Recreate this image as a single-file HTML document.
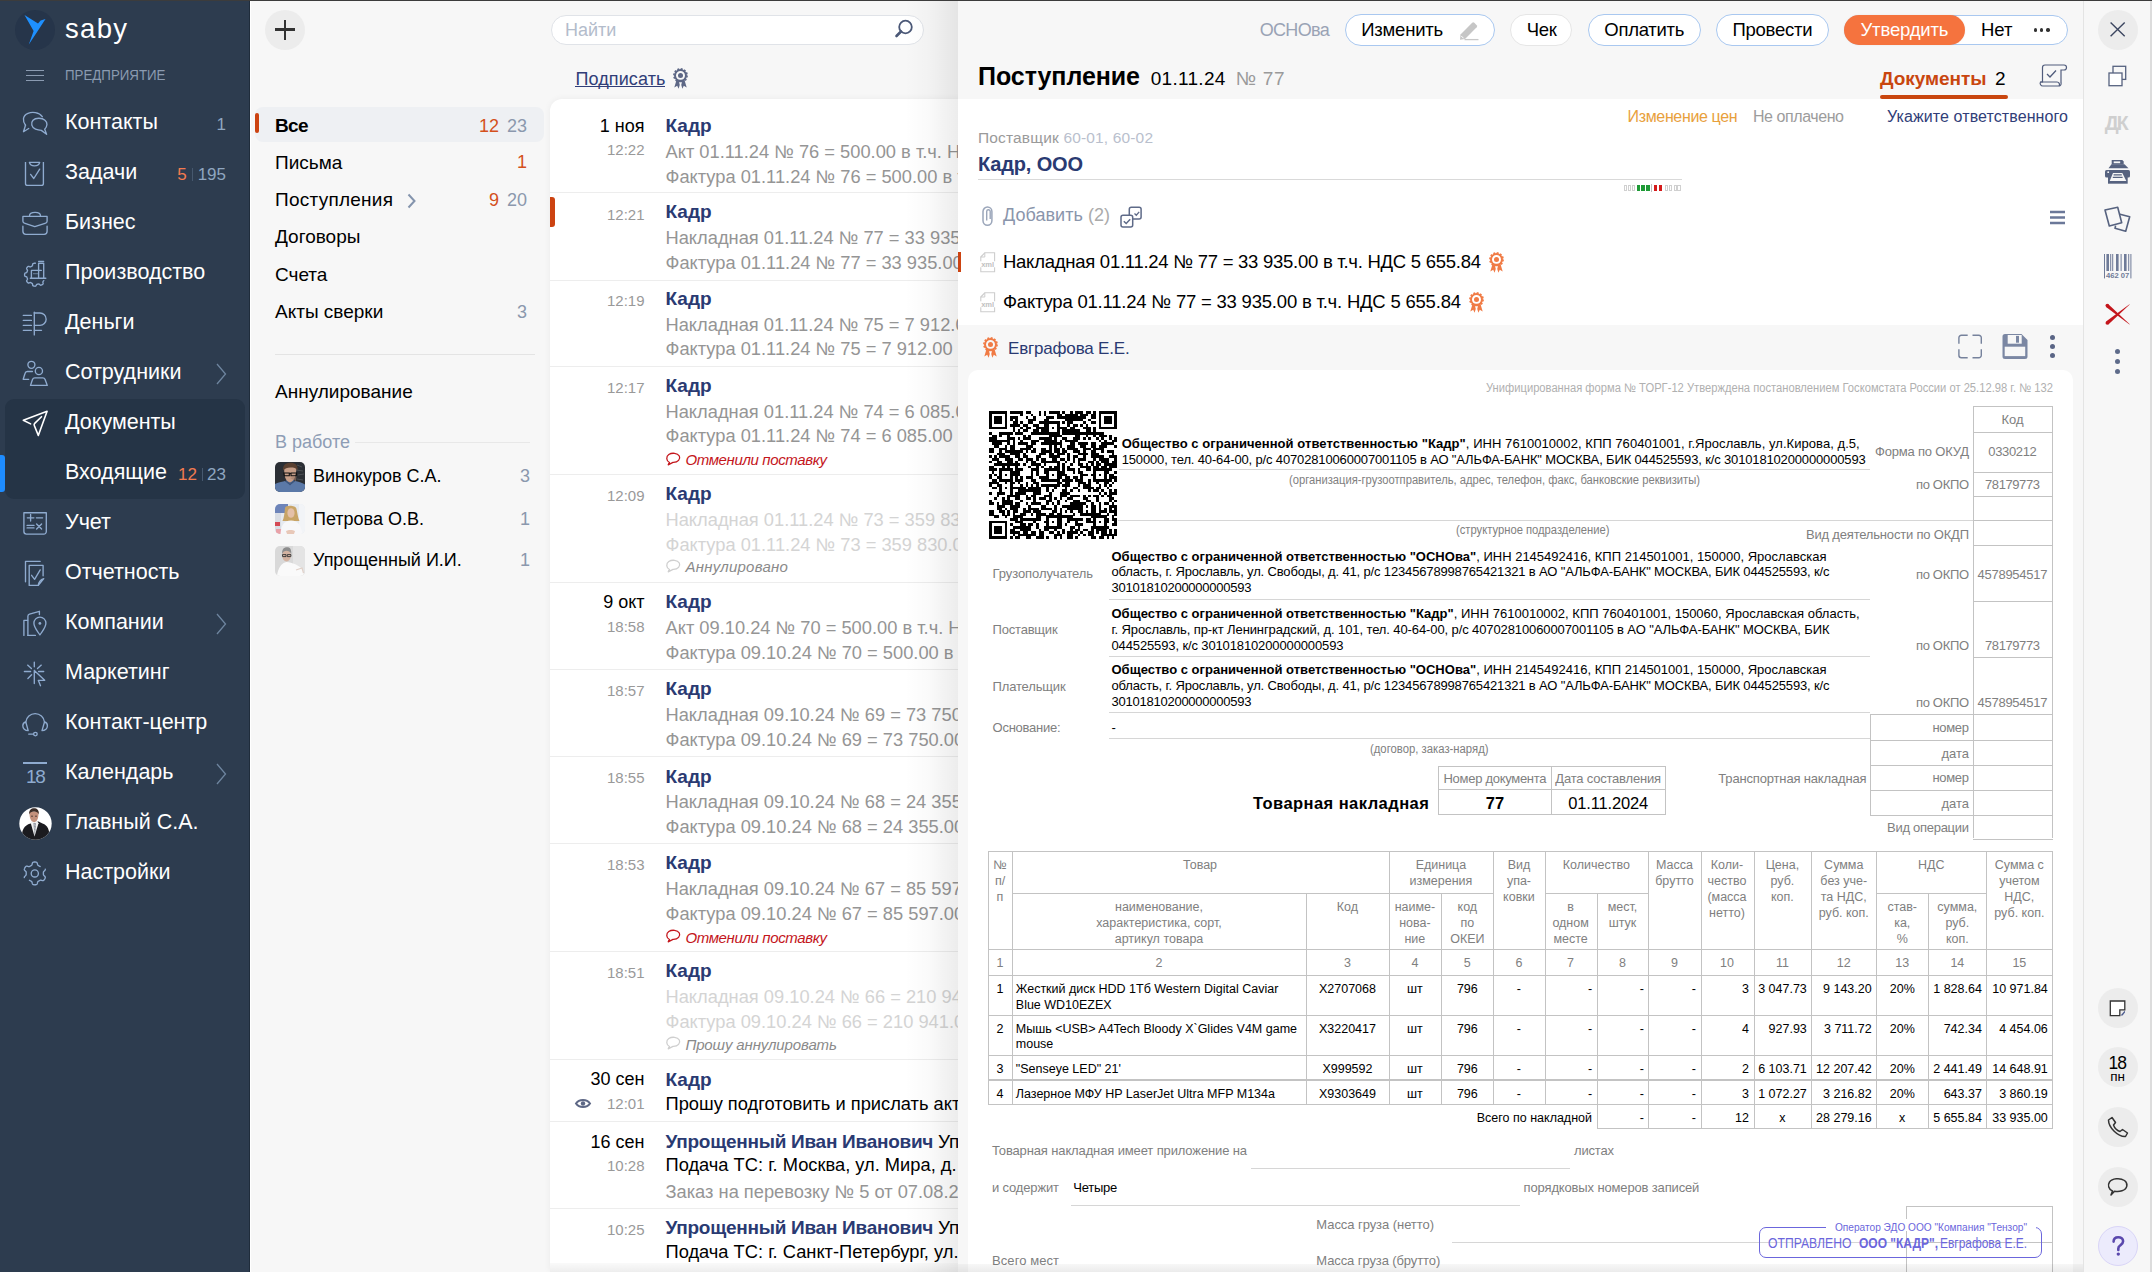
<!DOCTYPE html>
<html lang="ru"><head><meta charset="utf-8"><title>Saby</title>
<style>
*{margin:0;padding:0;box-sizing:border-box}
html,body{width:2152px;height:1272px;overflow:hidden}
body{position:relative;font-family:"Liberation Sans",sans-serif;background:#f7f7f7;color:#000}
.a{position:absolute}
.t{position:absolute;white-space:nowrap}
svg{overflow:visible}
</style></head><body>
<div class="a" style="left:0px;top:0px;width:250px;height:1272px;background:#2d3c4f"></div>
<div class="a" style="left:249px;top:0px;width:1px;height:1272px;background:#1f2c3b"></div>
<div class="a" style="left:15px;top:10px;width:40px;height:40px;background:#26354a;border-radius:50%"></div>
<svg class="a" style="left:15px;top:10px;" width="40" height="40" viewBox="0 0 40 40"><path d="M9.5 5 L23 13.6 L25.6 10.4 L30.5 9 L25 17.5 L13.8 34.5 L18.6 21 Z" fill="#1e90ff"/></svg>
<div class="t" style="left:65px;top:14.72px;font-size:27.5px;line-height:27.5px;letter-spacing:1.304px;"><span style="color:#ffffff">saby</span></div>
<div class="a" style="left:26px;top:70px;width:18px;height:1.2px;background:#8b9bb1"></div>
<div class="a" style="left:26px;top:75px;width:18px;height:1.2px;background:#8b9bb1"></div>
<div class="a" style="left:26px;top:80px;width:18px;height:1.2px;background:#8b9bb1"></div>
<div class="t" style="left:65px;top:67.3px;font-size:15px;line-height:15px;transform:scaleX(0.8870);transform-origin:0 0;"><span style="color:#8b9bb1">ПРЕДПРИЯТИЕ</span></div>
<div class="a" style="left:5px;top:399px;width:240px;height:100px;background:#253446;border-radius:9px"></div>
<div class="a" style="left:0px;top:455px;width:5px;height:37px;background:#1e8cff;border-radius:0 3px 3px 0"></div>
<div class="t" style="left:65px;top:111.8px;font-size:21.5px;line-height:21.5px;"><span style="color:#ffffff">Контакты</span></div>
<div class="t" style="left:65px;top:161.8px;font-size:21.5px;line-height:21.5px;"><span style="color:#ffffff">Задачи</span></div>
<div class="t" style="left:65px;top:211.8px;font-size:21.5px;line-height:21.5px;"><span style="color:#ffffff">Бизнес</span></div>
<div class="t" style="left:65px;top:261.8px;font-size:21.5px;line-height:21.5px;"><span style="color:#ffffff">Производство</span></div>
<div class="t" style="left:65px;top:311.8px;font-size:21.5px;line-height:21.5px;"><span style="color:#ffffff">Деньги</span></div>
<div class="t" style="left:65px;top:361.8px;font-size:21.5px;line-height:21.5px;"><span style="color:#ffffff">Сотрудники</span></div>
<div class="t" style="left:65px;top:411.8px;font-size:21.5px;line-height:21.5px;"><span style="color:#ffffff">Документы</span></div>
<div class="t" style="left:65px;top:461.8px;font-size:21.5px;line-height:21.5px;"><span style="color:#ffffff">Входящие</span></div>
<div class="t" style="left:65px;top:511.8px;font-size:21.5px;line-height:21.5px;"><span style="color:#ffffff">Учет</span></div>
<div class="t" style="left:65px;top:561.8px;font-size:21.5px;line-height:21.5px;"><span style="color:#ffffff">Отчетность</span></div>
<div class="t" style="left:65px;top:611.8px;font-size:21.5px;line-height:21.5px;"><span style="color:#ffffff">Компании</span></div>
<div class="t" style="left:65px;top:661.8px;font-size:21.5px;line-height:21.5px;"><span style="color:#ffffff">Маркетинг</span></div>
<div class="t" style="left:65px;top:711.8px;font-size:21.5px;line-height:21.5px;"><span style="color:#ffffff">Контакт-центр</span></div>
<div class="t" style="left:65px;top:761.8px;font-size:21.5px;line-height:21.5px;"><span style="color:#ffffff">Календарь</span></div>
<div class="t" style="left:65px;top:811.8px;font-size:21.5px;line-height:21.5px;"><span style="color:#ffffff">Главный С.А.</span></div>
<div class="t" style="left:65px;top:861.8px;font-size:21.5px;line-height:21.5px;"><span style="color:#ffffff">Настройки</span></div>
<svg class="a" style="left:22px;top:109px;" width="26" height="26" viewBox="0 0 26 26"><path fill="none" stroke="#8fabcf" stroke-width="1.35" stroke-linecap="round" stroke-linejoin="round" d="M3.5 16.2 C0.5 12.5 0.3 6.5 6 4.3 C10 2.8 17 3 20.3 7.7"/><path fill="none" stroke="#8fabcf" stroke-width="1.35" stroke-linecap="round" stroke-linejoin="round" d="M3.5 16.2 L1.5 22.7 L6.7 19.5"/><path fill="none" stroke="#8fabcf" stroke-width="1.35" stroke-linecap="round" stroke-linejoin="round" d="M22.7 20.3 C25.5 17.5 25.8 13.5 23 11.2 C20 8.6 13.5 8.6 11 11.3 C8.5 14 9.5 18.5 13.5 20.2 C15.5 21 17.5 21.3 19.3 21.4 L24.6 25.3 Z"/></svg>
<svg class="a" style="left:22px;top:159px;" width="26" height="26" viewBox="0 0 26 26"><path fill="none" stroke="#8fabcf" stroke-width="1.35" stroke-linecap="butt" stroke-linejoin="round" d="M3.5 3.1 V24.4 A2 2 0 0 0 5.5 26.4 H19.4 A2 2 0 0 0 21.4 24.4 V3.1"/><path fill="none" stroke="#8fabcf" stroke-width="1.35" stroke-linecap="round" stroke-linejoin="round" d="M7.4 3.3 H17.7 C17.2 5.6 15.8 6.8 12.5 6.8 C9.2 6.8 7.9 5.6 7.4 3.3 Z"/><path fill="none" stroke="#8fabcf" stroke-width="1.35" stroke-linecap="round" stroke-linejoin="round" d="M8.6 15.4 L11.8 19.5 L17.7 10.1"/></svg>
<svg class="a" style="left:22px;top:209px;" width="26" height="26" viewBox="0 0 26 26"><path fill="none" stroke="#8fabcf" stroke-width="1.35" stroke-linecap="round" stroke-linejoin="round" d="M7.5 6.9 C7.5 4.2 9.5 3.4 13.1 3.4 C16.7 3.4 18.5 4.2 18.5 6.9"/><path fill="none" stroke="#8fabcf" stroke-width="1.35" stroke-linecap="round" stroke-linejoin="round" d="M0.9 7.4 H25.1 V12.2 C25.1 13.5 24.2 14 23 14.4 L12.8 17.6 L3 14.4 C1.8 14 0.9 13.5 0.9 12.2 Z"/><path fill="none" stroke="#8fabcf" stroke-width="1.35" stroke-linecap="round" stroke-linejoin="round" d="M0.9 17.2 V22.3 A3 3 0 0 0 3.9 25.3 H22.1 A3 3 0 0 0 25.1 22.3 V17.2"/></svg>
<svg class="a" style="left:22px;top:259px;" width="26" height="26" viewBox="0 0 26 26"><path fill="none" stroke="#8fabcf" stroke-width="1.35" stroke-linecap="round" stroke-linejoin="round" d="M13.40 4.22 L13.30 4.20 L13.19 4.19 L13.09 4.18 L12.99 4.18 L12.89 4.19 L12.79 4.20 L12.69 4.21 L12.59 4.22 L12.49 4.23 L12.39 4.24 L12.29 4.26 L12.19 4.28 L12.09 4.29 L11.99 4.31 L11.89 4.33 L11.80 4.36 L11.70 4.38 L11.60 4.40 L11.50 4.43 L11.41 4.46 L11.31 4.50 L11.22 4.53 L11.13 4.58 L11.04 4.63 L10.95 4.69 L10.87 4.77 L10.79 4.86 L10.73 4.98 L10.67 5.12 L10.63 5.30 L10.60 5.49 L10.58 5.71 L10.56 5.92 L10.54 6.13 L10.51 6.31 L10.48 6.46 L10.44 6.58 L10.39 6.69 L10.33 6.77 L10.27 6.84 L10.21 6.90 L10.14 6.95 L10.07 7.00 L10.00 7.04 L9.92 7.09 L9.85 7.13 L9.78 7.17 L9.71 7.21 L9.63 7.25 L9.56 7.29 L9.49 7.34 L9.42 7.38 L9.34 7.42 L9.27 7.46 L9.20 7.50 L9.13 7.55 L9.06 7.59 L8.98 7.63 L8.91 7.67 L8.84 7.71 L8.77 7.75 L8.69 7.79 L8.61 7.82 L8.53 7.85 L8.44 7.88 L8.35 7.89 L8.24 7.89 L8.12 7.87 L7.98 7.84 L7.82 7.78 L7.64 7.70 L7.45 7.61 L7.25 7.52 L7.06 7.44 L6.88 7.38 L6.72 7.34 L6.57 7.33 L6.45 7.34 L6.34 7.36 L6.24 7.40 L6.14 7.45 L6.06 7.51 L5.98 7.57 L5.90 7.63 L5.82 7.70 L5.75 7.77 L5.68 7.84 L5.61 7.91 L5.54 7.99 L5.47 8.06 L5.41 8.14 L5.34 8.21 L5.28 8.29 L5.21 8.37 L5.15 8.45 L5.09 8.53 L5.03 8.61 L4.97 8.69 L4.91 8.77 L4.86 8.86 L4.80 8.94 L4.75 9.03 L4.71 9.12 L4.67 9.22 L4.64 9.32 L4.62 9.43 L4.62 9.54 L4.64 9.67 L4.68 9.81 L4.75 9.97 L4.84 10.13 L4.96 10.31 L5.08 10.49 L5.20 10.66 L5.31 10.82 L5.39 10.97 L5.45 11.09 L5.48 11.21 L5.49 11.31 L5.50 11.41 L5.49 11.49 L5.47 11.58 L5.45 11.66 L5.42 11.74 L5.40 11.82 L5.37 11.90 L5.34 11.98 L5.31 12.06 L5.28 12.14 L5.25 12.21 L5.22 12.29 L5.20 12.37 L5.17 12.45 L5.14 12.53 L5.11 12.61 L5.08 12.69 L5.06 12.76 L5.03 12.84 L5.00 12.92 L4.97 13.00 L4.94 13.08 L4.91 13.16 L4.87 13.23 L4.83 13.31 L4.78 13.38 L4.72 13.46 L4.65 13.53 L4.55 13.59 L4.43 13.65 L4.28 13.71 L4.10 13.77 L3.90 13.82 L3.69 13.88 L3.49 13.94 L3.30 14.01 L3.14 14.08 L3.02 14.16 L2.92 14.25 L2.84 14.34 L2.78 14.43 L2.74 14.53 L2.71 14.62 L2.68 14.72 L2.66 14.82 L2.65 14.92 L2.63 15.02 L2.62 15.12 L2.62 15.22 L2.61 15.32 L2.60 15.42 L2.60 15.52 L2.60 15.62 L2.60 15.72 L2.60 15.83 L2.60 15.93 L2.61 16.03 L2.61 16.13 L2.62 16.23 L2.63 16.33 L2.64 16.43 L2.65 16.53 L2.67 16.63 L2.69 16.73 L2.72 16.83 L2.76 16.92 L2.81 17.02 L2.87 17.11 L2.96 17.20 L3.07 17.28 L3.22 17.36 L3.39 17.43 L3.58 17.49 L3.79 17.55 L4.00 17.60 L4.19 17.66 L4.36 17.72 L4.49 17.78 L4.60 17.84 L4.68 17.91 L4.75 17.98 L4.81 18.05 L4.85 18.13 L4.89 18.20 L4.92 18.28 L4.95 18.36 L4.98 18.44 L5.01 18.52 L5.04 18.60 L5.07 18.67 L5.10 18.75 L5.12 18.83 L5.15 18.91 L5.18 18.99 L5.21 19.07 L5.24 19.15 L5.27 19.22 L5.30 19.30 L5.33 19.38 L5.36 19.46 L5.38 19.54 L5.41 19.62 L5.44 19.70 L5.46 19.78 L5.48 19.86 L5.49 19.95 L5.50 20.04 L5.49 20.14 L5.47 20.25 L5.42 20.37 L5.35 20.50 L5.26 20.65 L5.15 20.82 L5.02 21.00 L4.90 21.18 L4.79 21.35 L4.71 21.51 L4.65 21.66 L4.63 21.79 L4.62 21.92 L4.63 22.03 L4.65 22.13 L4.69 22.23 L4.73 22.32 L4.78 22.41 L4.83 22.50 L4.88 22.58 L4.94 22.67 L5.00 22.75 L5.06 22.83 L5.12 22.91 L5.18 22.99 L5.24 23.07 L5.31 23.15 L5.37 23.23 L5.44 23.30 L5.51 23.38 L5.57 23.45 L5.64 23.52 L5.71 23.60 L5.79 23.67 L5.86 23.73 L5.94 23.80 L6.02 23.86 L6.10 23.92 L6.19 23.97 L6.28 24.02 L6.39 24.05 L6.51 24.07 L6.64 24.07 L6.79 24.04 L6.96 24.00 L7.15 23.93 L7.35 23.84 L7.54 23.75 L7.73 23.66 L7.90 23.59 L8.05 23.54 L8.18 23.52 L8.29 23.51 L8.39 23.51 L8.49 23.53 L8.57 23.56 L8.65 23.59 L8.73 23.63 L8.80 23.67 L8.88 23.71 L8.95 23.75 L9.02 23.79 L9.09 23.83 L9.16 23.88 L9.24 23.92 L9.31 23.96 L9.38 24.00 L9.45 24.04 L9.52 24.09 L9.60 24.13 L9.67 24.17 L9.74 24.21 L9.81 24.25 L9.89 24.29 L9.96 24.33 L10.03 24.38 L10.10 24.42 L10.17 24.47 L10.24 24.53 L10.30 24.59 L10.36 24.67 L10.41 24.76 L10.46 24.87 L10.50 25.01 L10.53 25.18 L10.55 25.37 L10.57 25.58 L10.59 25.80 L10.61 26.01 L10.65 26.19 L10.70 26.35 L10.76 26.48 L10.83 26.59 L10.91 26.67 L10.99 26.74 L11.08 26.80 L11.17 26.85 L11.26 26.89 L11.36 26.92 L11.45 26.95 L11.55 26.98 L11.65 27.01 L11.75 27.03 L11.84 27.06 L11.94 27.08 L12.04 27.10 L12.14 27.12 L12.24 27.13 L12.34 27.15 L12.44 27.16 L12.54 27.18 L12.64 27.19 L12.74 27.20 L12.84 27.21 L12.94 27.21 L13.04 27.22 L13.14 27.21 L13.24 27.21 L13.35 27.19 L13.45 27.17 L13.55 27.13 L13.65 27.08 L13.75 27.00 L13.86 26.90 L13.96 26.76 L14.05 26.60 L14.15 26.41 L14.24 26.21 L14.33 26.02 L14.42 25.85 L14.50 25.70 L14.58 25.59 L14.67 25.50 L14.75 25.44 L14.83 25.39 L14.91 25.35 L14.99 25.32 L15.07 25.30 L15.16 25.28 L15.24 25.26 L15.32 25.25 L15.40 25.23 L15.49 25.22 L15.57 25.20 L15.65 25.19 L15.73 25.18 L15.82 25.16 L15.90 25.15 L15.98 25.13 L16.06 25.12 L16.14 25.10 L16.23 25.09 L16.31 25.07 L16.39 25.06 L16.47 25.04 L16.56 25.03 L16.64 25.02 L16.72 25.01 L16.81 25.01 L16.90 25.02 L16.99 25.03 L17.09 25.06 L17.19 25.11 L17.31 25.18 L17.43 25.28 L17.57 25.40 L17.72 25.55 L17.87 25.70 L18.02 25.85 L18.17 25.98 L18.32 26.08 L18.45 26.15 L18.58 26.20 L18.69 26.22 L18.80 26.22 L18.91 26.21 L19.01 26.19 L19.11 26.17 L19.20 26.13 L19.30 26.10 L19.39 26.06 L19.48 26.02 L19.57 25.97 L19.66 25.93 L19.75 25.88 L19.84 25.84 L19.93 25.79 L20.02 25.74 L20.10 25.68 L20.19 25.63 L20.28 25.58 L20.36 25.52 L20.44 25.47 L20.53 25.41 L20.61 25.35 L20.69 25.29 L20.76 25.22 L20.84 25.16 L20.91 25.08 L20.98 25.00 L21.03 24.91 L21.08 24.81 L21.11 24.69 L21.13 24.55 L21.13 24.39 L21.10 24.21 L21.06 24.01 L21.01 23.80 L20.95 23.59 L20.90 23.40 L20.87 23.23 L20.85 23.08 L20.85 22.95 L20.87 22.84 L20.90 22.75 L20.93 22.66 L20.98 22.59 L21.02 22.51 L21.07 22.45 L21.12 22.38 L21.18 22.32 L21.23 22.25 L21.28 22.19 L21.34 22.12 L21.39 22.06 L21.45 22.00 L21.50 21.93 L21.55 21.87 L21.61 21.81 L21.66 21.74 L21.71 21.68 L21.77 21.61"/><path fill="none" stroke="#8fabcf" stroke-width="1.35" stroke-linecap="round" stroke-linejoin="round" d="M9.4 19.2 V11.4 H19.3"/><path fill="none" stroke="#8fabcf" stroke-width="1.35" stroke-linecap="round" stroke-linejoin="round" d="M8.3 19.2 H23.8"/><path fill="none" stroke="#8fabcf" stroke-width="1.35" stroke-linecap="round" stroke-linejoin="round" d="M16.6 19.2 V4.2 H21.7 V19.2"/><path fill="none" stroke="#8fabcf" stroke-width="1.35" stroke-linecap="round" stroke-linejoin="round" d="M16.6 2.3 H21.7"/><path fill="none" stroke="#8fabcf" stroke-width="1.2" stroke-dasharray="1 1" d="M11.5 14.6 H17.5"/></svg>
<svg class="a" style="left:22px;top:309px;" width="26" height="26" viewBox="0 0 26 26"><path fill="none" stroke="#8fabcf" stroke-width="1.35" stroke-linecap="round" stroke-linejoin="round" d="M1.3 6.4 H9.4 M1.3 11.4 H9.4 M1.3 16.4 H9.4 M1.3 21.3 H9.4"/><path fill="none" stroke="#8fabcf" stroke-width="1.35" stroke-linecap="round" stroke-linejoin="round" d="M12.3 3.1 V25.9"/><path fill="none" stroke="#8fabcf" stroke-width="1.35" stroke-linecap="round" stroke-linejoin="round" d="M12.3 4 H18 A6.15 6.15 0 0 1 18 16.3 H12.3"/><path fill="none" stroke="#8fabcf" stroke-width="1.35" stroke-linecap="round" stroke-linejoin="round" d="M12.3 21.3 H19.5"/></svg>
<svg class="a" style="left:22px;top:359px;" width="26" height="26" viewBox="0 0 26 26"><circle fill="none" stroke="#8fabcf" stroke-width="1.35" stroke-linecap="round" stroke-linejoin="round" cx="9.4" cy="5.8" r="3.5"/><path fill="none" stroke="#8fabcf" stroke-width="1.35" stroke-linecap="round" stroke-linejoin="round" d="M10.4 12.5 H5.3 C4 12.5 3.3 13.2 3 14.5 L1.2 20.3 H6.7"/><circle fill="none" stroke="#8fabcf" stroke-width="1.35" stroke-linecap="round" stroke-linejoin="round" cx="16.9" cy="12" r="3.6"/><path fill="none" stroke="#8fabcf" stroke-width="1.35" stroke-linecap="round" stroke-linejoin="round" d="M8.5 26.4 L10.5 20.5 C10.9 19.4 11.6 18.9 12.8 18.9 H20.8 C22 18.9 22.7 19.4 23.1 20.5 L25.3 26.4 Z"/></svg>
<svg class="a" style="left:22px;top:409px;" width="26" height="26" viewBox="0 0 26 26"><path fill="none" stroke="#ffffff" stroke-width="1.6" stroke-linejoin="round" stroke-linecap="round" d="M8.6 14.9 L1.3 11.2 L25.1 2.3 L16.3 26.4 L12.3 16.5 C11.9 15.6 12.1 15 12.7 14.4 L19.5 7.7"/></svg>
<svg class="a" style="left:22px;top:509px;" width="26" height="26" viewBox="0 0 26 26"><path fill="none" stroke="#8fabcf" stroke-width="1.35" stroke-linecap="round" stroke-linejoin="round" d="M1.9 3.7 V22.6 A2.5 2.5 0 0 0 4.4 25.1 H21.8 A2.5 2.5 0 0 0 24.3 22.6 V3.7 Z"/><path fill="none" stroke="#8fabcf" stroke-width="1.35" stroke-linecap="round" stroke-linejoin="round" d="M5.3 8.8 H11.9 M8.6 5.5 V12.1 M14.4 8.8 H20.6 M5.1 16.4 H12 M5.1 18.9 H12 M14.6 15 L19.6 20 M19.6 15 L14.6 20"/></svg>
<svg class="a" style="left:22px;top:559px;" width="26" height="26" viewBox="0 0 26 26"><path fill="none" stroke="#8fabcf" stroke-width="1.35" stroke-linecap="round" stroke-linejoin="round" d="M3.5 22.7 V2.3 H18.2"/><path fill="none" stroke="#8fabcf" stroke-width="1.35" stroke-linecap="round" stroke-linejoin="round" d="M16.3 26.4 H7.2 V6.4 H21.1 V16.8"/><path fill="none" stroke="#8fabcf" stroke-width="1.35" stroke-linecap="round" stroke-linejoin="round" d="M16.3 26.4 C16.6 23.2 18.5 20.6 21.8 19.6 Z"/><path fill="none" stroke="#8fabcf" stroke-width="1.35" stroke-linecap="round" stroke-linejoin="round" d="M9.6 16.3 L12.6 20.3 L18.2 10.9"/></svg>
<svg class="a" style="left:22px;top:609px;" width="26" height="26" viewBox="0 0 26 26"><path fill="none" stroke="#8fabcf" stroke-width="1.35" stroke-linecap="round" stroke-linejoin="round" d="M1.9 26.4 V11.4 H5.6"/><path fill="none" stroke="#8fabcf" stroke-width="1.35" stroke-linecap="round" stroke-linejoin="round" d="M5.9 26.4 V7.2 C5.9 6 6.5 5.5 7.5 5.2 L17.4 2.3 V5.6"/><path fill="none" stroke="#8fabcf" stroke-width="1.35" stroke-linecap="round" stroke-linejoin="round" d="M5.9 26.4 H13.4"/><path fill="none" stroke="#8fabcf" stroke-width="1.35" stroke-linecap="round" stroke-linejoin="round" d="M17.9 25.9 C15 21.5 11.9 18.5 11.9 14.1 A6 6 0 0 1 23.9 14.1 C23.9 18.5 20.8 21.5 17.9 25.9 Z"/><circle cx="17.9" cy="14.4" r="1.4" fill="#8fabcf"/></svg>
<svg class="a" style="left:22px;top:659px;" width="26" height="26" viewBox="0 0 26 26"><path fill="none" stroke="#8fabcf" stroke-width="1.35" stroke-linecap="round" stroke-linejoin="round" d="M12.3 3.1 V7.7 M5.6 6.1 L9.4 9.6 M19.3 6.1 L15.5 9.6 M2.4 12.5 H8.6 M16.6 12.5 H21.7 M5.9 19.5 L9.6 15.7"/><path fill="none" stroke="#8fabcf" stroke-width="1.35" stroke-linecap="round" stroke-linejoin="round" d="M12.3 11.4 V24.5 M12.3 11.4 L22.7 21.3 H16.3 L18.5 26.7"/></svg>
<svg class="a" style="left:22px;top:709px;" width="26" height="26" viewBox="0 0 26 26"><path fill="none" stroke="#8fabcf" stroke-width="1.35" stroke-linecap="round" stroke-linejoin="round" d="M3.8 13 A9.4 9.4 0 0 1 22.5 13"/><path fill="none" stroke="#8fabcf" stroke-width="1.35" stroke-linecap="round" stroke-linejoin="round" d="M3.8 13 L6.2 21.6 C3 21.6 0.8 19.5 0.8 16.8 C0.8 14.5 2 13.3 3.8 13 Z"/><path fill="none" stroke="#8fabcf" stroke-width="1.35" stroke-linecap="round" stroke-linejoin="round" d="M22.5 13 L20 21.6 C23.2 21.6 25.4 19.5 25.4 16.8 C25.4 14.5 24.2 13.3 22.5 13 Z"/><path fill="none" stroke="#8fabcf" stroke-width="1.35" stroke-linecap="round" stroke-linejoin="round" d="M6.7 25.1 H11.4"/><circle fill="none" stroke="#8fabcf" stroke-width="1.35" stroke-linecap="round" stroke-linejoin="round" cx="13.4" cy="25.1" r="1.8"/></svg>
<svg class="a" style="left:22px;top:859px;" width="26" height="26" viewBox="0 0 26 26"><path fill="none" stroke="#8fabcf" stroke-width="1.35" stroke-linecap="round" stroke-linejoin="round" d="M23.27 10.17 L23.28 10.27 L23.29 10.37 L23.29 10.48 L23.28 10.58 L23.26 10.69 L23.23 10.81 L23.18 10.92 L23.12 11.04 L23.05 11.16 L22.96 11.29 L22.85 11.42 L22.73 11.54 L22.61 11.67 L22.47 11.80 L22.34 11.93 L22.20 12.05 L22.08 12.16 L21.96 12.28 L21.85 12.38 L21.76 12.48 L21.68 12.58 L21.62 12.67 L21.57 12.76 L21.52 12.85 L21.49 12.93 L21.46 13.01 L21.44 13.09 L21.43 13.17 L21.42 13.25 L21.41 13.33 L21.40 13.40 L21.40 13.48 L21.40 13.56 L21.39 13.63 L21.39 13.71 L21.39 13.78 L21.40 13.86 L21.40 13.93 L21.40 14.01 L21.40 14.08 L21.40 14.15 L21.40 14.23 L21.40 14.30 L21.40 14.38 L21.40 14.45 L21.40 14.53 L21.40 14.60 L21.40 14.68 L21.40 14.75 L21.40 14.83 L21.40 14.90 L21.40 14.98 L21.39 15.05 L21.39 15.12 L21.39 15.20 L21.40 15.28 L21.40 15.35 L21.40 15.43 L21.41 15.50 L21.42 15.58 L21.43 15.66 L21.45 15.74 L21.47 15.82 L21.50 15.90 L21.54 15.99 L21.59 16.07 L21.64 16.16 L21.72 16.26 L21.80 16.36 L21.90 16.46 L22.01 16.57 L22.13 16.68 L22.26 16.80 L22.39 16.93 L22.53 17.05 L22.66 17.18 L22.78 17.31 L22.90 17.44 L23.00 17.56 L23.08 17.69 L23.15 17.81 L23.20 17.93 L23.24 18.04 L23.27 18.15 L23.28 18.26 L23.29 18.37 L23.29 18.47 L23.28 18.57 L23.26 18.67 L23.24 18.77 L23.22 18.87 L23.19 18.96 L23.16 19.05 L23.13 19.15 L23.09 19.24 L23.06 19.33 L23.02 19.42 L22.98 19.51 L22.94 19.60 L22.89 19.69 L22.85 19.78 L22.80 19.87 L22.75 19.95 L22.71 20.04 L22.66 20.13 L22.61 20.21 L22.56 20.30 L22.50 20.38 L22.45 20.46 L22.39 20.54 L22.34 20.63 L22.28 20.71 L22.22 20.79 L22.16 20.86 L22.10 20.94 L22.04 21.02 L21.97 21.09 L21.90 21.16 L21.83 21.23 L21.76 21.30 L21.68 21.36 L21.60 21.42 L21.51 21.48 L21.42 21.53 L21.32 21.57 L21.22 21.61 L21.10 21.64 L20.98 21.65 L20.84 21.66 L20.70 21.65 L20.54 21.64 L20.38 21.61 L20.21 21.57 L20.03 21.52 L19.85 21.47 L19.68 21.41 L19.51 21.36 L19.34 21.30 L19.19 21.26 L19.05 21.23 L18.92 21.20 L18.79 21.18 L18.68 21.17 L18.58 21.17 L18.49 21.18 L18.40 21.19 L18.31 21.21 L18.24 21.24 L18.16 21.26 L18.09 21.29 L18.02 21.32 L17.95 21.36 L17.88 21.39 L17.82 21.43 L17.75 21.47 L17.69 21.50 L17.62 21.54 L17.56 21.58 L17.49 21.62 L17.43 21.66 L17.36 21.69 L17.30 21.73 L17.23 21.77 L17.17 21.81 L17.11 21.84 L17.04 21.88 L16.98 21.92 L16.91 21.96 L16.85 21.99 L16.78 22.03 L16.72 22.07 L16.65 22.10 L16.59 22.14 L16.52 22.18 L16.46 22.21 L16.39 22.25 L16.33 22.29 L16.26 22.33 L16.20 22.37 L16.14 22.42 L16.07 22.46 L16.01 22.52 L15.95 22.57 L15.90 22.63 L15.84 22.70 L15.79 22.78 L15.73 22.86 L15.69 22.96 L15.64 23.07 L15.60 23.20 L15.55 23.34 L15.52 23.49 L15.48 23.65 L15.44 23.83 L15.40 24.01 L15.36 24.19 L15.31 24.36 L15.26 24.53 L15.21 24.69 L15.15 24.84 L15.08 24.97 L15.01 25.09 L14.93 25.19 L14.85 25.28 L14.77 25.35 L14.68 25.42 L14.59 25.48 L14.50 25.53 L14.41 25.57 L14.31 25.60 L14.22 25.63 L14.12 25.66 L14.03 25.68 L13.93 25.70 L13.83 25.72 L13.74 25.74 L13.64 25.75 L13.54 25.76 L13.44 25.77 L13.34 25.78 L13.24 25.79 L13.15 25.79 L13.05 25.80 L12.95 25.80 L12.85 25.80 L12.75 25.80 L12.65 25.80 L12.55 25.80 L12.45 25.79 L12.35 25.79 L12.26 25.78 L12.16 25.77 L12.06 25.76 L11.96 25.75 L11.86 25.74 L11.77 25.72 L11.67 25.70 L11.57 25.68 L11.48 25.66 L11.38 25.63 L11.28 25.60 L11.19 25.57 L11.10 25.52 L11.01 25.48 L10.92 25.42 L10.83 25.35 L10.75 25.28 L10.67 25.19 L10.59 25.09 L10.52 24.97 L10.45 24.84 L10.39 24.69 L10.34 24.53 L10.29 24.36 L10.24 24.18 L10.20 24.00 L10.16 23.82 L10.12 23.65 L10.08 23.49 L10.04 23.33 L10.00 23.20 L9.96 23.07 L9.91 22.96 L9.87 22.86 L9.81 22.78 L9.76 22.70 L9.70 22.63 L9.65 22.57 L9.59 22.52 L9.52 22.46 L9.46 22.42 L9.40 22.37 L9.34 22.33 L9.27 22.29 L9.21 22.25 L9.14 22.21 L9.08 22.17 L9.01 22.14 L8.95 22.10 L8.88 22.06 L8.82 22.03 L8.75 21.99 L8.69 21.95 L8.62 21.92 L8.56 21.88 L8.49 21.84 L8.43 21.81 L8.36 21.77 L8.30 21.73 L8.24 21.69 L8.17 21.66 L8.11 21.62 L8.04 21.58 L7.98 21.54 L7.91 21.50 L7.85 21.47 L7.78 21.43 L7.72 21.39 L7.65 21.36 L7.58 21.32 L7.51 21.29 L7.44 21.26"/><path fill="none" stroke="#8fabcf" stroke-width="1.35" stroke-linecap="round" stroke-linejoin="round" d="M2.33 18.63 L2.32 18.53 L2.31 18.43 L2.31 18.32 L2.32 18.22 L2.34 18.11 L2.37 17.99 L2.42 17.88 L2.48 17.76 L2.55 17.64 L2.64 17.51 L2.75 17.38 L2.87 17.26 L2.99 17.13 L3.13 17.00 L3.26 16.87 L3.40 16.75 L3.52 16.64 L3.64 16.52 L3.75 16.42 L3.84 16.32 L3.92 16.22 L3.98 16.13 L4.03 16.04 L4.08 15.95 L4.11 15.87 L4.14 15.79 L4.16 15.71 L4.17 15.63 L4.18 15.55 L4.19 15.47 L4.20 15.40 L4.20 15.32 L4.20 15.24 L4.21 15.17 L4.21 15.09 L4.21 15.02 L4.20 14.94 L4.20 14.87 L4.20 14.79 L4.20 14.72 L4.20 14.65 L4.20 14.57 L4.20 14.50 L4.20 14.42 L4.20 14.35 L4.20 14.27 L4.20 14.20 L4.20 14.12 L4.20 14.05 L4.20 13.97 L4.20 13.90 L4.20 13.82 L4.21 13.75 L4.21 13.68 L4.21 13.60 L4.20 13.52 L4.20 13.45 L4.20 13.37 L4.19 13.30 L4.18 13.22 L4.17 13.14 L4.15 13.06 L4.13 12.98 L4.10 12.90 L4.06 12.81 L4.01 12.73 L3.96 12.64 L3.88 12.54 L3.80 12.44 L3.70 12.34 L3.59 12.23 L3.47 12.12 L3.34 12.00 L3.21 11.87 L3.07 11.75 L2.94 11.62 L2.82 11.49 L2.70 11.36 L2.60 11.24 L2.52 11.11 L2.45 10.99 L2.40 10.87 L2.36 10.76 L2.33 10.65 L2.32 10.54 L2.31 10.43 L2.31 10.33 L2.32 10.23 L2.34 10.13 L2.36 10.03 L2.38 9.93 L2.41 9.84 L2.44 9.75 L2.47 9.65 L2.51 9.56 L2.54 9.47 L2.58 9.38 L2.62 9.29 L2.66 9.20 L2.71 9.11 L2.75 9.02 L2.80 8.93 L2.85 8.85 L2.89 8.76 L2.94 8.67 L2.99 8.59 L3.04 8.50 L3.10 8.42 L3.15 8.34 L3.21 8.26 L3.26 8.17 L3.32 8.09 L3.38 8.01 L3.44 7.94 L3.50 7.86 L3.56 7.78 L3.63 7.71 L3.70 7.64 L3.77 7.57 L3.84 7.50 L3.92 7.44 L4.00 7.38 L4.09 7.32 L4.18 7.27 L4.28 7.23 L4.38 7.19 L4.50 7.16 L4.62 7.15 L4.76 7.14 L4.90 7.15 L5.06 7.16 L5.22 7.19 L5.39 7.23 L5.57 7.28 L5.75 7.33 L5.92 7.39 L6.09 7.44 L6.26 7.50 L6.41 7.54 L6.55 7.57 L6.68 7.60 L6.81 7.62 L6.92 7.63 L7.02 7.63 L7.11 7.62 L7.20 7.61 L7.29 7.59 L7.36 7.56 L7.44 7.54 L7.51 7.51 L7.58 7.48 L7.65 7.44 L7.72 7.41 L7.78 7.37 L7.85 7.33 L7.91 7.30 L7.98 7.26 L8.04 7.22 L8.11 7.18 L8.17 7.14 L8.24 7.11 L8.30 7.07 L8.37 7.03 L8.43 6.99 L8.49 6.96 L8.56 6.92 L8.62 6.88 L8.69 6.84 L8.75 6.81 L8.82 6.77 L8.88 6.73 L8.95 6.70 L9.01 6.66 L9.08 6.62 L9.14 6.59 L9.21 6.55 L9.27 6.51 L9.34 6.47 L9.40 6.43 L9.46 6.38 L9.53 6.34 L9.59 6.28 L9.65 6.23 L9.70 6.17 L9.76 6.10 L9.81 6.02 L9.87 5.94 L9.91 5.84 L9.96 5.73 L10.00 5.60 L10.05 5.46 L10.08 5.31 L10.12 5.15 L10.16 4.97 L10.20 4.79 L10.24 4.61 L10.29 4.44 L10.34 4.27 L10.39 4.11 L10.45 3.96 L10.52 3.83 L10.59 3.71 L10.67 3.61 L10.75 3.52 L10.83 3.45 L10.92 3.38 L11.01 3.32 L11.10 3.27 L11.19 3.23 L11.29 3.20 L11.38 3.17 L11.48 3.14 L11.57 3.12 L11.67 3.10 L11.77 3.08 L11.86 3.06 L11.96 3.05 L12.06 3.04 L12.16 3.03 L12.26 3.02 L12.36 3.01 L12.45 3.01 L12.55 3.00 L12.65 3.00 L12.75 3.00 L12.85 3.00 L12.95 3.00 L13.05 3.00 L13.15 3.01 L13.25 3.01 L13.34 3.02 L13.44 3.03 L13.54 3.04 L13.64 3.05 L13.74 3.06 L13.83 3.08 L13.93 3.10 L14.03 3.12 L14.12 3.14 L14.22 3.17 L14.32 3.20 L14.41 3.23 L14.50 3.28 L14.59 3.32 L14.68 3.38 L14.77 3.45 L14.85 3.52 L14.93 3.61 L15.01 3.71 L15.08 3.83 L15.15 3.96 L15.21 4.11 L15.26 4.27 L15.31 4.44 L15.36 4.62 L15.40 4.80 L15.44 4.98 L15.48 5.15 L15.52 5.31 L15.56 5.47 L15.60 5.60 L15.64 5.73 L15.69 5.84 L15.73 5.94 L15.79 6.02 L15.84 6.10 L15.90 6.17 L15.95 6.23 L16.01 6.28 L16.08 6.34 L16.14 6.38 L16.20 6.43 L16.26 6.47 L16.33 6.51 L16.39 6.55 L16.46 6.59 L16.52 6.63 L16.59 6.66 L16.65 6.70 L16.72 6.74 L16.78 6.77 L16.85 6.81 L16.91 6.85 L16.98 6.88 L17.04 6.92 L17.11 6.96 L17.17 6.99 L17.24 7.03 L17.30 7.07 L17.36 7.11 L17.43 7.14 L17.49 7.18 L17.56 7.22 L17.62 7.26 L17.69 7.30 L17.75 7.33 L17.82 7.37 L17.88 7.41 L17.95 7.44 L18.02 7.48 L18.09 7.51 L18.16 7.54"/><circle fill="none" stroke="#8fabcf" stroke-width="1.35" stroke-linecap="round" stroke-linejoin="round" cx="12.8" cy="14.4" r="3.6"/></svg>
<div class="a" style="left:23.3px;top:761.8px;width:23.3px;height:2px;background:#8fabcf"></div>
<div class="t" style="left:26.1px;top:766.62px;font-size:19px;line-height:19px;letter-spacing:-1.334px;"><span style="color:#8fabcf">18</span></div>
<svg class="a" style="left:19px;top:806.5px;" width="33" height="33" viewBox="0 0 33 33"><defs><clipPath id="av"><circle cx="16.5" cy="16.5" r="16.2"/></clipPath></defs><g clip-path="url(#av)"><rect width="33" height="33" fill="#ffffff"/><path d="M2.5 33 C2.8 22 5 18.5 11.5 16.5 L15.5 14.5 L19.5 14.5 L23.5 16.5 C29 18.5 30.5 22 30.8 33 Z" fill="#1b1b1f"/><path d="M11.8 16.3 L15.5 29.5 L19.5 16.2 L18 13.5 H13 Z" fill="#f2f2f2"/><path d="M14.3 16 H16.8 L17 19 L15.8 29.5 L14.6 19 Z" fill="#9a9ea6"/><path d="M14.5 17.5 L16.8 18.5 M14.6 20.5 L16.9 21.5 M14.8 23.5 L16.7 24.5" stroke="#d0d3d8" stroke-width="0.7"/><path d="M10.5 4.5 C10.4 11 11.5 14.5 15.2 15.2 C18.5 14.5 19.6 11 19.5 4.5 Z" fill="#c4917c"/><path d="M10.2 7.5 C9.8 3 12.2 1.2 15 1.2 C18 1.2 20.2 3 19.8 7.5 C19 5.2 17.5 4.5 15 4.5 C12.5 4.5 11 5.2 10.2 7.5 Z" fill="#3d2e28"/><path d="M12 9.2 H14 M16 9.2 H18" stroke="#4a3a34" stroke-width="0.9"/></g></svg>
<div class="t" style="left:216.55px;top:115.61px;font-size:17px;line-height:17px;"><span style="color:#8fa6c0">1</span></div>
<div class="t" style="left:177.25px;top:165.61px;font-size:17px;line-height:17px;"><span style="color:#f47b50">5</span></div>
<div class="a" style="left:191.5px;top:168px;width:1px;height:13px;background:#46586e"></div>
<div class="t" style="left:197.64px;top:165.61px;font-size:17px;line-height:17px;"><span style="color:#8fa6c0">195</span></div>
<div class="t" style="left:177.99px;top:465.61px;font-size:17px;line-height:17px;"><span style="color:#f47b50">12</span></div>
<div class="a" style="left:201.5px;top:468px;width:1px;height:13px;background:#46586e"></div>
<div class="t" style="left:207.09px;top:465.61px;font-size:17px;line-height:17px;"><span style="color:#8fa6c0">23</span></div>
<svg class="a" style="left:214px;top:363px;" width="14" height="22" viewBox="0 0 14 22"><path d="M3 1 L11.5 11 L3 21" fill="none" stroke="#6e859f" stroke-width="1.3"/></svg>
<svg class="a" style="left:214px;top:613px;" width="14" height="22" viewBox="0 0 14 22"><path d="M3 1 L11.5 11 L3 21" fill="none" stroke="#6e859f" stroke-width="1.3"/></svg>
<svg class="a" style="left:214px;top:763px;" width="14" height="22" viewBox="0 0 14 22"><path d="M3 1 L11.5 11 L3 21" fill="none" stroke="#6e859f" stroke-width="1.3"/></svg>
<div class="a" style="left:250px;top:0px;width:708px;height:1272px;background:#f7f7f7"></div>
<div class="a" style="left:250px;top:0px;width:1px;height:1272px;background:#ffffff"></div>
<div class="a" style="left:265px;top:10px;width:40px;height:40px;background:#ececec;border-radius:50%"></div>
<div class="a" style="left:275px;top:28.3px;width:20px;height:2.4px;background:#333"></div>
<div class="a" style="left:283.8px;top:19.5px;width:2.4px;height:20px;background:#333"></div>
<div class="a" style="left:255px;top:107px;width:289px;height:35px;background:#eef0f3;border-radius:8px"></div>
<div class="a" style="left:255px;top:113px;width:4px;height:20px;background:#cc4311;border-radius:2px"></div>
<div class="t" style="left:275px;top:115.52px;font-size:19px;line-height:19px;letter-spacing:-0.678px;"><span style="font-weight:700;color:#000">Все</span></div>
<div class="t" style="left:478.98px;top:117.16px;font-size:18px;line-height:18px;"><span style="color:#d4501c">12</span></div>
<div class="t" style="left:506.98px;top:117.16px;font-size:18px;line-height:18px;"><span style="color:#8b98ad">23</span></div>
<div class="t" style="left:275px;top:152.52px;font-size:19px;line-height:19px;"><span style="color:#000">Письма</span></div>
<div class="t" style="left:516.99px;top:153.36px;font-size:18px;line-height:18px;"><span style="color:#d4501c">1</span></div>
<div class="t" style="left:275px;top:189.92px;font-size:19px;line-height:19px;letter-spacing:0.252px;"><span style="color:#000">Поступления</span></div>
<div class="t" style="left:488.99px;top:190.76px;font-size:18px;line-height:18px;"><span style="color:#d4501c">9</span></div>
<div class="t" style="left:506.98px;top:190.76px;font-size:18px;line-height:18px;"><span style="color:#8b98ad">20</span></div>
<div class="t" style="left:275px;top:227.42px;font-size:19px;line-height:19px;"><span style="color:#000">Договоры</span></div>
<div class="t" style="left:275px;top:264.92px;font-size:19px;line-height:19px;"><span style="color:#000">Счета</span></div>
<div class="t" style="left:275px;top:302.42px;font-size:19px;line-height:19px;"><span style="color:#000">Акты сверки</span></div>
<div class="t" style="left:516.99px;top:303.26px;font-size:18px;line-height:18px;"><span style="color:#8b98ad">3</span></div>
<svg class="a" style="left:404px;top:191.5px;" width="14" height="18" viewBox="0 0 14 18"><path d="M4.5 2.5 L10.5 9 L4.5 15.5" fill="none" stroke="#8494ad" stroke-width="2"/></svg>
<div class="a" style="left:275px;top:354px;width:260px;height:1px;background:#e4e4e4"></div>
<div class="t" style="left:275px;top:381.92px;font-size:19px;line-height:19px;"><span style="color:#000">Аннулирование</span></div>
<div class="t" style="left:275px;top:433.26px;font-size:18px;line-height:18px;"><span style="color:#8e9db5">В работе</span></div>
<div class="a" style="left:355px;top:442px;width:175px;height:1px;background:#e8e8e8"></div>
<svg class="a" style="left:275px;top:461.5px;border-radius:5px" width="30" height="30" viewBox="0 0 30 30"><defs><clipPath id="pc0"><rect width="30" height="30" rx="5"/></clipPath></defs><g clip-path="url(#pc0)"><rect width="30" height="30" fill="#2b2f35"/><path d="M22 3 L27 5 M21 8 L28 9 M23 13 L29 12 M22 17 L28 18" stroke="#55585c" stroke-width="0.8"/><path d="M0 30 V22 C4 20 8 19.5 10 19 L15 23 L20 19 C23 19.5 27 20.5 30 22.5 V30 Z" fill="#5b79a8"/><path d="M10.5 19 L15 23.5 L19.5 19 L18 17 H12 Z" fill="#3f5a86"/><path d="M9.2 5 C9 13.5 10 19 15 20.5 C19.5 19 21.3 14 21.3 5 Z" fill="#c69e88"/><path d="M8 8.5 C7.5 3 11 0.8 15.5 0.8 C20 0.8 23 3 22.8 8.5 C21 6 19 5.5 15.5 5.5 C12 5.5 10 6.5 8 8.5 Z" fill="#5a4030"/><path d="M8.8 11 H14.3 V13.8 H9.3 Z M16 11 H21.6 L21.2 13.8 H16 Z" fill="none" stroke="#111" stroke-width="1.1"/><path d="M14.3 11.5 H16" stroke="#111" stroke-width="0.9"/><path d="M15 16 L21.5 14 L21 19 Z" fill="#a07c68" opacity="0.6"/></g></svg>
<div class="t" style="left:313px;top:467.46px;font-size:18px;line-height:18px;"><span style="color:#000">Винокуров С.А.</span></div>
<div class="t" style="left:519.99px;top:467.46px;font-size:18px;line-height:18px;"><span style="color:#8b98ad">3</span></div>
<svg class="a" style="left:275px;top:503.5px;border-radius:5px" width="30" height="30" viewBox="0 0 30 30"><defs><clipPath id="pc1"><rect width="30" height="30" rx="5"/></clipPath></defs><g clip-path="url(#pc1)"><rect width="30" height="30" fill="#e6eaf0"/><rect x="0" y="0" width="13" height="9" fill="#6d84b9"/><rect x="24" y="0" width="6" height="30" fill="#f2f4f7"/><rect x="0" y="9" width="6" height="21" fill="#d9dde4"/><rect x="0" y="18" width="5" height="4" fill="#d44a55"/><rect x="1" y="25" width="6" height="5" fill="#e9a2a8"/><path d="M10 4 C10 0.8 21 0.8 21.5 5 C22.5 9 23 14 24.5 17 L19 17 L12 17 L7.5 17 C9 14 9.5 9 10 4 Z" fill="#c8a466"/><ellipse cx="16" cy="9" rx="3.6" ry="4.8" fill="#e4c0a8"/><path d="M5.5 30 C6 21 9 17 16 16.5 C23 17 26 21 27.5 30 Z" fill="#f7f7f9"/><path d="M11 27 C13 25.5 18 25.5 20 27 L19 30 H12 Z" fill="#e8c8b8"/></g></svg>
<div class="t" style="left:313px;top:509.76px;font-size:18px;line-height:18px;"><span style="color:#000">Петрова О.В.</span></div>
<div class="t" style="left:519.99px;top:509.76px;font-size:18px;line-height:18px;"><span style="color:#8b98ad">1</span></div>
<svg class="a" style="left:275px;top:545.5px;border-radius:5px" width="30" height="30" viewBox="0 0 30 30"><defs><clipPath id="pc2"><rect width="30" height="30" rx="5"/></clipPath></defs><g clip-path="url(#pc2)"><rect width="30" height="30" fill="#d9d9d9"/><rect x="18" width="12" height="30" fill="#e4e4e4"/><ellipse cx="11.5" cy="9.5" rx="4.3" ry="6" fill="#d4b2a0"/><path d="M7 8 C6.8 2.5 9.5 1.2 12 1.2 C15 1.2 16.5 3 16.3 8 C15 5.5 13.5 4.8 11.5 4.8 C9.5 4.8 8 5.5 7 8 Z" fill="#8c8c8c"/><path d="M7.4 8.6 H11 V10.6 H7.6 Z M12.3 8.6 H16 L15.8 10.6 H12.3 Z" fill="none" stroke="#333" stroke-width="0.9"/><path d="M2 30 C3 21 7 17 11.5 16 C17 16.5 24 19 28 24 L29 30 Z" fill="#fafafa"/><path d="M21 24 L27 22 L28.5 27" fill="none" stroke="#e0d0c8" stroke-width="1.2"/></g></svg>
<div class="t" style="left:313px;top:551.26px;font-size:18px;line-height:18px;"><span style="color:#000">Упрощенный И.И.</span></div>
<div class="t" style="left:519.99px;top:551.26px;font-size:18px;line-height:18px;"><span style="color:#8b98ad">1</span></div>
<div class="a" style="left:551px;top:15px;width:373px;height:30px;background:#fff;border:1px solid #e0e3e8;border-radius:15px"></div>
<div class="t" style="left:565px;top:20.76px;font-size:18px;line-height:18px;"><span style="color:#b3bccb">Найти</span></div>
<svg class="a" style="left:893px;top:18px;" width="24" height="24" viewBox="0 0 24 24"><circle cx="12.5" cy="9" r="6.3" fill="none" stroke="#4b5877" stroke-width="1.8"/><path d="M8 13.5 L3.5 18" stroke="#4b5877" stroke-width="2.6" stroke-linecap="round"/></svg>
<div class="t" style="left:575.4px;top:69.76px;font-size:18px;line-height:18px;letter-spacing:0.113px;"><span style="color:#313e78">Подписать</span></div>
<div class="a" style="left:575.4px;top:85.6px;width:90px;height:1.1px;background:#313e78"></div>
<svg class="a" style="left:672px;top:67.5px;" width="17" height="21" viewBox="0 0 17 21"><circle cx="8.5" cy="7.5" r="6.6" fill="none" stroke="#5d6785" stroke-width="1.6" stroke-dasharray="1.9 1.56"/><circle cx="8.5" cy="7.5" r="5.5" fill="none" stroke="#5d6785" stroke-width="2"/><circle cx="8.5" cy="7.5" r="2.5" fill="#5d6785"/><path d="M4.6 11.8 L2.3 19.6 L5.2 17.8 L6.6 20.8 L8.5 14.5 L10.4 20.8 L11.8 17.8 L14.7 19.6 L12.4 11.8 Z" fill="#5d6785"/><path d="M7 14.2 L8.5 19 L10 14.2 Z" fill="#f7f7f7"/></svg>
<div class="a" style="left:550px;top:99px;width:420px;height:1173px;background:#fff;border-radius:12px 0 0 0;box-shadow:0 0 7px rgba(0,0,0,0.055)"></div>
<div class="t" style="left:599.79px;top:116.76px;font-size:18px;line-height:18px;"><span style="color:#000">1 ноя</span></div>
<div class="t" style="left:606.96px;top:142.3px;font-size:15px;line-height:15px;"><span style="color:#999999">12:22</span></div>
<div class="t" style="left:665.5px;top:115.92px;font-size:19px;line-height:19px;"><span style="font-weight:700;color:#2a3a72">Кадр</span></div>
<div class="t" style="left:665.5px;top:142.51px;font-size:18.3px;line-height:18.3px;"><span style="color:#959595">Акт 01.11.24 № 76 = 500.00 в т.ч. НДС 0.00</span></div>
<div class="t" style="left:665.5px;top:167.51px;font-size:18.3px;line-height:18.3px;"><span style="color:#959595">Фактура 01.11.24 № 76 = 500.00 в т.ч. НДС 0.00</span></div>
<div class="a" style="left:550px;top:192.2px;width:408px;height:1px;background:#ededed"></div>
<div class="t" style="left:606.96px;top:206.6px;font-size:15px;line-height:15px;"><span style="color:#999999">12:21</span></div>
<div class="t" style="left:665.5px;top:202.12px;font-size:19px;line-height:19px;"><span style="font-weight:700;color:#2a3a72">Кадр</span></div>
<div class="t" style="left:665.5px;top:229.11px;font-size:18.3px;line-height:18.3px;"><span style="color:#959595">Накладная 01.11.24 № 77 = 33 935.00 в т.ч. НДС 5 655.84</span></div>
<div class="t" style="left:665.5px;top:254.41px;font-size:18.3px;line-height:18.3px;"><span style="color:#959595">Фактура 01.11.24 № 77 = 33 935.00 в т.ч. НДС 5 655.84</span></div>
<div class="a" style="left:550px;top:197px;width:5px;height:29.5px;background:#cc4311;border-radius:0 3px 3px 0"></div>
<div class="a" style="left:550px;top:279.5px;width:408px;height:1px;background:#ededed"></div>
<div class="t" style="left:606.96px;top:292.5px;font-size:15px;line-height:15px;"><span style="color:#999999">12:19</span></div>
<div class="t" style="left:665.5px;top:289.12px;font-size:19px;line-height:19px;"><span style="font-weight:700;color:#2a3a72">Кадр</span></div>
<div class="t" style="left:665.5px;top:315.81px;font-size:18.3px;line-height:18.3px;"><span style="color:#959595">Накладная 01.11.24 № 75 = 7 912.00 в т.ч. НДС 1 318.67</span></div>
<div class="t" style="left:665.5px;top:340.01px;font-size:18.3px;line-height:18.3px;"><span style="color:#959595">Фактура 01.11.24 № 75 = 7 912.00 в т.ч. НДС 1 318.67</span></div>
<div class="a" style="left:550px;top:366.3px;width:408px;height:1px;background:#ededed"></div>
<div class="t" style="left:606.96px;top:379.8px;font-size:15px;line-height:15px;"><span style="color:#999999">12:17</span></div>
<div class="t" style="left:665.5px;top:376.42px;font-size:19px;line-height:19px;"><span style="font-weight:700;color:#2a3a72">Кадр</span></div>
<div class="t" style="left:665.5px;top:402.51px;font-size:18.3px;line-height:18.3px;"><span style="color:#959595">Накладная 01.11.24 № 74 = 6 085.00 в т.ч. НДС 1 014.17</span></div>
<div class="t" style="left:665.5px;top:427.31px;font-size:18.3px;line-height:18.3px;"><span style="color:#959595">Фактура 01.11.24 № 74 = 6 085.00 в т.ч. НДС 1 014.17</span></div>
<svg class="a" style="left:665px;top:452px;" width="16" height="14" viewBox="0 0 16 14"><path d="M4.5 10.5 C1.2 9 0.8 4.5 3.8 2.5 C6.8 0.6 12.5 0.8 14.3 4 C15.8 7 13 10.5 8 10.3 L3.2 12.8 Z" fill="none" stroke="#c4161c" stroke-width="1.3" stroke-linejoin="round"/></svg>
<div class="t" style="left:685.4px;top:452.3px;font-size:15px;line-height:15px;letter-spacing:-0.366px;"><span style="font-style:italic;color:#c4161c">Отменили поставку</span></div>
<div class="a" style="left:550px;top:474.3px;width:408px;height:1px;background:#ededed"></div>
<div class="t" style="left:606.96px;top:487.7px;font-size:15px;line-height:15px;"><span style="color:#999999">12:09</span></div>
<div class="t" style="left:665.5px;top:484.32px;font-size:19px;line-height:19px;"><span style="font-weight:700;color:#2a3a72">Кадр</span></div>
<div class="t" style="left:665.5px;top:510.81px;font-size:18.3px;line-height:18.3px;"><span style="color:#d4d4d4">Накладная 01.11.24 № 73 = 359 830.00 в т.ч. НДС</span></div>
<div class="t" style="left:665.5px;top:536.01px;font-size:18.3px;line-height:18.3px;"><span style="color:#d4d4d4">Фактура 01.11.24 № 73 = 359 830.00 в т.ч. НДС</span></div>
<svg class="a" style="left:665px;top:559px;" width="16" height="14" viewBox="0 0 16 14"><path d="M4.5 10.5 C1.2 9 0.8 4.5 3.8 2.5 C6.8 0.6 12.5 0.8 14.3 4 C15.8 7 13 10.5 8 10.3 L3.2 12.8 Z" fill="none" stroke="#cfcfcf" stroke-width="1.3" stroke-linejoin="round"/></svg>
<div class="t" style="left:685.4px;top:559.3px;font-size:15px;line-height:15px;letter-spacing:0.248px;"><span style="font-style:italic;color:#8a8a8a">Аннулировано</span></div>
<div class="a" style="left:550px;top:582px;width:408px;height:1px;background:#ededed"></div>
<div class="t" style="left:603.16px;top:593.16px;font-size:18px;line-height:18px;"><span style="color:#000">9 окт</span></div>
<div class="t" style="left:606.96px;top:618.9px;font-size:15px;line-height:15px;"><span style="color:#999999">18:58</span></div>
<div class="t" style="left:665.5px;top:592.32px;font-size:19px;line-height:19px;"><span style="font-weight:700;color:#2a3a72">Кадр</span></div>
<div class="t" style="left:665.5px;top:618.81px;font-size:18.3px;line-height:18.3px;"><span style="color:#959595">Акт 09.10.24 № 70 = 500.00 в т.ч. НДС 0.00</span></div>
<div class="t" style="left:665.5px;top:643.51px;font-size:18.3px;line-height:18.3px;"><span style="color:#959595">Фактура 09.10.24 № 70 = 500.00 в т.ч. НДС 0.00</span></div>
<div class="a" style="left:550px;top:669.3px;width:408px;height:1px;background:#ededed"></div>
<div class="t" style="left:606.96px;top:682.5px;font-size:15px;line-height:15px;"><span style="color:#999999">18:57</span></div>
<div class="t" style="left:665.5px;top:679.12px;font-size:19px;line-height:19px;"><span style="font-weight:700;color:#2a3a72">Кадр</span></div>
<div class="t" style="left:665.5px;top:705.91px;font-size:18.3px;line-height:18.3px;"><span style="color:#959595">Накладная 09.10.24 № 69 = 73 750.00 в т.ч. НДС</span></div>
<div class="t" style="left:665.5px;top:730.81px;font-size:18.3px;line-height:18.3px;"><span style="color:#959595">Фактура 09.10.24 № 69 = 73 750.00 в т.ч. НДС</span></div>
<div class="a" style="left:550px;top:756px;width:408px;height:1px;background:#ededed"></div>
<div class="t" style="left:606.96px;top:769.9px;font-size:15px;line-height:15px;"><span style="color:#999999">18:55</span></div>
<div class="t" style="left:665.5px;top:766.52px;font-size:19px;line-height:19px;"><span style="font-weight:700;color:#2a3a72">Кадр</span></div>
<div class="t" style="left:665.5px;top:793.21px;font-size:18.3px;line-height:18.3px;"><span style="color:#959595">Накладная 09.10.24 № 68 = 24 355.00 в т.ч. НДС</span></div>
<div class="t" style="left:665.5px;top:818.11px;font-size:18.3px;line-height:18.3px;"><span style="color:#959595">Фактура 09.10.24 № 68 = 24 355.00 в т.ч. НДС</span></div>
<div class="a" style="left:550px;top:843px;width:408px;height:1px;background:#ededed"></div>
<div class="t" style="left:606.96px;top:856.7px;font-size:15px;line-height:15px;"><span style="color:#999999">18:53</span></div>
<div class="t" style="left:665.5px;top:853.32px;font-size:19px;line-height:19px;"><span style="font-weight:700;color:#2a3a72">Кадр</span></div>
<div class="t" style="left:665.5px;top:879.51px;font-size:18.3px;line-height:18.3px;"><span style="color:#959595">Накладная 09.10.24 № 67 = 85 597.00 в т.ч. НДС</span></div>
<div class="t" style="left:665.5px;top:905.41px;font-size:18.3px;line-height:18.3px;"><span style="color:#959595">Фактура 09.10.24 № 67 = 85 597.00 в т.ч. НДС</span></div>
<svg class="a" style="left:665px;top:929.4px;" width="16" height="14" viewBox="0 0 16 14"><path d="M4.5 10.5 C1.2 9 0.8 4.5 3.8 2.5 C6.8 0.6 12.5 0.8 14.3 4 C15.8 7 13 10.5 8 10.3 L3.2 12.8 Z" fill="none" stroke="#c4161c" stroke-width="1.3" stroke-linejoin="round"/></svg>
<div class="t" style="left:685.4px;top:929.7px;font-size:15px;line-height:15px;letter-spacing:-0.366px;"><span style="font-style:italic;color:#c4161c">Отменили поставку</span></div>
<div class="a" style="left:550px;top:951.2px;width:408px;height:1px;background:#ededed"></div>
<div class="t" style="left:606.96px;top:964.8px;font-size:15px;line-height:15px;"><span style="color:#999999">18:51</span></div>
<div class="t" style="left:665.5px;top:961.42px;font-size:19px;line-height:19px;"><span style="font-weight:700;color:#2a3a72">Кадр</span></div>
<div class="t" style="left:665.5px;top:987.91px;font-size:18.3px;line-height:18.3px;"><span style="color:#d4d4d4">Накладная 09.10.24 № 66 = 210 941.00 в т.ч. НДС</span></div>
<div class="t" style="left:665.5px;top:1012.71px;font-size:18.3px;line-height:18.3px;"><span style="color:#d4d4d4">Фактура 09.10.24 № 66 = 210 941.00 в т.ч. НДС</span></div>
<svg class="a" style="left:665px;top:1036.2px;" width="16" height="14" viewBox="0 0 16 14"><path d="M4.5 10.5 C1.2 9 0.8 4.5 3.8 2.5 C6.8 0.6 12.5 0.8 14.3 4 C15.8 7 13 10.5 8 10.3 L3.2 12.8 Z" fill="none" stroke="#cfcfcf" stroke-width="1.3" stroke-linejoin="round"/></svg>
<div class="t" style="left:685.4px;top:1036.5px;font-size:15px;line-height:15px;letter-spacing:-0.122px;"><span style="font-style:italic;color:#8a8a8a">Прошу аннулировать</span></div>
<div class="a" style="left:550px;top:1059.4px;width:408px;height:1px;background:#ededed"></div>
<div class="t" style="left:590.53px;top:1070.46px;font-size:18px;line-height:18px;"><span style="color:#000">30 сен</span></div>
<div class="t" style="left:606.96px;top:1096.3px;font-size:15px;line-height:15px;"><span style="color:#999999">12:01</span></div>
<div class="t" style="left:665.5px;top:1069.62px;font-size:19px;line-height:19px;"><span style="font-weight:700;color:#2a3a72">Кадр</span></div>
<div class="t" style="left:665.5px;top:1094.51px;font-size:18.3px;line-height:18.3px;"><span style="color:#000">Прошу подготовить и прислать акт сверки</span></div>
<svg class="a" style="left:574.5px;top:1098.3px;" width="16" height="11" viewBox="0 0 16 11"><path d="M1 5.5 C4 0.8 12 0.8 15 5.5 C12 10.2 4 10.2 1 5.5Z" fill="none" stroke="#5d6785" stroke-width="2"/><circle cx="8" cy="5.5" r="2.2" fill="#5d6785"/></svg>
<div class="a" style="left:550px;top:1121.4px;width:408px;height:1px;background:#ededed"></div>
<div class="t" style="left:590.53px;top:1132.76px;font-size:18px;line-height:18px;"><span style="color:#000">16 сен</span></div>
<div class="t" style="left:606.96px;top:1157.8px;font-size:15px;line-height:15px;"><span style="color:#999999">10:28</span></div>
<div class="t" style="left:665.5px;top:1131.92px;font-size:19px;line-height:19px;letter-spacing:-0.269px;"><span style="font-weight:700;color:#2a3a72">Упрощенный Иван Иванович</span><span style="color:#000"> Упрощенный И.И.</span></div>
<div class="t" style="left:665.5px;top:1156.11px;font-size:18.3px;line-height:18.3px;"><span style="color:#000">Подача ТС: г. Москва, ул. Мира, д. 1</span></div>
<div class="t" style="left:665.5px;top:1183.31px;font-size:18.3px;line-height:18.3px;"><span style="color:#959595">Заказ на перевозку № 5 от 07.08.2024</span></div>
<div class="a" style="left:550px;top:1208px;width:408px;height:1px;background:#ededed"></div>
<div class="t" style="left:606.96px;top:1222.3px;font-size:15px;line-height:15px;"><span style="color:#999999">10:25</span></div>
<div class="t" style="left:665.5px;top:1218.32px;font-size:19px;line-height:19px;letter-spacing:-0.269px;"><span style="font-weight:700;color:#2a3a72">Упрощенный Иван Иванович</span><span style="color:#000"> Упрощенный И.И.</span></div>
<div class="t" style="left:665.5px;top:1243.01px;font-size:18.3px;line-height:18.3px;"><span style="color:#000">Подача ТС: г. Санкт-Петербург, ул. Невская</span></div>
<div class="a" style="left:905px;top:0px;width:53px;height:1272px;background:linear-gradient(to right,rgba(0,0,0,0) 0%,rgba(0,0,0,0.018) 45%,rgba(0,0,0,0.075) 100%)"></div>
<div class="a" style="left:550px;top:1263px;width:408px;height:9px;background:linear-gradient(to bottom,rgba(0,0,0,0.02),rgba(0,0,0,0.07))"></div>
<div class="a" style="left:958px;top:0px;width:1125px;height:1272px;background:#ffffff"></div>
<div class="a" style="left:958px;top:0px;width:1125px;height:99px;background:#f7f7f7"></div>
<div class="t" style="left:1259.7px;top:20.76px;font-size:18px;line-height:18px;letter-spacing:-0.674px;"><span style="color:#9aa3b5">ОСНОва</span></div>
<div class="a" style="left:1345.3px;top:14.2px;width:149.6px;height:31.4px;background:#fff;border:1px solid #a9c8f0;border-radius:16px"></div>
<div class="t" style="left:1361.2px;top:20.64px;font-size:18.5px;line-height:18.5px;letter-spacing:-0.207px;"><span style="color:#000">Изменить</span></div>
<svg class="a" style="left:1458px;top:19px;" width="22" height="22" viewBox="0 0 22 22"><path d="M2.5 15.5 L14.2 3.8 A1.5 1.5 0 0 1 16.3 3.8 L18.7 6.2 A1.5 1.5 0 0 1 18.7 8.3 L7 20 L2 20.8 Z" fill="#c6c6c6"/><path d="M3.3 17 L5.6 19.3" stroke="#fff" stroke-width="1"/><path d="M6.5 20.6 H20.5" stroke="#c8c8c8" stroke-width="1.3"/></svg>
<div class="a" style="left:1510.4px;top:14.2px;width:61.8px;height:31.4px;background:#fff;border:1px solid #e6e6e6;border-radius:16px"></div>
<div class="t" style="left:1526.8px;top:20.64px;font-size:18.5px;line-height:18.5px;letter-spacing:-0.356px;"><span style="color:#000">Чек</span></div>
<div class="a" style="left:1588px;top:14.2px;width:112.8px;height:31.4px;background:#fff;border:1px solid #a9c8f0;border-radius:16px"></div>
<div class="t" style="left:1604.3px;top:20.64px;font-size:18.5px;line-height:18.5px;letter-spacing:-0.286px;"><span style="color:#000">Оплатить</span></div>
<div class="a" style="left:1716px;top:14.2px;width:112.7px;height:31.4px;background:#fff;border:1px solid #a9c8f0;border-radius:16px"></div>
<div class="t" style="left:1732.5px;top:20.64px;font-size:18.5px;line-height:18.5px;letter-spacing:-0.263px;"><span style="color:#000">Провести</span></div>
<div class="a" style="left:1843.8px;top:15px;width:223.8px;height:29.8px;background:#fff;border:1px solid #a9c8f0;border-radius:15px"></div>
<div class="a" style="left:1843.8px;top:15px;width:121.2px;height:29.8px;background:#f5733e;border-radius:15px;box-shadow:0 0 2px rgba(0,0,0,0.08)"></div>
<div class="t" style="left:1860.5px;top:20.64px;font-size:18.5px;line-height:18.5px;letter-spacing:-0.155px;"><span style="color:#ffffff">Утвердить</span></div>
<div class="t" style="left:1981px;top:20.64px;font-size:18.5px;line-height:18.5px;letter-spacing:-0.004px;"><span style="color:#000">Нет</span></div>
<div class="a" style="left:2033.8px;top:28.3px;width:3.4px;height:3.4px;background:#333;border-radius:50%"></div>
<div class="a" style="left:2040.1px;top:28.3px;width:3.4px;height:3.4px;background:#333;border-radius:50%"></div>
<div class="a" style="left:2046.4px;top:28.3px;width:3.4px;height:3.4px;background:#333;border-radius:50%"></div>
<div class="t" style="left:978px;top:64.34px;font-size:25px;line-height:25px;letter-spacing:-0.051px;"><span style="font-weight:700;color:#000">Поступление</span></div>
<div class="t" style="left:1150.7px;top:69.42px;font-size:19px;line-height:19px;letter-spacing:0.307px;"><span style="color:#000">01.11.24</span></div>
<div class="t" style="left:1235.8px;top:69.42px;font-size:19px;line-height:19px;letter-spacing:0.635px;"><span style="color:#9a9a9a">№ 77</span></div>
<div class="t" style="left:1880px;top:69.22px;font-size:19px;line-height:19px;letter-spacing:-0.041px;"><span style="font-weight:700;color:#c9460f">Документы</span></div>
<div class="t" style="left:1995px;top:69.22px;font-size:19px;line-height:19px;"><span style="color:#000">2</span></div>
<div class="a" style="left:1880px;top:95px;width:128px;height:4px;background:#c9460f;border-radius:2px"></div>
<svg class="a" style="left:2037px;top:61px;" width="32" height="28" viewBox="0 0 32 28"><path d="M8 4 H27 A2.5 2.5 0 0 1 27 9 H24 V22" fill="none" stroke="#505c7c" stroke-width="1.2"/><path d="M8 4 A2.5 2.5 0 0 0 5.5 6.5 V21 H3.5 A2.7 2.7 0 0 0 6 25 H22 A2.3 2.3 0 0 0 24 22" fill="none" stroke="#505c7c" stroke-width="1.2"/><path d="M3.5 21 H20 A2.5 2.5 0 0 1 22 25" fill="none" stroke="#505c7c" stroke-width="1.2"/><path d="M10 13 L13 16 L19 9.5" fill="none" stroke="#505c7c" stroke-width="1.3"/></svg>
<div class="t" style="left:1627.6px;top:108.76px;font-size:16px;line-height:16px;letter-spacing:-0.359px;"><span style="color:#e8a03c">Изменение цен</span></div>
<div class="t" style="left:1753px;top:108.76px;font-size:16px;line-height:16px;letter-spacing:-0.431px;"><span style="color:#9c9c9c">Не оплачено</span></div>
<div class="t" style="left:1887px;top:108.76px;font-size:16px;line-height:16px;letter-spacing:0.093px;"><span style="color:#313e78">Укажите ответственного</span></div>
<div class="t" style="left:978px;top:129.88px;font-size:15.5px;line-height:15.5px;letter-spacing:0.158px;"><span style="color:#9a9a9a">Поставщик </span><span style="color:#b9c0cd">60-01, 60-02</span></div>
<div class="t" style="left:978px;top:153.67px;font-size:20px;line-height:20px;letter-spacing:-0.159px;"><span style="font-weight:700;color:#2a3a72">Кадр, ООО</span></div>
<div class="a" style="left:978px;top:179px;width:704px;height:1px;background:#d9d9d9"></div>
<div class="a" style="left:1624px;top:185.3px;width:3.2px;height:5.8px;border:1px solid #d0d0d0"></div>
<div class="a" style="left:1628px;top:185.3px;width:3.2px;height:5.8px;border:1px solid #d0d0d0"></div>
<div class="a" style="left:1632px;top:185.3px;width:3.2px;height:5.8px;border:1px solid #d0d0d0"></div>
<div class="a" style="left:1664.7px;top:185.3px;width:3.2px;height:5.8px;border:1px solid #d0d0d0"></div>
<div class="a" style="left:1668.5px;top:185.3px;width:3.2px;height:5.8px;border:1px solid #d0d0d0"></div>
<div class="a" style="left:1673.6px;top:185.3px;width:3.2px;height:5.8px;border:1px solid #d0d0d0"></div>
<div class="a" style="left:1677.4px;top:185.3px;width:3.2px;height:5.8px;border:1px solid #d0d0d0"></div>
<div class="a" style="left:1636.6px;top:185.3px;width:3.8px;height:5.8px;background:#1e9a36"></div>
<div class="a" style="left:1641.3px;top:185.3px;width:3.8px;height:5.8px;background:#1e9a36"></div>
<div class="a" style="left:1646px;top:185.3px;width:3.8px;height:5.8px;background:#1e9a36"></div>
<div class="a" style="left:1651.3px;top:184.3px;width:1px;height:7.8px;background:#bdbdbd"></div>
<div class="a" style="left:1654.3px;top:185.3px;width:3.2px;height:5.8px;background:#d41a1a"></div>
<div class="a" style="left:1658.6px;top:185.3px;width:3.2px;height:5.8px;background:#d41a1a"></div>
<svg class="a" style="left:978px;top:205px;" width="18" height="22" viewBox="0 0 18 22"><path d="M5 6.5 A4.45 4.45 0 0 1 13.9 6.5 V15.8 A4.45 4.45 0 0 1 5 15.8 Z" fill="none" stroke="#9ba6ba" stroke-width="1.5"/><path d="M8.7 15.6 V6.5 A1.75 1.75 0 0 1 12.2 6.5 V14" fill="none" stroke="#9ba6ba" stroke-width="1.4"/></svg>
<div class="t" style="left:1003px;top:206.36px;font-size:18px;line-height:18px;letter-spacing:0.041px;"><span style="color:#8a95ab">Добавить </span><span style="color:#ababab">(2)</span></div>
<svg class="a" style="left:1120px;top:205px;" width="23" height="23" viewBox="0 0 23 23"><rect x="9.3" y="2.3" width="11.8" height="11.8" rx="2" fill="none" stroke="#5e6a88" stroke-width="1.5"/><path d="M14.5 8.5 L16.3 10.2 L19.2 6.8" fill="none" stroke="#5e6a88" stroke-width="1.3"/><rect x="1" y="10.2" width="11.7" height="11.8" rx="2" fill="#fff" stroke="#5e6a88" stroke-width="1.5"/><path d="M3.8 16.2 L6.2 18.5 L10.2 14.3" fill="none" stroke="#5e6a88" stroke-width="1.5"/></svg>
<svg class="a" style="left:2049px;top:210px;" width="18" height="16" viewBox="0 0 18 16"><path d="M1 2 H16 M1 7.5 H16 M1 13 H16" stroke="#6b7899" stroke-width="2.4"/></svg>
<svg class="a" style="left:978.5px;top:251.5px;" width="18" height="21" viewBox="0 0 18 21"><path d="M1.8 5 L5.8 0.8 H15.6 V19.8 H1.8 Z" fill="#fff" stroke="#cdcdcd" stroke-width="1.1"/><path d="M1.8 5 H5.8 V0.8" fill="none" stroke="#cdcdcd" stroke-width="1"/><rect x="-0.5" y="9.3" width="18.5" height="6" fill="#fff"/><text x="8.7" y="14.6" font-size="7.6" text-anchor="middle" fill="#c2c2c2" font-family="Liberation Sans" font-weight="700">xml</text></svg>
<div class="t" style="left:1003px;top:253.04px;font-size:18.5px;line-height:18.5px;letter-spacing:-0.263px;"><span style="color:#000">Накладная 01.11.24 № 77 = 33 935.00 в т.ч. НДС 5 655.84</span></div>
<svg class="a" style="left:1488px;top:251.5px;" width="17" height="21" viewBox="0 0 17 21"><circle cx="8.5" cy="7.5" r="6.6" fill="none" stroke="#f07b45" stroke-width="1.6" stroke-dasharray="1.9 1.56"/><circle cx="8.5" cy="7.5" r="5.5" fill="none" stroke="#f07b45" stroke-width="2"/><circle cx="8.5" cy="7.5" r="2.5" fill="#f07b45"/><path d="M4.6 11.8 L2.3 19.6 L5.2 17.8 L6.6 20.8 L8.5 14.5 L10.4 20.8 L11.8 17.8 L14.7 19.6 L12.4 11.8 Z" fill="#f07b45"/><path d="M7 14.2 L8.5 19 L10 14.2 Z" fill="#fff"/></svg>
<div class="a" style="left:958px;top:252px;width:3.2px;height:19.5px;background:#cc4311"></div>
<svg class="a" style="left:978.5px;top:291.5px;" width="18" height="21" viewBox="0 0 18 21"><path d="M1.8 5 L5.8 0.8 H15.6 V19.8 H1.8 Z" fill="#fff" stroke="#cdcdcd" stroke-width="1.1"/><path d="M1.8 5 H5.8 V0.8" fill="none" stroke="#cdcdcd" stroke-width="1"/><rect x="-0.5" y="9.3" width="18.5" height="6" fill="#fff"/><text x="8.7" y="14.6" font-size="7.6" text-anchor="middle" fill="#c2c2c2" font-family="Liberation Sans" font-weight="700">xml</text></svg>
<div class="t" style="left:1003px;top:292.54px;font-size:18.5px;line-height:18.5px;letter-spacing:-0.208px;"><span style="color:#000">Фактура 01.11.24 № 77 = 33 935.00 в т.ч. НДС 5 655.84</span></div>
<svg class="a" style="left:1467.5px;top:291.5px;" width="17" height="21" viewBox="0 0 17 21"><circle cx="8.5" cy="7.5" r="6.6" fill="none" stroke="#f07b45" stroke-width="1.6" stroke-dasharray="1.9 1.56"/><circle cx="8.5" cy="7.5" r="5.5" fill="none" stroke="#f07b45" stroke-width="2"/><circle cx="8.5" cy="7.5" r="2.5" fill="#f07b45"/><path d="M4.6 11.8 L2.3 19.6 L5.2 17.8 L6.6 20.8 L8.5 14.5 L10.4 20.8 L11.8 17.8 L14.7 19.6 L12.4 11.8 Z" fill="#f07b45"/><path d="M7 14.2 L8.5 19 L10 14.2 Z" fill="#fff"/></svg>
<div class="a" style="left:958px;top:325px;width:1125px;height:947px;background:#f7f7f7"></div>
<svg class="a" style="left:981.5px;top:337px;" width="17" height="21" viewBox="0 0 17 21"><circle cx="8.5" cy="7.5" r="6.6" fill="none" stroke="#f07b45" stroke-width="1.6" stroke-dasharray="1.9 1.56"/><circle cx="8.5" cy="7.5" r="5.5" fill="none" stroke="#f07b45" stroke-width="2"/><circle cx="8.5" cy="7.5" r="2.5" fill="#f07b45"/><path d="M4.6 11.8 L2.3 19.6 L5.2 17.8 L6.6 20.8 L8.5 14.5 L10.4 20.8 L11.8 17.8 L14.7 19.6 L12.4 11.8 Z" fill="#f07b45"/><path d="M7 14.2 L8.5 19 L10 14.2 Z" fill="#fff"/></svg>
<div class="t" style="left:1008px;top:339.81px;font-size:17px;line-height:17px;letter-spacing:-0.182px;"><span style="color:#2a3a72">Евграфова Е.Е.</span></div>
<svg class="a" style="left:1957px;top:334px;" width="26" height="26" viewBox="0 0 26 26"><path d="M1.9 9.8 V3.8 A2.5 2.5 0 0 1 4.4 1.3 H10.7 M15.5 1.3 H21.8 A2.5 2.5 0 0 1 24.3 3.8 V9.8 M24.3 15.2 V21.2 A2.5 2.5 0 0 1 21.8 23.7 H15.5 M10.7 23.7 H4.4 A2.5 2.5 0 0 1 1.9 21.2 V15.2" fill="none" stroke="#76829c" stroke-width="1.4"/></svg>
<svg class="a" style="left:2001px;top:333px;" width="28" height="27" viewBox="0 0 28 27"><path d="M1.5 3.5 A2.5 2.5 0 0 1 4 1 H20.5 L26.5 7 V23.5 A2.5 2.5 0 0 1 24 26 H4 A2.5 2.5 0 0 1 1.5 23.5 Z" fill="#7b87a3"/><rect x="6.7" y="2" width="14" height="8.7" fill="#f7f7f7"/><rect x="15" y="2.9" width="3" height="6.8" fill="#7b87a3"/><rect x="3.7" y="13.7" width="20.5" height="9.4" fill="#f7f7f7"/></svg>
<div class="a" style="left:2050.1px;top:335.3px;width:5px;height:5px;background:#5a6585;border-radius:50%"></div>
<div class="a" style="left:2050.1px;top:344.1px;width:5px;height:5px;background:#5a6585;border-radius:50%"></div>
<div class="a" style="left:2050.1px;top:352.9px;width:5px;height:5px;background:#5a6585;border-radius:50%"></div>
<div class="a" style="left:967.5px;top:370px;width:1105.5px;height:902px;background:#fff;border-radius:10px 10px 0 0"></div>
<div class="t" style="left:1485.8px;top:382.02px;font-size:12.5px;line-height:12.5px;transform:scaleX(0.8948);transform-origin:0 0;"><span style="color:#b0b0b0">Унифицированная форма № ТОРГ-12 Утверждена постановлением Госкомстата России от 25.12.98 г. № 132</span></div>
<svg class="a" style="left:989px;top:411px;shape-rendering:crispEdges" width="128" height="128" viewBox="0 0 128 128"><rect width="128" height="128" fill="#fff"/><path d="M0.00 0.00h2.63v2.63h-2.63zM2.61 0.00h2.63v2.63h-2.63zM5.22 0.00h2.63v2.63h-2.63zM7.84 0.00h2.63v2.63h-2.63zM10.45 0.00h2.63v2.63h-2.63zM13.06 0.00h2.63v2.63h-2.63zM15.67 0.00h2.63v2.63h-2.63zM20.90 0.00h2.63v2.63h-2.63zM23.51 0.00h2.63v2.63h-2.63zM26.12 0.00h2.63v2.63h-2.63zM28.73 0.00h2.63v2.63h-2.63zM31.35 0.00h2.63v2.63h-2.63zM36.57 0.00h2.63v2.63h-2.63zM39.18 0.00h2.63v2.63h-2.63zM49.63 0.00h2.63v2.63h-2.63zM54.86 0.00h2.63v2.63h-2.63zM60.08 0.00h2.63v2.63h-2.63zM62.69 0.00h2.63v2.63h-2.63zM65.31 0.00h2.63v2.63h-2.63zM67.92 0.00h2.63v2.63h-2.63zM73.14 0.00h2.63v2.63h-2.63zM80.98 0.00h2.63v2.63h-2.63zM86.20 0.00h2.63v2.63h-2.63zM88.82 0.00h2.63v2.63h-2.63zM91.43 0.00h2.63v2.63h-2.63zM96.65 0.00h2.63v2.63h-2.63zM99.27 0.00h2.63v2.63h-2.63zM104.49 0.00h2.63v2.63h-2.63zM109.71 0.00h2.63v2.63h-2.63zM112.33 0.00h2.63v2.63h-2.63zM114.94 0.00h2.63v2.63h-2.63zM117.55 0.00h2.63v2.63h-2.63zM120.16 0.00h2.63v2.63h-2.63zM122.78 0.00h2.63v2.63h-2.63zM125.39 0.00h2.63v2.63h-2.63zM0.00 2.61h2.63v2.63h-2.63zM15.67 2.61h2.63v2.63h-2.63zM31.35 2.61h2.63v2.63h-2.63zM41.80 2.61h2.63v2.63h-2.63zM49.63 2.61h2.63v2.63h-2.63zM54.86 2.61h2.63v2.63h-2.63zM67.92 2.61h2.63v2.63h-2.63zM70.53 2.61h2.63v2.63h-2.63zM75.76 2.61h2.63v2.63h-2.63zM78.37 2.61h2.63v2.63h-2.63zM80.98 2.61h2.63v2.63h-2.63zM83.59 2.61h2.63v2.63h-2.63zM86.20 2.61h2.63v2.63h-2.63zM91.43 2.61h2.63v2.63h-2.63zM94.04 2.61h2.63v2.63h-2.63zM96.65 2.61h2.63v2.63h-2.63zM101.88 2.61h2.63v2.63h-2.63zM104.49 2.61h2.63v2.63h-2.63zM109.71 2.61h2.63v2.63h-2.63zM125.39 2.61h2.63v2.63h-2.63zM0.00 5.22h2.63v2.63h-2.63zM5.22 5.22h2.63v2.63h-2.63zM7.84 5.22h2.63v2.63h-2.63zM10.45 5.22h2.63v2.63h-2.63zM15.67 5.22h2.63v2.63h-2.63zM20.90 5.22h2.63v2.63h-2.63zM23.51 5.22h2.63v2.63h-2.63zM26.12 5.22h2.63v2.63h-2.63zM36.57 5.22h2.63v2.63h-2.63zM44.41 5.22h2.63v2.63h-2.63zM57.47 5.22h2.63v2.63h-2.63zM60.08 5.22h2.63v2.63h-2.63zM62.69 5.22h2.63v2.63h-2.63zM67.92 5.22h2.63v2.63h-2.63zM70.53 5.22h2.63v2.63h-2.63zM73.14 5.22h2.63v2.63h-2.63zM75.76 5.22h2.63v2.63h-2.63zM78.37 5.22h2.63v2.63h-2.63zM80.98 5.22h2.63v2.63h-2.63zM83.59 5.22h2.63v2.63h-2.63zM86.20 5.22h2.63v2.63h-2.63zM88.82 5.22h2.63v2.63h-2.63zM91.43 5.22h2.63v2.63h-2.63zM94.04 5.22h2.63v2.63h-2.63zM101.88 5.22h2.63v2.63h-2.63zM104.49 5.22h2.63v2.63h-2.63zM109.71 5.22h2.63v2.63h-2.63zM114.94 5.22h2.63v2.63h-2.63zM117.55 5.22h2.63v2.63h-2.63zM120.16 5.22h2.63v2.63h-2.63zM125.39 5.22h2.63v2.63h-2.63zM0.00 7.84h2.63v2.63h-2.63zM5.22 7.84h2.63v2.63h-2.63zM7.84 7.84h2.63v2.63h-2.63zM10.45 7.84h2.63v2.63h-2.63zM15.67 7.84h2.63v2.63h-2.63zM20.90 7.84h2.63v2.63h-2.63zM26.12 7.84h2.63v2.63h-2.63zM39.18 7.84h2.63v2.63h-2.63zM41.80 7.84h2.63v2.63h-2.63zM44.41 7.84h2.63v2.63h-2.63zM54.86 7.84h2.63v2.63h-2.63zM57.47 7.84h2.63v2.63h-2.63zM75.76 7.84h2.63v2.63h-2.63zM78.37 7.84h2.63v2.63h-2.63zM80.98 7.84h2.63v2.63h-2.63zM83.59 7.84h2.63v2.63h-2.63zM86.20 7.84h2.63v2.63h-2.63zM88.82 7.84h2.63v2.63h-2.63zM91.43 7.84h2.63v2.63h-2.63zM99.27 7.84h2.63v2.63h-2.63zM109.71 7.84h2.63v2.63h-2.63zM114.94 7.84h2.63v2.63h-2.63zM117.55 7.84h2.63v2.63h-2.63zM120.16 7.84h2.63v2.63h-2.63zM125.39 7.84h2.63v2.63h-2.63zM0.00 10.45h2.63v2.63h-2.63zM5.22 10.45h2.63v2.63h-2.63zM7.84 10.45h2.63v2.63h-2.63zM10.45 10.45h2.63v2.63h-2.63zM15.67 10.45h2.63v2.63h-2.63zM23.51 10.45h2.63v2.63h-2.63zM26.12 10.45h2.63v2.63h-2.63zM31.35 10.45h2.63v2.63h-2.63zM39.18 10.45h2.63v2.63h-2.63zM41.80 10.45h2.63v2.63h-2.63zM49.63 10.45h2.63v2.63h-2.63zM52.24 10.45h2.63v2.63h-2.63zM54.86 10.45h2.63v2.63h-2.63zM57.47 10.45h2.63v2.63h-2.63zM60.08 10.45h2.63v2.63h-2.63zM62.69 10.45h2.63v2.63h-2.63zM65.31 10.45h2.63v2.63h-2.63zM67.92 10.45h2.63v2.63h-2.63zM73.14 10.45h2.63v2.63h-2.63zM78.37 10.45h2.63v2.63h-2.63zM80.98 10.45h2.63v2.63h-2.63zM94.04 10.45h2.63v2.63h-2.63zM101.88 10.45h2.63v2.63h-2.63zM104.49 10.45h2.63v2.63h-2.63zM109.71 10.45h2.63v2.63h-2.63zM114.94 10.45h2.63v2.63h-2.63zM117.55 10.45h2.63v2.63h-2.63zM120.16 10.45h2.63v2.63h-2.63zM125.39 10.45h2.63v2.63h-2.63zM0.00 13.06h2.63v2.63h-2.63zM15.67 13.06h2.63v2.63h-2.63zM20.90 13.06h2.63v2.63h-2.63zM23.51 13.06h2.63v2.63h-2.63zM26.12 13.06h2.63v2.63h-2.63zM28.73 13.06h2.63v2.63h-2.63zM33.96 13.06h2.63v2.63h-2.63zM36.57 13.06h2.63v2.63h-2.63zM44.41 13.06h2.63v2.63h-2.63zM47.02 13.06h2.63v2.63h-2.63zM54.86 13.06h2.63v2.63h-2.63zM57.47 13.06h2.63v2.63h-2.63zM67.92 13.06h2.63v2.63h-2.63zM78.37 13.06h2.63v2.63h-2.63zM83.59 13.06h2.63v2.63h-2.63zM86.20 13.06h2.63v2.63h-2.63zM91.43 13.06h2.63v2.63h-2.63zM96.65 13.06h2.63v2.63h-2.63zM109.71 13.06h2.63v2.63h-2.63zM125.39 13.06h2.63v2.63h-2.63zM0.00 15.67h2.63v2.63h-2.63zM2.61 15.67h2.63v2.63h-2.63zM5.22 15.67h2.63v2.63h-2.63zM7.84 15.67h2.63v2.63h-2.63zM10.45 15.67h2.63v2.63h-2.63zM13.06 15.67h2.63v2.63h-2.63zM15.67 15.67h2.63v2.63h-2.63zM23.51 15.67h2.63v2.63h-2.63zM31.35 15.67h2.63v2.63h-2.63zM36.57 15.67h2.63v2.63h-2.63zM39.18 15.67h2.63v2.63h-2.63zM47.02 15.67h2.63v2.63h-2.63zM49.63 15.67h2.63v2.63h-2.63zM52.24 15.67h2.63v2.63h-2.63zM54.86 15.67h2.63v2.63h-2.63zM57.47 15.67h2.63v2.63h-2.63zM62.69 15.67h2.63v2.63h-2.63zM67.92 15.67h2.63v2.63h-2.63zM70.53 15.67h2.63v2.63h-2.63zM73.14 15.67h2.63v2.63h-2.63zM75.76 15.67h2.63v2.63h-2.63zM80.98 15.67h2.63v2.63h-2.63zM83.59 15.67h2.63v2.63h-2.63zM94.04 15.67h2.63v2.63h-2.63zM96.65 15.67h2.63v2.63h-2.63zM99.27 15.67h2.63v2.63h-2.63zM104.49 15.67h2.63v2.63h-2.63zM109.71 15.67h2.63v2.63h-2.63zM112.33 15.67h2.63v2.63h-2.63zM114.94 15.67h2.63v2.63h-2.63zM117.55 15.67h2.63v2.63h-2.63zM120.16 15.67h2.63v2.63h-2.63zM122.78 15.67h2.63v2.63h-2.63zM125.39 15.67h2.63v2.63h-2.63zM23.51 18.29h2.63v2.63h-2.63zM28.73 18.29h2.63v2.63h-2.63zM33.96 18.29h2.63v2.63h-2.63zM36.57 18.29h2.63v2.63h-2.63zM44.41 18.29h2.63v2.63h-2.63zM47.02 18.29h2.63v2.63h-2.63zM52.24 18.29h2.63v2.63h-2.63zM54.86 18.29h2.63v2.63h-2.63zM57.47 18.29h2.63v2.63h-2.63zM67.92 18.29h2.63v2.63h-2.63zM73.14 18.29h2.63v2.63h-2.63zM75.76 18.29h2.63v2.63h-2.63zM78.37 18.29h2.63v2.63h-2.63zM80.98 18.29h2.63v2.63h-2.63zM83.59 18.29h2.63v2.63h-2.63zM86.20 18.29h2.63v2.63h-2.63zM88.82 18.29h2.63v2.63h-2.63zM96.65 18.29h2.63v2.63h-2.63zM99.27 18.29h2.63v2.63h-2.63zM104.49 18.29h2.63v2.63h-2.63zM0.00 20.90h2.63v2.63h-2.63zM10.45 20.90h2.63v2.63h-2.63zM13.06 20.90h2.63v2.63h-2.63zM15.67 20.90h2.63v2.63h-2.63zM18.29 20.90h2.63v2.63h-2.63zM20.90 20.90h2.63v2.63h-2.63zM26.12 20.90h2.63v2.63h-2.63zM28.73 20.90h2.63v2.63h-2.63zM31.35 20.90h2.63v2.63h-2.63zM41.80 20.90h2.63v2.63h-2.63zM44.41 20.90h2.63v2.63h-2.63zM47.02 20.90h2.63v2.63h-2.63zM49.63 20.90h2.63v2.63h-2.63zM52.24 20.90h2.63v2.63h-2.63zM54.86 20.90h2.63v2.63h-2.63zM57.47 20.90h2.63v2.63h-2.63zM60.08 20.90h2.63v2.63h-2.63zM62.69 20.90h2.63v2.63h-2.63zM65.31 20.90h2.63v2.63h-2.63zM67.92 20.90h2.63v2.63h-2.63zM73.14 20.90h2.63v2.63h-2.63zM75.76 20.90h2.63v2.63h-2.63zM78.37 20.90h2.63v2.63h-2.63zM80.98 20.90h2.63v2.63h-2.63zM83.59 20.90h2.63v2.63h-2.63zM86.20 20.90h2.63v2.63h-2.63zM88.82 20.90h2.63v2.63h-2.63zM91.43 20.90h2.63v2.63h-2.63zM94.04 20.90h2.63v2.63h-2.63zM96.65 20.90h2.63v2.63h-2.63zM99.27 20.90h2.63v2.63h-2.63zM101.88 20.90h2.63v2.63h-2.63zM104.49 20.90h2.63v2.63h-2.63zM107.10 20.90h2.63v2.63h-2.63zM109.71 20.90h2.63v2.63h-2.63zM112.33 20.90h2.63v2.63h-2.63zM2.61 23.51h2.63v2.63h-2.63zM5.22 23.51h2.63v2.63h-2.63zM10.45 23.51h2.63v2.63h-2.63zM18.29 23.51h2.63v2.63h-2.63zM33.96 23.51h2.63v2.63h-2.63zM39.18 23.51h2.63v2.63h-2.63zM60.08 23.51h2.63v2.63h-2.63zM62.69 23.51h2.63v2.63h-2.63zM65.31 23.51h2.63v2.63h-2.63zM67.92 23.51h2.63v2.63h-2.63zM70.53 23.51h2.63v2.63h-2.63zM86.20 23.51h2.63v2.63h-2.63zM88.82 23.51h2.63v2.63h-2.63zM96.65 23.51h2.63v2.63h-2.63zM104.49 23.51h2.63v2.63h-2.63zM109.71 23.51h2.63v2.63h-2.63zM112.33 23.51h2.63v2.63h-2.63zM114.94 23.51h2.63v2.63h-2.63zM120.16 23.51h2.63v2.63h-2.63zM0.00 26.12h2.63v2.63h-2.63zM2.61 26.12h2.63v2.63h-2.63zM5.22 26.12h2.63v2.63h-2.63zM18.29 26.12h2.63v2.63h-2.63zM20.90 26.12h2.63v2.63h-2.63zM23.51 26.12h2.63v2.63h-2.63zM28.73 26.12h2.63v2.63h-2.63zM33.96 26.12h2.63v2.63h-2.63zM36.57 26.12h2.63v2.63h-2.63zM39.18 26.12h2.63v2.63h-2.63zM49.63 26.12h2.63v2.63h-2.63zM52.24 26.12h2.63v2.63h-2.63zM54.86 26.12h2.63v2.63h-2.63zM57.47 26.12h2.63v2.63h-2.63zM60.08 26.12h2.63v2.63h-2.63zM65.31 26.12h2.63v2.63h-2.63zM73.14 26.12h2.63v2.63h-2.63zM75.76 26.12h2.63v2.63h-2.63zM83.59 26.12h2.63v2.63h-2.63zM86.20 26.12h2.63v2.63h-2.63zM88.82 26.12h2.63v2.63h-2.63zM94.04 26.12h2.63v2.63h-2.63zM99.27 26.12h2.63v2.63h-2.63zM107.10 26.12h2.63v2.63h-2.63zM112.33 26.12h2.63v2.63h-2.63zM120.16 26.12h2.63v2.63h-2.63zM125.39 26.12h2.63v2.63h-2.63zM0.00 28.73h2.63v2.63h-2.63zM2.61 28.73h2.63v2.63h-2.63zM5.22 28.73h2.63v2.63h-2.63zM7.84 28.73h2.63v2.63h-2.63zM10.45 28.73h2.63v2.63h-2.63zM13.06 28.73h2.63v2.63h-2.63zM15.67 28.73h2.63v2.63h-2.63zM18.29 28.73h2.63v2.63h-2.63zM23.51 28.73h2.63v2.63h-2.63zM31.35 28.73h2.63v2.63h-2.63zM41.80 28.73h2.63v2.63h-2.63zM44.41 28.73h2.63v2.63h-2.63zM47.02 28.73h2.63v2.63h-2.63zM54.86 28.73h2.63v2.63h-2.63zM57.47 28.73h2.63v2.63h-2.63zM60.08 28.73h2.63v2.63h-2.63zM62.69 28.73h2.63v2.63h-2.63zM65.31 28.73h2.63v2.63h-2.63zM70.53 28.73h2.63v2.63h-2.63zM75.76 28.73h2.63v2.63h-2.63zM78.37 28.73h2.63v2.63h-2.63zM80.98 28.73h2.63v2.63h-2.63zM83.59 28.73h2.63v2.63h-2.63zM86.20 28.73h2.63v2.63h-2.63zM109.71 28.73h2.63v2.63h-2.63zM114.94 28.73h2.63v2.63h-2.63zM122.78 28.73h2.63v2.63h-2.63zM125.39 28.73h2.63v2.63h-2.63zM2.61 31.35h2.63v2.63h-2.63zM5.22 31.35h2.63v2.63h-2.63zM7.84 31.35h2.63v2.63h-2.63zM10.45 31.35h2.63v2.63h-2.63zM18.29 31.35h2.63v2.63h-2.63zM23.51 31.35h2.63v2.63h-2.63zM28.73 31.35h2.63v2.63h-2.63zM31.35 31.35h2.63v2.63h-2.63zM33.96 31.35h2.63v2.63h-2.63zM36.57 31.35h2.63v2.63h-2.63zM41.80 31.35h2.63v2.63h-2.63zM44.41 31.35h2.63v2.63h-2.63zM52.24 31.35h2.63v2.63h-2.63zM54.86 31.35h2.63v2.63h-2.63zM57.47 31.35h2.63v2.63h-2.63zM60.08 31.35h2.63v2.63h-2.63zM62.69 31.35h2.63v2.63h-2.63zM65.31 31.35h2.63v2.63h-2.63zM67.92 31.35h2.63v2.63h-2.63zM70.53 31.35h2.63v2.63h-2.63zM80.98 31.35h2.63v2.63h-2.63zM83.59 31.35h2.63v2.63h-2.63zM88.82 31.35h2.63v2.63h-2.63zM91.43 31.35h2.63v2.63h-2.63zM94.04 31.35h2.63v2.63h-2.63zM96.65 31.35h2.63v2.63h-2.63zM101.88 31.35h2.63v2.63h-2.63zM104.49 31.35h2.63v2.63h-2.63zM112.33 31.35h2.63v2.63h-2.63zM114.94 31.35h2.63v2.63h-2.63zM117.55 31.35h2.63v2.63h-2.63zM120.16 31.35h2.63v2.63h-2.63zM122.78 31.35h2.63v2.63h-2.63zM5.22 33.96h2.63v2.63h-2.63zM7.84 33.96h2.63v2.63h-2.63zM15.67 33.96h2.63v2.63h-2.63zM20.90 33.96h2.63v2.63h-2.63zM23.51 33.96h2.63v2.63h-2.63zM36.57 33.96h2.63v2.63h-2.63zM39.18 33.96h2.63v2.63h-2.63zM41.80 33.96h2.63v2.63h-2.63zM60.08 33.96h2.63v2.63h-2.63zM65.31 33.96h2.63v2.63h-2.63zM70.53 33.96h2.63v2.63h-2.63zM78.37 33.96h2.63v2.63h-2.63zM80.98 33.96h2.63v2.63h-2.63zM83.59 33.96h2.63v2.63h-2.63zM91.43 33.96h2.63v2.63h-2.63zM94.04 33.96h2.63v2.63h-2.63zM101.88 33.96h2.63v2.63h-2.63zM104.49 33.96h2.63v2.63h-2.63zM109.71 33.96h2.63v2.63h-2.63zM112.33 33.96h2.63v2.63h-2.63zM114.94 33.96h2.63v2.63h-2.63zM125.39 33.96h2.63v2.63h-2.63zM0.00 36.57h2.63v2.63h-2.63zM2.61 36.57h2.63v2.63h-2.63zM10.45 36.57h2.63v2.63h-2.63zM13.06 36.57h2.63v2.63h-2.63zM15.67 36.57h2.63v2.63h-2.63zM20.90 36.57h2.63v2.63h-2.63zM23.51 36.57h2.63v2.63h-2.63zM31.35 36.57h2.63v2.63h-2.63zM33.96 36.57h2.63v2.63h-2.63zM36.57 36.57h2.63v2.63h-2.63zM39.18 36.57h2.63v2.63h-2.63zM44.41 36.57h2.63v2.63h-2.63zM52.24 36.57h2.63v2.63h-2.63zM54.86 36.57h2.63v2.63h-2.63zM60.08 36.57h2.63v2.63h-2.63zM65.31 36.57h2.63v2.63h-2.63zM67.92 36.57h2.63v2.63h-2.63zM73.14 36.57h2.63v2.63h-2.63zM78.37 36.57h2.63v2.63h-2.63zM80.98 36.57h2.63v2.63h-2.63zM83.59 36.57h2.63v2.63h-2.63zM86.20 36.57h2.63v2.63h-2.63zM94.04 36.57h2.63v2.63h-2.63zM96.65 36.57h2.63v2.63h-2.63zM99.27 36.57h2.63v2.63h-2.63zM104.49 36.57h2.63v2.63h-2.63zM107.10 36.57h2.63v2.63h-2.63zM109.71 36.57h2.63v2.63h-2.63zM112.33 36.57h2.63v2.63h-2.63zM0.00 39.18h2.63v2.63h-2.63zM2.61 39.18h2.63v2.63h-2.63zM10.45 39.18h2.63v2.63h-2.63zM15.67 39.18h2.63v2.63h-2.63zM18.29 39.18h2.63v2.63h-2.63zM20.90 39.18h2.63v2.63h-2.63zM23.51 39.18h2.63v2.63h-2.63zM26.12 39.18h2.63v2.63h-2.63zM28.73 39.18h2.63v2.63h-2.63zM31.35 39.18h2.63v2.63h-2.63zM36.57 39.18h2.63v2.63h-2.63zM41.80 39.18h2.63v2.63h-2.63zM44.41 39.18h2.63v2.63h-2.63zM52.24 39.18h2.63v2.63h-2.63zM54.86 39.18h2.63v2.63h-2.63zM57.47 39.18h2.63v2.63h-2.63zM60.08 39.18h2.63v2.63h-2.63zM65.31 39.18h2.63v2.63h-2.63zM67.92 39.18h2.63v2.63h-2.63zM73.14 39.18h2.63v2.63h-2.63zM75.76 39.18h2.63v2.63h-2.63zM83.59 39.18h2.63v2.63h-2.63zM86.20 39.18h2.63v2.63h-2.63zM88.82 39.18h2.63v2.63h-2.63zM94.04 39.18h2.63v2.63h-2.63zM101.88 39.18h2.63v2.63h-2.63zM104.49 39.18h2.63v2.63h-2.63zM112.33 39.18h2.63v2.63h-2.63zM117.55 39.18h2.63v2.63h-2.63zM120.16 39.18h2.63v2.63h-2.63zM122.78 39.18h2.63v2.63h-2.63zM7.84 41.80h2.63v2.63h-2.63zM10.45 41.80h2.63v2.63h-2.63zM13.06 41.80h2.63v2.63h-2.63zM20.90 41.80h2.63v2.63h-2.63zM23.51 41.80h2.63v2.63h-2.63zM26.12 41.80h2.63v2.63h-2.63zM28.73 41.80h2.63v2.63h-2.63zM33.96 41.80h2.63v2.63h-2.63zM49.63 41.80h2.63v2.63h-2.63zM52.24 41.80h2.63v2.63h-2.63zM54.86 41.80h2.63v2.63h-2.63zM60.08 41.80h2.63v2.63h-2.63zM62.69 41.80h2.63v2.63h-2.63zM67.92 41.80h2.63v2.63h-2.63zM70.53 41.80h2.63v2.63h-2.63zM73.14 41.80h2.63v2.63h-2.63zM78.37 41.80h2.63v2.63h-2.63zM88.82 41.80h2.63v2.63h-2.63zM91.43 41.80h2.63v2.63h-2.63zM94.04 41.80h2.63v2.63h-2.63zM96.65 41.80h2.63v2.63h-2.63zM101.88 41.80h2.63v2.63h-2.63zM104.49 41.80h2.63v2.63h-2.63zM107.10 41.80h2.63v2.63h-2.63zM122.78 41.80h2.63v2.63h-2.63zM0.00 44.41h2.63v2.63h-2.63zM5.22 44.41h2.63v2.63h-2.63zM10.45 44.41h2.63v2.63h-2.63zM13.06 44.41h2.63v2.63h-2.63zM15.67 44.41h2.63v2.63h-2.63zM18.29 44.41h2.63v2.63h-2.63zM26.12 44.41h2.63v2.63h-2.63zM28.73 44.41h2.63v2.63h-2.63zM33.96 44.41h2.63v2.63h-2.63zM36.57 44.41h2.63v2.63h-2.63zM47.02 44.41h2.63v2.63h-2.63zM49.63 44.41h2.63v2.63h-2.63zM60.08 44.41h2.63v2.63h-2.63zM62.69 44.41h2.63v2.63h-2.63zM65.31 44.41h2.63v2.63h-2.63zM67.92 44.41h2.63v2.63h-2.63zM78.37 44.41h2.63v2.63h-2.63zM83.59 44.41h2.63v2.63h-2.63zM86.20 44.41h2.63v2.63h-2.63zM94.04 44.41h2.63v2.63h-2.63zM101.88 44.41h2.63v2.63h-2.63zM104.49 44.41h2.63v2.63h-2.63zM107.10 44.41h2.63v2.63h-2.63zM109.71 44.41h2.63v2.63h-2.63zM112.33 44.41h2.63v2.63h-2.63zM120.16 44.41h2.63v2.63h-2.63zM122.78 44.41h2.63v2.63h-2.63zM125.39 44.41h2.63v2.63h-2.63zM2.61 47.02h2.63v2.63h-2.63zM5.22 47.02h2.63v2.63h-2.63zM7.84 47.02h2.63v2.63h-2.63zM15.67 47.02h2.63v2.63h-2.63zM18.29 47.02h2.63v2.63h-2.63zM20.90 47.02h2.63v2.63h-2.63zM28.73 47.02h2.63v2.63h-2.63zM31.35 47.02h2.63v2.63h-2.63zM36.57 47.02h2.63v2.63h-2.63zM39.18 47.02h2.63v2.63h-2.63zM41.80 47.02h2.63v2.63h-2.63zM47.02 47.02h2.63v2.63h-2.63zM52.24 47.02h2.63v2.63h-2.63zM54.86 47.02h2.63v2.63h-2.63zM62.69 47.02h2.63v2.63h-2.63zM65.31 47.02h2.63v2.63h-2.63zM70.53 47.02h2.63v2.63h-2.63zM73.14 47.02h2.63v2.63h-2.63zM78.37 47.02h2.63v2.63h-2.63zM83.59 47.02h2.63v2.63h-2.63zM88.82 47.02h2.63v2.63h-2.63zM91.43 47.02h2.63v2.63h-2.63zM94.04 47.02h2.63v2.63h-2.63zM104.49 47.02h2.63v2.63h-2.63zM109.71 47.02h2.63v2.63h-2.63zM112.33 47.02h2.63v2.63h-2.63zM114.94 47.02h2.63v2.63h-2.63zM117.55 47.02h2.63v2.63h-2.63zM125.39 47.02h2.63v2.63h-2.63zM0.00 49.63h2.63v2.63h-2.63zM7.84 49.63h2.63v2.63h-2.63zM10.45 49.63h2.63v2.63h-2.63zM18.29 49.63h2.63v2.63h-2.63zM20.90 49.63h2.63v2.63h-2.63zM26.12 49.63h2.63v2.63h-2.63zM36.57 49.63h2.63v2.63h-2.63zM41.80 49.63h2.63v2.63h-2.63zM44.41 49.63h2.63v2.63h-2.63zM52.24 49.63h2.63v2.63h-2.63zM54.86 49.63h2.63v2.63h-2.63zM57.47 49.63h2.63v2.63h-2.63zM60.08 49.63h2.63v2.63h-2.63zM62.69 49.63h2.63v2.63h-2.63zM65.31 49.63h2.63v2.63h-2.63zM67.92 49.63h2.63v2.63h-2.63zM75.76 49.63h2.63v2.63h-2.63zM83.59 49.63h2.63v2.63h-2.63zM88.82 49.63h2.63v2.63h-2.63zM99.27 49.63h2.63v2.63h-2.63zM101.88 49.63h2.63v2.63h-2.63zM107.10 49.63h2.63v2.63h-2.63zM112.33 49.63h2.63v2.63h-2.63zM114.94 49.63h2.63v2.63h-2.63zM117.55 49.63h2.63v2.63h-2.63zM122.78 49.63h2.63v2.63h-2.63zM125.39 49.63h2.63v2.63h-2.63zM5.22 52.24h2.63v2.63h-2.63zM7.84 52.24h2.63v2.63h-2.63zM10.45 52.24h2.63v2.63h-2.63zM13.06 52.24h2.63v2.63h-2.63zM15.67 52.24h2.63v2.63h-2.63zM18.29 52.24h2.63v2.63h-2.63zM20.90 52.24h2.63v2.63h-2.63zM23.51 52.24h2.63v2.63h-2.63zM26.12 52.24h2.63v2.63h-2.63zM28.73 52.24h2.63v2.63h-2.63zM33.96 52.24h2.63v2.63h-2.63zM41.80 52.24h2.63v2.63h-2.63zM44.41 52.24h2.63v2.63h-2.63zM47.02 52.24h2.63v2.63h-2.63zM49.63 52.24h2.63v2.63h-2.63zM54.86 52.24h2.63v2.63h-2.63zM67.92 52.24h2.63v2.63h-2.63zM73.14 52.24h2.63v2.63h-2.63zM80.98 52.24h2.63v2.63h-2.63zM88.82 52.24h2.63v2.63h-2.63zM91.43 52.24h2.63v2.63h-2.63zM96.65 52.24h2.63v2.63h-2.63zM101.88 52.24h2.63v2.63h-2.63zM107.10 52.24h2.63v2.63h-2.63zM109.71 52.24h2.63v2.63h-2.63zM114.94 52.24h2.63v2.63h-2.63zM117.55 52.24h2.63v2.63h-2.63zM120.16 52.24h2.63v2.63h-2.63zM122.78 52.24h2.63v2.63h-2.63zM125.39 52.24h2.63v2.63h-2.63zM0.00 54.86h2.63v2.63h-2.63zM2.61 54.86h2.63v2.63h-2.63zM13.06 54.86h2.63v2.63h-2.63zM18.29 54.86h2.63v2.63h-2.63zM26.12 54.86h2.63v2.63h-2.63zM39.18 54.86h2.63v2.63h-2.63zM47.02 54.86h2.63v2.63h-2.63zM52.24 54.86h2.63v2.63h-2.63zM60.08 54.86h2.63v2.63h-2.63zM65.31 54.86h2.63v2.63h-2.63zM67.92 54.86h2.63v2.63h-2.63zM73.14 54.86h2.63v2.63h-2.63zM78.37 54.86h2.63v2.63h-2.63zM91.43 54.86h2.63v2.63h-2.63zM94.04 54.86h2.63v2.63h-2.63zM96.65 54.86h2.63v2.63h-2.63zM99.27 54.86h2.63v2.63h-2.63zM104.49 54.86h2.63v2.63h-2.63zM107.10 54.86h2.63v2.63h-2.63zM112.33 54.86h2.63v2.63h-2.63zM114.94 54.86h2.63v2.63h-2.63zM120.16 54.86h2.63v2.63h-2.63zM122.78 54.86h2.63v2.63h-2.63zM125.39 54.86h2.63v2.63h-2.63zM0.00 57.47h2.63v2.63h-2.63zM2.61 57.47h2.63v2.63h-2.63zM5.22 57.47h2.63v2.63h-2.63zM10.45 57.47h2.63v2.63h-2.63zM13.06 57.47h2.63v2.63h-2.63zM15.67 57.47h2.63v2.63h-2.63zM18.29 57.47h2.63v2.63h-2.63zM20.90 57.47h2.63v2.63h-2.63zM26.12 57.47h2.63v2.63h-2.63zM28.73 57.47h2.63v2.63h-2.63zM31.35 57.47h2.63v2.63h-2.63zM41.80 57.47h2.63v2.63h-2.63zM44.41 57.47h2.63v2.63h-2.63zM47.02 57.47h2.63v2.63h-2.63zM54.86 57.47h2.63v2.63h-2.63zM57.47 57.47h2.63v2.63h-2.63zM60.08 57.47h2.63v2.63h-2.63zM62.69 57.47h2.63v2.63h-2.63zM65.31 57.47h2.63v2.63h-2.63zM67.92 57.47h2.63v2.63h-2.63zM73.14 57.47h2.63v2.63h-2.63zM78.37 57.47h2.63v2.63h-2.63zM80.98 57.47h2.63v2.63h-2.63zM83.59 57.47h2.63v2.63h-2.63zM88.82 57.47h2.63v2.63h-2.63zM96.65 57.47h2.63v2.63h-2.63zM99.27 57.47h2.63v2.63h-2.63zM104.49 57.47h2.63v2.63h-2.63zM107.10 57.47h2.63v2.63h-2.63zM109.71 57.47h2.63v2.63h-2.63zM112.33 57.47h2.63v2.63h-2.63zM114.94 57.47h2.63v2.63h-2.63zM117.55 57.47h2.63v2.63h-2.63zM120.16 57.47h2.63v2.63h-2.63zM2.61 60.08h2.63v2.63h-2.63zM10.45 60.08h2.63v2.63h-2.63zM20.90 60.08h2.63v2.63h-2.63zM23.51 60.08h2.63v2.63h-2.63zM26.12 60.08h2.63v2.63h-2.63zM28.73 60.08h2.63v2.63h-2.63zM41.80 60.08h2.63v2.63h-2.63zM47.02 60.08h2.63v2.63h-2.63zM54.86 60.08h2.63v2.63h-2.63zM57.47 60.08h2.63v2.63h-2.63zM67.92 60.08h2.63v2.63h-2.63zM70.53 60.08h2.63v2.63h-2.63zM73.14 60.08h2.63v2.63h-2.63zM83.59 60.08h2.63v2.63h-2.63zM88.82 60.08h2.63v2.63h-2.63zM91.43 60.08h2.63v2.63h-2.63zM104.49 60.08h2.63v2.63h-2.63zM114.94 60.08h2.63v2.63h-2.63zM117.55 60.08h2.63v2.63h-2.63zM125.39 60.08h2.63v2.63h-2.63zM0.00 62.69h2.63v2.63h-2.63zM5.22 62.69h2.63v2.63h-2.63zM10.45 62.69h2.63v2.63h-2.63zM15.67 62.69h2.63v2.63h-2.63zM20.90 62.69h2.63v2.63h-2.63zM23.51 62.69h2.63v2.63h-2.63zM26.12 62.69h2.63v2.63h-2.63zM28.73 62.69h2.63v2.63h-2.63zM41.80 62.69h2.63v2.63h-2.63zM47.02 62.69h2.63v2.63h-2.63zM57.47 62.69h2.63v2.63h-2.63zM62.69 62.69h2.63v2.63h-2.63zM67.92 62.69h2.63v2.63h-2.63zM70.53 62.69h2.63v2.63h-2.63zM73.14 62.69h2.63v2.63h-2.63zM75.76 62.69h2.63v2.63h-2.63zM91.43 62.69h2.63v2.63h-2.63zM94.04 62.69h2.63v2.63h-2.63zM96.65 62.69h2.63v2.63h-2.63zM101.88 62.69h2.63v2.63h-2.63zM104.49 62.69h2.63v2.63h-2.63zM109.71 62.69h2.63v2.63h-2.63zM114.94 62.69h2.63v2.63h-2.63zM120.16 62.69h2.63v2.63h-2.63zM122.78 62.69h2.63v2.63h-2.63zM0.00 65.31h2.63v2.63h-2.63zM7.84 65.31h2.63v2.63h-2.63zM10.45 65.31h2.63v2.63h-2.63zM20.90 65.31h2.63v2.63h-2.63zM26.12 65.31h2.63v2.63h-2.63zM31.35 65.31h2.63v2.63h-2.63zM36.57 65.31h2.63v2.63h-2.63zM39.18 65.31h2.63v2.63h-2.63zM41.80 65.31h2.63v2.63h-2.63zM49.63 65.31h2.63v2.63h-2.63zM52.24 65.31h2.63v2.63h-2.63zM54.86 65.31h2.63v2.63h-2.63zM57.47 65.31h2.63v2.63h-2.63zM67.92 65.31h2.63v2.63h-2.63zM70.53 65.31h2.63v2.63h-2.63zM75.76 65.31h2.63v2.63h-2.63zM78.37 65.31h2.63v2.63h-2.63zM83.59 65.31h2.63v2.63h-2.63zM86.20 65.31h2.63v2.63h-2.63zM91.43 65.31h2.63v2.63h-2.63zM104.49 65.31h2.63v2.63h-2.63zM114.94 65.31h2.63v2.63h-2.63zM120.16 65.31h2.63v2.63h-2.63zM122.78 65.31h2.63v2.63h-2.63zM125.39 65.31h2.63v2.63h-2.63zM2.61 67.92h2.63v2.63h-2.63zM5.22 67.92h2.63v2.63h-2.63zM10.45 67.92h2.63v2.63h-2.63zM13.06 67.92h2.63v2.63h-2.63zM15.67 67.92h2.63v2.63h-2.63zM18.29 67.92h2.63v2.63h-2.63zM20.90 67.92h2.63v2.63h-2.63zM26.12 67.92h2.63v2.63h-2.63zM28.73 67.92h2.63v2.63h-2.63zM31.35 67.92h2.63v2.63h-2.63zM41.80 67.92h2.63v2.63h-2.63zM44.41 67.92h2.63v2.63h-2.63zM52.24 67.92h2.63v2.63h-2.63zM54.86 67.92h2.63v2.63h-2.63zM57.47 67.92h2.63v2.63h-2.63zM60.08 67.92h2.63v2.63h-2.63zM62.69 67.92h2.63v2.63h-2.63zM65.31 67.92h2.63v2.63h-2.63zM67.92 67.92h2.63v2.63h-2.63zM73.14 67.92h2.63v2.63h-2.63zM75.76 67.92h2.63v2.63h-2.63zM78.37 67.92h2.63v2.63h-2.63zM80.98 67.92h2.63v2.63h-2.63zM86.20 67.92h2.63v2.63h-2.63zM88.82 67.92h2.63v2.63h-2.63zM91.43 67.92h2.63v2.63h-2.63zM99.27 67.92h2.63v2.63h-2.63zM104.49 67.92h2.63v2.63h-2.63zM107.10 67.92h2.63v2.63h-2.63zM109.71 67.92h2.63v2.63h-2.63zM112.33 67.92h2.63v2.63h-2.63zM114.94 67.92h2.63v2.63h-2.63zM117.55 67.92h2.63v2.63h-2.63zM120.16 67.92h2.63v2.63h-2.63zM125.39 67.92h2.63v2.63h-2.63zM0.00 70.53h2.63v2.63h-2.63zM2.61 70.53h2.63v2.63h-2.63zM5.22 70.53h2.63v2.63h-2.63zM7.84 70.53h2.63v2.63h-2.63zM15.67 70.53h2.63v2.63h-2.63zM20.90 70.53h2.63v2.63h-2.63zM23.51 70.53h2.63v2.63h-2.63zM28.73 70.53h2.63v2.63h-2.63zM36.57 70.53h2.63v2.63h-2.63zM44.41 70.53h2.63v2.63h-2.63zM47.02 70.53h2.63v2.63h-2.63zM67.92 70.53h2.63v2.63h-2.63zM70.53 70.53h2.63v2.63h-2.63zM75.76 70.53h2.63v2.63h-2.63zM78.37 70.53h2.63v2.63h-2.63zM88.82 70.53h2.63v2.63h-2.63zM91.43 70.53h2.63v2.63h-2.63zM94.04 70.53h2.63v2.63h-2.63zM99.27 70.53h2.63v2.63h-2.63zM107.10 70.53h2.63v2.63h-2.63zM114.94 70.53h2.63v2.63h-2.63zM117.55 70.53h2.63v2.63h-2.63zM122.78 70.53h2.63v2.63h-2.63zM0.00 73.14h2.63v2.63h-2.63zM7.84 73.14h2.63v2.63h-2.63zM10.45 73.14h2.63v2.63h-2.63zM20.90 73.14h2.63v2.63h-2.63zM31.35 73.14h2.63v2.63h-2.63zM36.57 73.14h2.63v2.63h-2.63zM41.80 73.14h2.63v2.63h-2.63zM47.02 73.14h2.63v2.63h-2.63zM52.24 73.14h2.63v2.63h-2.63zM54.86 73.14h2.63v2.63h-2.63zM57.47 73.14h2.63v2.63h-2.63zM60.08 73.14h2.63v2.63h-2.63zM62.69 73.14h2.63v2.63h-2.63zM65.31 73.14h2.63v2.63h-2.63zM67.92 73.14h2.63v2.63h-2.63zM73.14 73.14h2.63v2.63h-2.63zM75.76 73.14h2.63v2.63h-2.63zM78.37 73.14h2.63v2.63h-2.63zM88.82 73.14h2.63v2.63h-2.63zM94.04 73.14h2.63v2.63h-2.63zM96.65 73.14h2.63v2.63h-2.63zM99.27 73.14h2.63v2.63h-2.63zM109.71 73.14h2.63v2.63h-2.63zM114.94 73.14h2.63v2.63h-2.63zM120.16 73.14h2.63v2.63h-2.63zM2.61 75.76h2.63v2.63h-2.63zM5.22 75.76h2.63v2.63h-2.63zM10.45 75.76h2.63v2.63h-2.63zM15.67 75.76h2.63v2.63h-2.63zM20.90 75.76h2.63v2.63h-2.63zM23.51 75.76h2.63v2.63h-2.63zM26.12 75.76h2.63v2.63h-2.63zM28.73 75.76h2.63v2.63h-2.63zM31.35 75.76h2.63v2.63h-2.63zM33.96 75.76h2.63v2.63h-2.63zM39.18 75.76h2.63v2.63h-2.63zM41.80 75.76h2.63v2.63h-2.63zM44.41 75.76h2.63v2.63h-2.63zM47.02 75.76h2.63v2.63h-2.63zM49.63 75.76h2.63v2.63h-2.63zM57.47 75.76h2.63v2.63h-2.63zM65.31 75.76h2.63v2.63h-2.63zM75.76 75.76h2.63v2.63h-2.63zM83.59 75.76h2.63v2.63h-2.63zM86.20 75.76h2.63v2.63h-2.63zM94.04 75.76h2.63v2.63h-2.63zM96.65 75.76h2.63v2.63h-2.63zM99.27 75.76h2.63v2.63h-2.63zM101.88 75.76h2.63v2.63h-2.63zM107.10 75.76h2.63v2.63h-2.63zM109.71 75.76h2.63v2.63h-2.63zM117.55 75.76h2.63v2.63h-2.63zM10.45 78.37h2.63v2.63h-2.63zM20.90 78.37h2.63v2.63h-2.63zM28.73 78.37h2.63v2.63h-2.63zM31.35 78.37h2.63v2.63h-2.63zM33.96 78.37h2.63v2.63h-2.63zM36.57 78.37h2.63v2.63h-2.63zM39.18 78.37h2.63v2.63h-2.63zM41.80 78.37h2.63v2.63h-2.63zM44.41 78.37h2.63v2.63h-2.63zM47.02 78.37h2.63v2.63h-2.63zM49.63 78.37h2.63v2.63h-2.63zM57.47 78.37h2.63v2.63h-2.63zM62.69 78.37h2.63v2.63h-2.63zM73.14 78.37h2.63v2.63h-2.63zM75.76 78.37h2.63v2.63h-2.63zM80.98 78.37h2.63v2.63h-2.63zM88.82 78.37h2.63v2.63h-2.63zM99.27 78.37h2.63v2.63h-2.63zM104.49 78.37h2.63v2.63h-2.63zM107.10 78.37h2.63v2.63h-2.63zM112.33 78.37h2.63v2.63h-2.63zM120.16 78.37h2.63v2.63h-2.63zM125.39 78.37h2.63v2.63h-2.63zM0.00 80.98h2.63v2.63h-2.63zM7.84 80.98h2.63v2.63h-2.63zM10.45 80.98h2.63v2.63h-2.63zM13.06 80.98h2.63v2.63h-2.63zM20.90 80.98h2.63v2.63h-2.63zM26.12 80.98h2.63v2.63h-2.63zM28.73 80.98h2.63v2.63h-2.63zM31.35 80.98h2.63v2.63h-2.63zM33.96 80.98h2.63v2.63h-2.63zM44.41 80.98h2.63v2.63h-2.63zM47.02 80.98h2.63v2.63h-2.63zM49.63 80.98h2.63v2.63h-2.63zM60.08 80.98h2.63v2.63h-2.63zM70.53 80.98h2.63v2.63h-2.63zM73.14 80.98h2.63v2.63h-2.63zM75.76 80.98h2.63v2.63h-2.63zM78.37 80.98h2.63v2.63h-2.63zM109.71 80.98h2.63v2.63h-2.63zM114.94 80.98h2.63v2.63h-2.63zM120.16 80.98h2.63v2.63h-2.63zM122.78 80.98h2.63v2.63h-2.63zM125.39 80.98h2.63v2.63h-2.63zM7.84 83.59h2.63v2.63h-2.63zM18.29 83.59h2.63v2.63h-2.63zM20.90 83.59h2.63v2.63h-2.63zM23.51 83.59h2.63v2.63h-2.63zM26.12 83.59h2.63v2.63h-2.63zM28.73 83.59h2.63v2.63h-2.63zM36.57 83.59h2.63v2.63h-2.63zM41.80 83.59h2.63v2.63h-2.63zM44.41 83.59h2.63v2.63h-2.63zM54.86 83.59h2.63v2.63h-2.63zM57.47 83.59h2.63v2.63h-2.63zM60.08 83.59h2.63v2.63h-2.63zM70.53 83.59h2.63v2.63h-2.63zM73.14 83.59h2.63v2.63h-2.63zM75.76 83.59h2.63v2.63h-2.63zM80.98 83.59h2.63v2.63h-2.63zM83.59 83.59h2.63v2.63h-2.63zM86.20 83.59h2.63v2.63h-2.63zM88.82 83.59h2.63v2.63h-2.63zM94.04 83.59h2.63v2.63h-2.63zM99.27 83.59h2.63v2.63h-2.63zM104.49 83.59h2.63v2.63h-2.63zM107.10 83.59h2.63v2.63h-2.63zM112.33 83.59h2.63v2.63h-2.63zM117.55 83.59h2.63v2.63h-2.63zM120.16 83.59h2.63v2.63h-2.63zM5.22 86.20h2.63v2.63h-2.63zM13.06 86.20h2.63v2.63h-2.63zM18.29 86.20h2.63v2.63h-2.63zM26.12 86.20h2.63v2.63h-2.63zM28.73 86.20h2.63v2.63h-2.63zM36.57 86.20h2.63v2.63h-2.63zM39.18 86.20h2.63v2.63h-2.63zM44.41 86.20h2.63v2.63h-2.63zM49.63 86.20h2.63v2.63h-2.63zM52.24 86.20h2.63v2.63h-2.63zM54.86 86.20h2.63v2.63h-2.63zM60.08 86.20h2.63v2.63h-2.63zM65.31 86.20h2.63v2.63h-2.63zM70.53 86.20h2.63v2.63h-2.63zM78.37 86.20h2.63v2.63h-2.63zM80.98 86.20h2.63v2.63h-2.63zM94.04 86.20h2.63v2.63h-2.63zM96.65 86.20h2.63v2.63h-2.63zM107.10 86.20h2.63v2.63h-2.63zM120.16 86.20h2.63v2.63h-2.63zM122.78 86.20h2.63v2.63h-2.63zM0.00 88.82h2.63v2.63h-2.63zM13.06 88.82h2.63v2.63h-2.63zM15.67 88.82h2.63v2.63h-2.63zM18.29 88.82h2.63v2.63h-2.63zM20.90 88.82h2.63v2.63h-2.63zM31.35 88.82h2.63v2.63h-2.63zM44.41 88.82h2.63v2.63h-2.63zM57.47 88.82h2.63v2.63h-2.63zM60.08 88.82h2.63v2.63h-2.63zM67.92 88.82h2.63v2.63h-2.63zM75.76 88.82h2.63v2.63h-2.63zM83.59 88.82h2.63v2.63h-2.63zM86.20 88.82h2.63v2.63h-2.63zM88.82 88.82h2.63v2.63h-2.63zM96.65 88.82h2.63v2.63h-2.63zM99.27 88.82h2.63v2.63h-2.63zM107.10 88.82h2.63v2.63h-2.63zM120.16 88.82h2.63v2.63h-2.63zM125.39 88.82h2.63v2.63h-2.63zM0.00 91.43h2.63v2.63h-2.63zM2.61 91.43h2.63v2.63h-2.63zM7.84 91.43h2.63v2.63h-2.63zM13.06 91.43h2.63v2.63h-2.63zM15.67 91.43h2.63v2.63h-2.63zM18.29 91.43h2.63v2.63h-2.63zM20.90 91.43h2.63v2.63h-2.63zM26.12 91.43h2.63v2.63h-2.63zM28.73 91.43h2.63v2.63h-2.63zM36.57 91.43h2.63v2.63h-2.63zM41.80 91.43h2.63v2.63h-2.63zM44.41 91.43h2.63v2.63h-2.63zM47.02 91.43h2.63v2.63h-2.63zM49.63 91.43h2.63v2.63h-2.63zM57.47 91.43h2.63v2.63h-2.63zM62.69 91.43h2.63v2.63h-2.63zM67.92 91.43h2.63v2.63h-2.63zM80.98 91.43h2.63v2.63h-2.63zM83.59 91.43h2.63v2.63h-2.63zM86.20 91.43h2.63v2.63h-2.63zM88.82 91.43h2.63v2.63h-2.63zM91.43 91.43h2.63v2.63h-2.63zM94.04 91.43h2.63v2.63h-2.63zM101.88 91.43h2.63v2.63h-2.63zM109.71 91.43h2.63v2.63h-2.63zM114.94 91.43h2.63v2.63h-2.63zM117.55 91.43h2.63v2.63h-2.63zM122.78 91.43h2.63v2.63h-2.63zM7.84 94.04h2.63v2.63h-2.63zM10.45 94.04h2.63v2.63h-2.63zM13.06 94.04h2.63v2.63h-2.63zM20.90 94.04h2.63v2.63h-2.63zM23.51 94.04h2.63v2.63h-2.63zM26.12 94.04h2.63v2.63h-2.63zM28.73 94.04h2.63v2.63h-2.63zM39.18 94.04h2.63v2.63h-2.63zM52.24 94.04h2.63v2.63h-2.63zM54.86 94.04h2.63v2.63h-2.63zM65.31 94.04h2.63v2.63h-2.63zM73.14 94.04h2.63v2.63h-2.63zM75.76 94.04h2.63v2.63h-2.63zM78.37 94.04h2.63v2.63h-2.63zM80.98 94.04h2.63v2.63h-2.63zM83.59 94.04h2.63v2.63h-2.63zM86.20 94.04h2.63v2.63h-2.63zM88.82 94.04h2.63v2.63h-2.63zM91.43 94.04h2.63v2.63h-2.63zM96.65 94.04h2.63v2.63h-2.63zM101.88 94.04h2.63v2.63h-2.63zM104.49 94.04h2.63v2.63h-2.63zM109.71 94.04h2.63v2.63h-2.63zM120.16 94.04h2.63v2.63h-2.63zM122.78 94.04h2.63v2.63h-2.63zM125.39 94.04h2.63v2.63h-2.63zM7.84 96.65h2.63v2.63h-2.63zM10.45 96.65h2.63v2.63h-2.63zM15.67 96.65h2.63v2.63h-2.63zM20.90 96.65h2.63v2.63h-2.63zM23.51 96.65h2.63v2.63h-2.63zM26.12 96.65h2.63v2.63h-2.63zM33.96 96.65h2.63v2.63h-2.63zM39.18 96.65h2.63v2.63h-2.63zM41.80 96.65h2.63v2.63h-2.63zM44.41 96.65h2.63v2.63h-2.63zM47.02 96.65h2.63v2.63h-2.63zM52.24 96.65h2.63v2.63h-2.63zM54.86 96.65h2.63v2.63h-2.63zM57.47 96.65h2.63v2.63h-2.63zM60.08 96.65h2.63v2.63h-2.63zM65.31 96.65h2.63v2.63h-2.63zM70.53 96.65h2.63v2.63h-2.63zM78.37 96.65h2.63v2.63h-2.63zM80.98 96.65h2.63v2.63h-2.63zM83.59 96.65h2.63v2.63h-2.63zM86.20 96.65h2.63v2.63h-2.63zM88.82 96.65h2.63v2.63h-2.63zM91.43 96.65h2.63v2.63h-2.63zM101.88 96.65h2.63v2.63h-2.63zM104.49 96.65h2.63v2.63h-2.63zM109.71 96.65h2.63v2.63h-2.63zM114.94 96.65h2.63v2.63h-2.63zM120.16 96.65h2.63v2.63h-2.63zM125.39 96.65h2.63v2.63h-2.63zM0.00 99.27h2.63v2.63h-2.63zM2.61 99.27h2.63v2.63h-2.63zM10.45 99.27h2.63v2.63h-2.63zM13.06 99.27h2.63v2.63h-2.63zM18.29 99.27h2.63v2.63h-2.63zM23.51 99.27h2.63v2.63h-2.63zM26.12 99.27h2.63v2.63h-2.63zM33.96 99.27h2.63v2.63h-2.63zM36.57 99.27h2.63v2.63h-2.63zM39.18 99.27h2.63v2.63h-2.63zM44.41 99.27h2.63v2.63h-2.63zM47.02 99.27h2.63v2.63h-2.63zM49.63 99.27h2.63v2.63h-2.63zM62.69 99.27h2.63v2.63h-2.63zM65.31 99.27h2.63v2.63h-2.63zM70.53 99.27h2.63v2.63h-2.63zM75.76 99.27h2.63v2.63h-2.63zM80.98 99.27h2.63v2.63h-2.63zM88.82 99.27h2.63v2.63h-2.63zM91.43 99.27h2.63v2.63h-2.63zM96.65 99.27h2.63v2.63h-2.63zM101.88 99.27h2.63v2.63h-2.63zM104.49 99.27h2.63v2.63h-2.63zM109.71 99.27h2.63v2.63h-2.63zM112.33 99.27h2.63v2.63h-2.63zM114.94 99.27h2.63v2.63h-2.63zM120.16 99.27h2.63v2.63h-2.63zM122.78 99.27h2.63v2.63h-2.63zM125.39 99.27h2.63v2.63h-2.63zM0.00 101.88h2.63v2.63h-2.63zM2.61 101.88h2.63v2.63h-2.63zM13.06 101.88h2.63v2.63h-2.63zM18.29 101.88h2.63v2.63h-2.63zM23.51 101.88h2.63v2.63h-2.63zM31.35 101.88h2.63v2.63h-2.63zM33.96 101.88h2.63v2.63h-2.63zM41.80 101.88h2.63v2.63h-2.63zM47.02 101.88h2.63v2.63h-2.63zM49.63 101.88h2.63v2.63h-2.63zM52.24 101.88h2.63v2.63h-2.63zM54.86 101.88h2.63v2.63h-2.63zM60.08 101.88h2.63v2.63h-2.63zM62.69 101.88h2.63v2.63h-2.63zM67.92 101.88h2.63v2.63h-2.63zM70.53 101.88h2.63v2.63h-2.63zM83.59 101.88h2.63v2.63h-2.63zM91.43 101.88h2.63v2.63h-2.63zM94.04 101.88h2.63v2.63h-2.63zM96.65 101.88h2.63v2.63h-2.63zM99.27 101.88h2.63v2.63h-2.63zM101.88 101.88h2.63v2.63h-2.63zM104.49 101.88h2.63v2.63h-2.63zM107.10 101.88h2.63v2.63h-2.63zM109.71 101.88h2.63v2.63h-2.63zM117.55 101.88h2.63v2.63h-2.63zM125.39 101.88h2.63v2.63h-2.63zM5.22 104.49h2.63v2.63h-2.63zM7.84 104.49h2.63v2.63h-2.63zM15.67 104.49h2.63v2.63h-2.63zM23.51 104.49h2.63v2.63h-2.63zM26.12 104.49h2.63v2.63h-2.63zM28.73 104.49h2.63v2.63h-2.63zM31.35 104.49h2.63v2.63h-2.63zM47.02 104.49h2.63v2.63h-2.63zM49.63 104.49h2.63v2.63h-2.63zM57.47 104.49h2.63v2.63h-2.63zM60.08 104.49h2.63v2.63h-2.63zM62.69 104.49h2.63v2.63h-2.63zM65.31 104.49h2.63v2.63h-2.63zM67.92 104.49h2.63v2.63h-2.63zM70.53 104.49h2.63v2.63h-2.63zM73.14 104.49h2.63v2.63h-2.63zM75.76 104.49h2.63v2.63h-2.63zM78.37 104.49h2.63v2.63h-2.63zM80.98 104.49h2.63v2.63h-2.63zM101.88 104.49h2.63v2.63h-2.63zM104.49 104.49h2.63v2.63h-2.63zM107.10 104.49h2.63v2.63h-2.63zM109.71 104.49h2.63v2.63h-2.63zM112.33 104.49h2.63v2.63h-2.63zM114.94 104.49h2.63v2.63h-2.63zM122.78 104.49h2.63v2.63h-2.63zM20.90 107.10h2.63v2.63h-2.63zM23.51 107.10h2.63v2.63h-2.63zM26.12 107.10h2.63v2.63h-2.63zM31.35 107.10h2.63v2.63h-2.63zM33.96 107.10h2.63v2.63h-2.63zM36.57 107.10h2.63v2.63h-2.63zM39.18 107.10h2.63v2.63h-2.63zM41.80 107.10h2.63v2.63h-2.63zM44.41 107.10h2.63v2.63h-2.63zM47.02 107.10h2.63v2.63h-2.63zM49.63 107.10h2.63v2.63h-2.63zM57.47 107.10h2.63v2.63h-2.63zM67.92 107.10h2.63v2.63h-2.63zM70.53 107.10h2.63v2.63h-2.63zM78.37 107.10h2.63v2.63h-2.63zM80.98 107.10h2.63v2.63h-2.63zM83.59 107.10h2.63v2.63h-2.63zM86.20 107.10h2.63v2.63h-2.63zM88.82 107.10h2.63v2.63h-2.63zM91.43 107.10h2.63v2.63h-2.63zM96.65 107.10h2.63v2.63h-2.63zM99.27 107.10h2.63v2.63h-2.63zM104.49 107.10h2.63v2.63h-2.63zM114.94 107.10h2.63v2.63h-2.63zM117.55 107.10h2.63v2.63h-2.63zM122.78 107.10h2.63v2.63h-2.63zM125.39 107.10h2.63v2.63h-2.63zM0.00 109.71h2.63v2.63h-2.63zM2.61 109.71h2.63v2.63h-2.63zM5.22 109.71h2.63v2.63h-2.63zM7.84 109.71h2.63v2.63h-2.63zM10.45 109.71h2.63v2.63h-2.63zM13.06 109.71h2.63v2.63h-2.63zM15.67 109.71h2.63v2.63h-2.63zM26.12 109.71h2.63v2.63h-2.63zM28.73 109.71h2.63v2.63h-2.63zM31.35 109.71h2.63v2.63h-2.63zM44.41 109.71h2.63v2.63h-2.63zM54.86 109.71h2.63v2.63h-2.63zM57.47 109.71h2.63v2.63h-2.63zM62.69 109.71h2.63v2.63h-2.63zM67.92 109.71h2.63v2.63h-2.63zM70.53 109.71h2.63v2.63h-2.63zM78.37 109.71h2.63v2.63h-2.63zM86.20 109.71h2.63v2.63h-2.63zM96.65 109.71h2.63v2.63h-2.63zM99.27 109.71h2.63v2.63h-2.63zM101.88 109.71h2.63v2.63h-2.63zM104.49 109.71h2.63v2.63h-2.63zM109.71 109.71h2.63v2.63h-2.63zM114.94 109.71h2.63v2.63h-2.63zM117.55 109.71h2.63v2.63h-2.63zM125.39 109.71h2.63v2.63h-2.63zM0.00 112.33h2.63v2.63h-2.63zM15.67 112.33h2.63v2.63h-2.63zM20.90 112.33h2.63v2.63h-2.63zM31.35 112.33h2.63v2.63h-2.63zM33.96 112.33h2.63v2.63h-2.63zM39.18 112.33h2.63v2.63h-2.63zM41.80 112.33h2.63v2.63h-2.63zM47.02 112.33h2.63v2.63h-2.63zM57.47 112.33h2.63v2.63h-2.63zM67.92 112.33h2.63v2.63h-2.63zM70.53 112.33h2.63v2.63h-2.63zM75.76 112.33h2.63v2.63h-2.63zM86.20 112.33h2.63v2.63h-2.63zM88.82 112.33h2.63v2.63h-2.63zM91.43 112.33h2.63v2.63h-2.63zM104.49 112.33h2.63v2.63h-2.63zM114.94 112.33h2.63v2.63h-2.63zM122.78 112.33h2.63v2.63h-2.63zM125.39 112.33h2.63v2.63h-2.63zM0.00 114.94h2.63v2.63h-2.63zM5.22 114.94h2.63v2.63h-2.63zM7.84 114.94h2.63v2.63h-2.63zM10.45 114.94h2.63v2.63h-2.63zM15.67 114.94h2.63v2.63h-2.63zM23.51 114.94h2.63v2.63h-2.63zM26.12 114.94h2.63v2.63h-2.63zM28.73 114.94h2.63v2.63h-2.63zM31.35 114.94h2.63v2.63h-2.63zM33.96 114.94h2.63v2.63h-2.63zM36.57 114.94h2.63v2.63h-2.63zM39.18 114.94h2.63v2.63h-2.63zM47.02 114.94h2.63v2.63h-2.63zM54.86 114.94h2.63v2.63h-2.63zM57.47 114.94h2.63v2.63h-2.63zM60.08 114.94h2.63v2.63h-2.63zM62.69 114.94h2.63v2.63h-2.63zM65.31 114.94h2.63v2.63h-2.63zM67.92 114.94h2.63v2.63h-2.63zM70.53 114.94h2.63v2.63h-2.63zM80.98 114.94h2.63v2.63h-2.63zM83.59 114.94h2.63v2.63h-2.63zM88.82 114.94h2.63v2.63h-2.63zM101.88 114.94h2.63v2.63h-2.63zM104.49 114.94h2.63v2.63h-2.63zM107.10 114.94h2.63v2.63h-2.63zM109.71 114.94h2.63v2.63h-2.63zM112.33 114.94h2.63v2.63h-2.63zM114.94 114.94h2.63v2.63h-2.63zM117.55 114.94h2.63v2.63h-2.63zM0.00 117.55h2.63v2.63h-2.63zM5.22 117.55h2.63v2.63h-2.63zM7.84 117.55h2.63v2.63h-2.63zM10.45 117.55h2.63v2.63h-2.63zM15.67 117.55h2.63v2.63h-2.63zM20.90 117.55h2.63v2.63h-2.63zM23.51 117.55h2.63v2.63h-2.63zM31.35 117.55h2.63v2.63h-2.63zM33.96 117.55h2.63v2.63h-2.63zM36.57 117.55h2.63v2.63h-2.63zM39.18 117.55h2.63v2.63h-2.63zM49.63 117.55h2.63v2.63h-2.63zM54.86 117.55h2.63v2.63h-2.63zM57.47 117.55h2.63v2.63h-2.63zM65.31 117.55h2.63v2.63h-2.63zM73.14 117.55h2.63v2.63h-2.63zM80.98 117.55h2.63v2.63h-2.63zM86.20 117.55h2.63v2.63h-2.63zM88.82 117.55h2.63v2.63h-2.63zM94.04 117.55h2.63v2.63h-2.63zM96.65 117.55h2.63v2.63h-2.63zM101.88 117.55h2.63v2.63h-2.63zM107.10 117.55h2.63v2.63h-2.63zM109.71 117.55h2.63v2.63h-2.63zM112.33 117.55h2.63v2.63h-2.63zM114.94 117.55h2.63v2.63h-2.63zM120.16 117.55h2.63v2.63h-2.63zM125.39 117.55h2.63v2.63h-2.63zM0.00 120.16h2.63v2.63h-2.63zM5.22 120.16h2.63v2.63h-2.63zM7.84 120.16h2.63v2.63h-2.63zM10.45 120.16h2.63v2.63h-2.63zM15.67 120.16h2.63v2.63h-2.63zM20.90 120.16h2.63v2.63h-2.63zM23.51 120.16h2.63v2.63h-2.63zM26.12 120.16h2.63v2.63h-2.63zM28.73 120.16h2.63v2.63h-2.63zM33.96 120.16h2.63v2.63h-2.63zM36.57 120.16h2.63v2.63h-2.63zM41.80 120.16h2.63v2.63h-2.63zM44.41 120.16h2.63v2.63h-2.63zM49.63 120.16h2.63v2.63h-2.63zM52.24 120.16h2.63v2.63h-2.63zM60.08 120.16h2.63v2.63h-2.63zM62.69 120.16h2.63v2.63h-2.63zM67.92 120.16h2.63v2.63h-2.63zM73.14 120.16h2.63v2.63h-2.63zM78.37 120.16h2.63v2.63h-2.63zM80.98 120.16h2.63v2.63h-2.63zM83.59 120.16h2.63v2.63h-2.63zM86.20 120.16h2.63v2.63h-2.63zM91.43 120.16h2.63v2.63h-2.63zM99.27 120.16h2.63v2.63h-2.63zM101.88 120.16h2.63v2.63h-2.63zM107.10 120.16h2.63v2.63h-2.63zM112.33 120.16h2.63v2.63h-2.63zM114.94 120.16h2.63v2.63h-2.63zM120.16 120.16h2.63v2.63h-2.63zM125.39 120.16h2.63v2.63h-2.63zM0.00 122.78h2.63v2.63h-2.63zM15.67 122.78h2.63v2.63h-2.63zM23.51 122.78h2.63v2.63h-2.63zM28.73 122.78h2.63v2.63h-2.63zM31.35 122.78h2.63v2.63h-2.63zM33.96 122.78h2.63v2.63h-2.63zM36.57 122.78h2.63v2.63h-2.63zM39.18 122.78h2.63v2.63h-2.63zM41.80 122.78h2.63v2.63h-2.63zM44.41 122.78h2.63v2.63h-2.63zM49.63 122.78h2.63v2.63h-2.63zM52.24 122.78h2.63v2.63h-2.63zM65.31 122.78h2.63v2.63h-2.63zM67.92 122.78h2.63v2.63h-2.63zM70.53 122.78h2.63v2.63h-2.63zM78.37 122.78h2.63v2.63h-2.63zM80.98 122.78h2.63v2.63h-2.63zM88.82 122.78h2.63v2.63h-2.63zM94.04 122.78h2.63v2.63h-2.63zM99.27 122.78h2.63v2.63h-2.63zM101.88 122.78h2.63v2.63h-2.63zM112.33 122.78h2.63v2.63h-2.63zM114.94 122.78h2.63v2.63h-2.63zM117.55 122.78h2.63v2.63h-2.63zM120.16 122.78h2.63v2.63h-2.63zM122.78 122.78h2.63v2.63h-2.63zM125.39 122.78h2.63v2.63h-2.63zM0.00 125.39h2.63v2.63h-2.63zM2.61 125.39h2.63v2.63h-2.63zM5.22 125.39h2.63v2.63h-2.63zM7.84 125.39h2.63v2.63h-2.63zM10.45 125.39h2.63v2.63h-2.63zM13.06 125.39h2.63v2.63h-2.63zM15.67 125.39h2.63v2.63h-2.63zM20.90 125.39h2.63v2.63h-2.63zM26.12 125.39h2.63v2.63h-2.63zM28.73 125.39h2.63v2.63h-2.63zM36.57 125.39h2.63v2.63h-2.63zM39.18 125.39h2.63v2.63h-2.63zM47.02 125.39h2.63v2.63h-2.63zM49.63 125.39h2.63v2.63h-2.63zM52.24 125.39h2.63v2.63h-2.63zM57.47 125.39h2.63v2.63h-2.63zM65.31 125.39h2.63v2.63h-2.63zM70.53 125.39h2.63v2.63h-2.63zM78.37 125.39h2.63v2.63h-2.63zM80.98 125.39h2.63v2.63h-2.63zM86.20 125.39h2.63v2.63h-2.63zM101.88 125.39h2.63v2.63h-2.63zM104.49 125.39h2.63v2.63h-2.63zM109.71 125.39h2.63v2.63h-2.63zM112.33 125.39h2.63v2.63h-2.63zM117.55 125.39h2.63v2.63h-2.63zM122.78 125.39h2.63v2.63h-2.63z" fill="#000"/></svg>
<div class="t" style="left:1121.7px;top:436.9px;font-size:13px;line-height:13px;letter-spacing:0.052px;"><span style="font-weight:700;color:#000">Общество с ограниченной ответственностью &quot;Кадр&quot;</span><span style="color:#000">, ИНН 7610010002, КПП 760401001, г.Ярославль, ул.Кирова, д.5,</span></div>
<div class="t" style="left:1121.7px;top:452.8px;font-size:13px;line-height:13px;letter-spacing:-0.150px;"><span style="color:#000">150000, тел. 40-64-00, р/с 40702810060007001105 в АО &quot;АЛЬФА-БАНК&quot; МОСКВА, БИК 044525593, к/с 30101810200000000593</span></div>
<div class="a" style="left:1119px;top:469px;width:751px;height:1px;background:#d6d6d6"></div>
<div class="t" style="left:1289px;top:474.42px;font-size:12.5px;line-height:12.5px;transform:scaleX(0.8954);transform-origin:0 0;"><span style="color:#808080">(организация-грузоотправитель, адрес, телефон, факс, банковские реквизиты)</span></div>
<div class="a" style="left:1118px;top:520px;width:855px;height:1px;background:#d6d6d6"></div>
<div class="t" style="left:1455.6px;top:523.72px;font-size:12.5px;line-height:12.5px;transform:scaleX(0.8974);transform-origin:0 0;"><span style="color:#808080">(структурное подразделение)</span></div>
<div class="t" style="left:1806px;top:527.5px;font-size:13px;line-height:13px;letter-spacing:-0.191px;"><span style="color:#808080">Вид деятельности по ОКДП</span></div>
<div class="t" style="left:1875px;top:445.3px;font-size:13px;line-height:13px;letter-spacing:-0.193px;"><span style="color:#808080">Форма по ОКУД</span></div>
<div class="t" style="left:1916px;top:477.6px;font-size:13px;line-height:13px;letter-spacing:-0.337px;"><span style="color:#808080">по ОКПО</span></div>
<div class="a" style="left:1973px;top:406px;width:80px;height:1px;background:#c3c3c3"></div>
<div class="a" style="left:1973px;top:431.5px;width:80px;height:1px;background:#c3c3c3"></div>
<div class="a" style="left:1973px;top:471.7px;width:80px;height:1px;background:#c3c3c3"></div>
<div class="a" style="left:1973px;top:496.4px;width:80px;height:1px;background:#c3c3c3"></div>
<div class="a" style="left:1973px;top:520.4px;width:80px;height:1px;background:#c3c3c3"></div>
<div class="a" style="left:1973px;top:544.7px;width:80px;height:1px;background:#c3c3c3"></div>
<div class="a" style="left:1973px;top:601.3px;width:80px;height:1px;background:#c3c3c3"></div>
<div class="a" style="left:1973px;top:657.4px;width:80px;height:1px;background:#c3c3c3"></div>
<div class="a" style="left:1973px;top:714.3px;width:80px;height:1px;background:#c3c3c3"></div>
<div class="a" style="left:1973px;top:406px;width:1px;height:308.3px;background:#c3c3c3"></div>
<div class="a" style="left:2052px;top:406px;width:1px;height:308.3px;background:#c3c3c3"></div>
<div class="t" style="left:2001.45px;top:412.9px;font-size:13px;line-height:13px;"><span style="color:#808080">Код</span></div>
<div class="t" style="left:1988.25px;top:445.3px;font-size:13px;line-height:13px;letter-spacing:-0.352px;"><span style="color:#808080">0330212</span></div>
<div class="t" style="left:1985px;top:477.6px;font-size:13px;line-height:13px;letter-spacing:-0.406px;"><span style="color:#808080">78179773</span></div>
<div class="t" style="left:1977.5px;top:567.9px;font-size:13px;line-height:13px;letter-spacing:-0.256px;"><span style="color:#808080">4578954517</span></div>
<div class="t" style="left:1985px;top:638.9px;font-size:13px;line-height:13px;letter-spacing:-0.406px;"><span style="color:#808080">78179773</span></div>
<div class="t" style="left:1977.5px;top:695.5px;font-size:13px;line-height:13px;letter-spacing:-0.256px;"><span style="color:#808080">4578954517</span></div>
<div class="t" style="left:1916px;top:567.9px;font-size:13px;line-height:13px;letter-spacing:-0.337px;"><span style="color:#808080">по ОКПО</span></div>
<div class="t" style="left:1916px;top:638.9px;font-size:13px;line-height:13px;letter-spacing:-0.337px;"><span style="color:#808080">по ОКПО</span></div>
<div class="t" style="left:1916px;top:695.5px;font-size:13px;line-height:13px;letter-spacing:-0.337px;"><span style="color:#808080">по ОКПО</span></div>
<div class="t" style="left:992.6px;top:566.6px;font-size:13px;line-height:13px;letter-spacing:-0.085px;"><span style="color:#808080">Грузополучатель</span></div>
<div class="t" style="left:1111.5px;top:549.5px;font-size:13px;line-height:13px;letter-spacing:0.008px;"><span style="font-weight:700;color:#000">Общество с ограниченной ответственностью &quot;ОСНОва&quot;</span><span style="color:#000">, ИНН 2145492416, КПП 214501001, 150000, Ярославская</span></div>
<div class="t" style="left:1111.5px;top:565.3px;font-size:13px;line-height:13px;letter-spacing:-0.152px;"><span style="color:#000">область, г. Ярославль, ул. Свободы, д. 41, р/с 12345678998765421321 в АО &quot;АЛЬФА-БАНК&quot; МОСКВА, БИК 044525593, к/с</span></div>
<div class="t" style="left:1111.5px;top:581px;font-size:13px;line-height:13px;letter-spacing:-0.242px;"><span style="color:#000">30101810200000000593</span></div>
<div class="a" style="left:1109px;top:599px;width:761px;height:1px;background:#d6d6d6"></div>
<div class="t" style="left:992.6px;top:623px;font-size:13px;line-height:13px;letter-spacing:-0.208px;"><span style="color:#808080">Поставщик</span></div>
<div class="t" style="left:1111.5px;top:607px;font-size:13px;line-height:13px;letter-spacing:0.010px;"><span style="font-weight:700;color:#000">Общество с ограниченной ответственностью &quot;Кадр&quot;</span><span style="color:#000">, ИНН 7610010002, КПП 760401001, 150060, Ярославская область,</span></div>
<div class="t" style="left:1111.5px;top:623px;font-size:13px;line-height:13px;letter-spacing:-0.107px;"><span style="color:#000">г. Ярославль, пр-кт Ленинградский, д. 101, тел. 40-64-00, р/с 40702810060007001105 в АО &quot;АЛЬФА-БАНК&quot; МОСКВА, БИК</span></div>
<div class="t" style="left:1111.5px;top:639px;font-size:13px;line-height:13px;letter-spacing:-0.127px;"><span style="color:#000">044525593, к/с 30101810200000000593</span></div>
<div class="a" style="left:1109px;top:655.5px;width:761px;height:1px;background:#d6d6d6"></div>
<div class="t" style="left:992.6px;top:679.8px;font-size:13px;line-height:13px;letter-spacing:-0.165px;"><span style="color:#808080">Плательщик</span></div>
<div class="t" style="left:1111.5px;top:663px;font-size:13px;line-height:13px;letter-spacing:0.008px;"><span style="font-weight:700;color:#000">Общество с ограниченной ответственностью &quot;ОСНОва&quot;</span><span style="color:#000">, ИНН 2145492416, КПП 214501001, 150000, Ярославская</span></div>
<div class="t" style="left:1111.5px;top:679px;font-size:13px;line-height:13px;letter-spacing:-0.152px;"><span style="color:#000">область, г. Ярославль, ул. Свободы, д. 41, р/с 12345678998765421321 в АО &quot;АЛЬФА-БАНК&quot; МОСКВА, БИК 044525593, к/с</span></div>
<div class="t" style="left:1111.5px;top:695px;font-size:13px;line-height:13px;letter-spacing:-0.242px;"><span style="color:#000">30101810200000000593</span></div>
<div class="a" style="left:1109px;top:712px;width:761px;height:1px;background:#d6d6d6"></div>
<div class="t" style="left:992.6px;top:720.5px;font-size:13px;line-height:13px;letter-spacing:-0.255px;"><span style="color:#808080">Основание:</span></div>
<div class="t" style="left:1111.5px;top:720.5px;font-size:13px;line-height:13px;"><span style="color:#000">-</span></div>
<div class="a" style="left:1109px;top:738px;width:761px;height:1px;background:#d6d6d6"></div>
<div class="t" style="left:1370px;top:743.42px;font-size:12.5px;line-height:12.5px;transform:scaleX(0.9045);transform-origin:0 0;"><span style="color:#808080">(договор, заказ-наряд)</span></div>
<div class="a" style="left:1870px;top:714.3px;width:183px;height:1px;background:#c3c3c3"></div>
<div class="a" style="left:1870px;top:740px;width:183px;height:1px;background:#c3c3c3"></div>
<div class="a" style="left:1870px;top:765px;width:183px;height:1px;background:#c3c3c3"></div>
<div class="a" style="left:1870px;top:789.5px;width:183px;height:1px;background:#c3c3c3"></div>
<div class="a" style="left:1870px;top:814.6px;width:183px;height:1px;background:#c3c3c3"></div>
<div class="a" style="left:1973px;top:838.5px;width:80px;height:1px;background:#c3c3c3"></div>
<div class="a" style="left:1870px;top:714.3px;width:1px;height:100.3px;background:#c3c3c3"></div>
<div class="a" style="left:1973px;top:714.3px;width:1px;height:124.2px;background:#c3c3c3"></div>
<div class="a" style="left:2052px;top:714.3px;width:1px;height:124.2px;background:#c3c3c3"></div>
<div class="t" style="left:1932.5px;top:721px;font-size:13px;line-height:13px;letter-spacing:-0.327px;"><span style="color:#808080">номер</span></div>
<div class="t" style="left:1941.5px;top:746.7px;font-size:13px;line-height:13px;letter-spacing:-0.023px;"><span style="color:#808080">дата</span></div>
<div class="t" style="left:1932.5px;top:771px;font-size:13px;line-height:13px;letter-spacing:-0.327px;"><span style="color:#808080">номер</span></div>
<div class="t" style="left:1941.5px;top:796.5px;font-size:13px;line-height:13px;letter-spacing:-0.023px;"><span style="color:#808080">дата</span></div>
<div class="t" style="left:1887px;top:820.8px;font-size:13px;line-height:13px;letter-spacing:-0.278px;"><span style="color:#808080">Вид операции</span></div>
<div class="t" style="left:1718.3px;top:772.3px;font-size:13px;line-height:13px;letter-spacing:-0.161px;"><span style="color:#808080">Транспортная накладная</span></div>
<div class="a" style="left:1438.3px;top:765.6px;width:227.7px;height:1px;background:#c3c3c3"></div>
<div class="a" style="left:1438.3px;top:789px;width:227.7px;height:1px;background:#c3c3c3"></div>
<div class="a" style="left:1438.3px;top:814px;width:227.7px;height:1px;background:#c3c3c3"></div>
<div class="a" style="left:1438.3px;top:765.6px;width:1px;height:48.9px;background:#c3c3c3"></div>
<div class="a" style="left:1551.2px;top:765.6px;width:1px;height:48.9px;background:#c3c3c3"></div>
<div class="a" style="left:1665.2px;top:765.6px;width:1px;height:48.9px;background:#c3c3c3"></div>
<div class="t" style="left:1443.5px;top:771.5px;font-size:13px;line-height:13px;letter-spacing:-0.287px;"><span style="color:#808080">Номер документа</span></div>
<div class="t" style="left:1555.3px;top:771.5px;font-size:13px;line-height:13px;letter-spacing:-0.201px;"><span style="color:#808080">Дата составления</span></div>
<div class="t" style="left:1253px;top:795.43px;font-size:16.5px;line-height:16.5px;letter-spacing:0.450px;"><span style="font-weight:700;color:#000">Товарная накладная</span></div>
<div class="t" style="left:1485.82px;top:795.43px;font-size:16.5px;line-height:16.5px;"><span style="font-weight:700;color:#000">77</span></div>
<div class="t" style="left:1568.2px;top:795.03px;font-size:16.5px;line-height:16.5px;letter-spacing:-0.151px;"><span style="color:#000">01.11.2024</span></div>
<div class="a" style="left:988.4px;top:851.4px;width:1064.9px;height:1px;background:#c3c3c3"></div>
<div class="a" style="left:1011.6px;top:892.5px;width:481.8px;height:1px;background:#c3c3c3"></div>
<div class="a" style="left:1544.5px;top:892.5px;width:103.8px;height:1px;background:#c3c3c3"></div>
<div class="a" style="left:1876.2px;top:892.5px;width:110.2px;height:1px;background:#c3c3c3"></div>
<div class="a" style="left:988.4px;top:949.3px;width:1064.9px;height:1px;background:#c3c3c3"></div>
<div class="a" style="left:988.4px;top:974.5px;width:1064.9px;height:1px;background:#c3c3c3"></div>
<div class="a" style="left:988.4px;top:1015.2px;width:1064.9px;height:1px;background:#c3c3c3"></div>
<div class="a" style="left:988.4px;top:1055.4px;width:1064.9px;height:1px;background:#c3c3c3"></div>
<div class="a" style="left:988.4px;top:1079.5px;width:1064.9px;height:1px;background:#c3c3c3"></div>
<div class="a" style="left:988.4px;top:1104.1px;width:1064.9px;height:1px;background:#c3c3c3"></div>
<div class="a" style="left:988.4px;top:1078.5px;width:1064.9px;height:1px;background:#c3c3c3"></div>
<div class="a" style="left:1596.7px;top:1128px;width:456.6px;height:1px;background:#c3c3c3"></div>
<div class="a" style="left:988.4px;top:851.4px;width:1px;height:252.7px;background:#c3c3c3"></div>
<div class="a" style="left:1011.6px;top:851.4px;width:1px;height:252.7px;background:#c3c3c3"></div>
<div class="a" style="left:1306.4px;top:892.5px;width:1px;height:211.6px;background:#c3c3c3"></div>
<div class="a" style="left:1388.5px;top:851.4px;width:1px;height:252.7px;background:#c3c3c3"></div>
<div class="a" style="left:1441.3px;top:892.5px;width:1px;height:211.6px;background:#c3c3c3"></div>
<div class="a" style="left:1493.4px;top:851.4px;width:1px;height:252.7px;background:#c3c3c3"></div>
<div class="a" style="left:1544.5px;top:851.4px;width:1px;height:252.7px;background:#c3c3c3"></div>
<div class="a" style="left:1596.7px;top:892.5px;width:1px;height:211.6px;background:#c3c3c3"></div>
<div class="a" style="left:1596.7px;top:1104.1px;width:1px;height:23.9px;background:#c3c3c3"></div>
<div class="a" style="left:1648.3px;top:851.4px;width:1px;height:252.7px;background:#c3c3c3"></div>
<div class="a" style="left:1648.3px;top:1104.1px;width:1px;height:23.9px;background:#c3c3c3"></div>
<div class="a" style="left:1700.5px;top:851.4px;width:1px;height:252.7px;background:#c3c3c3"></div>
<div class="a" style="left:1700.5px;top:1104.1px;width:1px;height:23.9px;background:#c3c3c3"></div>
<div class="a" style="left:1753.5px;top:851.4px;width:1px;height:252.7px;background:#c3c3c3"></div>
<div class="a" style="left:1753.5px;top:1104.1px;width:1px;height:23.9px;background:#c3c3c3"></div>
<div class="a" style="left:1811.3px;top:851.4px;width:1px;height:252.7px;background:#c3c3c3"></div>
<div class="a" style="left:1811.3px;top:1104.1px;width:1px;height:23.9px;background:#c3c3c3"></div>
<div class="a" style="left:1876.2px;top:851.4px;width:1px;height:252.7px;background:#c3c3c3"></div>
<div class="a" style="left:1876.2px;top:1104.1px;width:1px;height:23.9px;background:#c3c3c3"></div>
<div class="a" style="left:1928.3px;top:892.5px;width:1px;height:211.6px;background:#c3c3c3"></div>
<div class="a" style="left:1928.3px;top:1104.1px;width:1px;height:23.9px;background:#c3c3c3"></div>
<div class="a" style="left:1986.4px;top:851.4px;width:1px;height:252.7px;background:#c3c3c3"></div>
<div class="a" style="left:1986.4px;top:1104.1px;width:1px;height:23.9px;background:#c3c3c3"></div>
<div class="a" style="left:2052.3px;top:851.4px;width:1px;height:252.7px;background:#c3c3c3"></div>
<div class="a" style="left:2052.3px;top:1104.1px;width:1px;height:23.9px;background:#c3c3c3"></div>
<div class="t" style="left:993.3px;top:859.42px;font-size:12.5px;line-height:12.5px;"><span style="color:#808080">№</span></div>
<div class="t" style="left:994.88px;top:875.22px;font-size:12.5px;line-height:12.5px;"><span style="color:#808080">п/</span></div>
<div class="t" style="left:996.62px;top:891.02px;font-size:12.5px;line-height:12.5px;"><span style="color:#808080">п</span></div>
<div class="t" style="left:1183.04px;top:859.42px;font-size:12.5px;line-height:12.5px;"><span style="color:#808080">Товар</span></div>
<div class="t" style="left:1415.64px;top:859.42px;font-size:12.5px;line-height:12.5px;"><span style="color:#808080">Единица</span></div>
<div class="t" style="left:1409.54px;top:875.22px;font-size:12.5px;line-height:12.5px;"><span style="color:#808080">измерения</span></div>
<div class="t" style="left:1507.64px;top:859.42px;font-size:12.5px;line-height:12.5px;"><span style="color:#808080">Вид</span></div>
<div class="t" style="left:1506.88px;top:875.22px;font-size:12.5px;line-height:12.5px;"><span style="color:#808080">упа-</span></div>
<div class="t" style="left:1503.12px;top:891.02px;font-size:12.5px;line-height:12.5px;"><span style="color:#808080">ковки</span></div>
<div class="t" style="left:1562.84px;top:859.42px;font-size:12.5px;line-height:12.5px;"><span style="color:#808080">Количество</span></div>
<div class="t" style="left:1655.92px;top:859.42px;font-size:12.5px;line-height:12.5px;"><span style="color:#808080">Масса</span></div>
<div class="t" style="left:1655.16px;top:875.22px;font-size:12.5px;line-height:12.5px;"><span style="color:#808080">брутто</span></div>
<div class="t" style="left:1710.8px;top:859.42px;font-size:12.5px;line-height:12.5px;"><span style="color:#808080">Коли-</span></div>
<div class="t" style="left:1707.55px;top:875.22px;font-size:12.5px;line-height:12.5px;"><span style="color:#808080">чество</span></div>
<div class="t" style="left:1707.42px;top:891.02px;font-size:12.5px;line-height:12.5px;"><span style="color:#808080">(масса</span></div>
<div class="t" style="left:1709.07px;top:906.82px;font-size:12.5px;line-height:12.5px;"><span style="color:#808080">нетто)</span></div>
<div class="t" style="left:1765.64px;top:859.42px;font-size:12.5px;line-height:12.5px;"><span style="color:#808080">Цена,</span></div>
<div class="t" style="left:1770.48px;top:875.22px;font-size:12.5px;line-height:12.5px;"><span style="color:#808080">руб.</span></div>
<div class="t" style="left:1771px;top:891.02px;font-size:12.5px;line-height:12.5px;"><span style="color:#808080">коп.</span></div>
<div class="t" style="left:1824.11px;top:859.42px;font-size:12.5px;line-height:12.5px;"><span style="color:#808080">Сумма</span></div>
<div class="t" style="left:1820.36px;top:875.22px;font-size:12.5px;line-height:12.5px;"><span style="color:#808080">без уче-</span></div>
<div class="t" style="left:1820.75px;top:891.02px;font-size:12.5px;line-height:12.5px;"><span style="color:#808080">та НДС,</span></div>
<div class="t" style="left:1818.7px;top:906.82px;font-size:12.5px;line-height:12.5px;"><span style="color:#808080">руб. коп.</span></div>
<div class="t" style="left:1918.04px;top:859.42px;font-size:12.5px;line-height:12.5px;"><span style="color:#808080">НДС</span></div>
<div class="t" style="left:1994.85px;top:859.42px;font-size:12.5px;line-height:12.5px;"><span style="color:#808080">Сумма с</span></div>
<div class="t" style="left:1999.14px;top:875.22px;font-size:12.5px;line-height:12.5px;"><span style="color:#808080">учетом</span></div>
<div class="t" style="left:2004.35px;top:891.02px;font-size:12.5px;line-height:12.5px;"><span style="color:#808080">НДС,</span></div>
<div class="t" style="left:1994.3px;top:906.82px;font-size:12.5px;line-height:12.5px;"><span style="color:#808080">руб. коп.</span></div>
<div class="t" style="left:1115px;top:900.92px;font-size:12.5px;line-height:12.5px;"><span style="color:#808080">наименование,</span></div>
<div class="t" style="left:1096.26px;top:916.72px;font-size:12.5px;line-height:12.5px;"><span style="color:#808080">характеристика, сорт,</span></div>
<div class="t" style="left:1114.71px;top:932.52px;font-size:12.5px;line-height:12.5px;"><span style="color:#808080">артикул товара</span></div>
<div class="t" style="left:1336.82px;top:900.92px;font-size:12.5px;line-height:12.5px;"><span style="color:#808080">Код</span></div>
<div class="t" style="left:1394.63px;top:900.92px;font-size:12.5px;line-height:12.5px;"><span style="color:#808080">наиме-</span></div>
<div class="t" style="left:1399.17px;top:916.72px;font-size:12.5px;line-height:12.5px;"><span style="color:#808080">нова-</span></div>
<div class="t" style="left:1404.48px;top:932.52px;font-size:12.5px;line-height:12.5px;"><span style="color:#808080">ние</span></div>
<div class="t" style="left:1457.56px;top:900.92px;font-size:12.5px;line-height:12.5px;"><span style="color:#808080">код</span></div>
<div class="t" style="left:1460.49px;top:916.72px;font-size:12.5px;line-height:12.5px;"><span style="color:#808080">по</span></div>
<div class="t" style="left:1450.19px;top:932.52px;font-size:12.5px;line-height:12.5px;"><span style="color:#808080">ОКЕИ</span></div>
<div class="t" style="left:1567.28px;top:900.92px;font-size:12.5px;line-height:12.5px;"><span style="color:#808080">в</span></div>
<div class="t" style="left:1552.39px;top:916.72px;font-size:12.5px;line-height:12.5px;"><span style="color:#808080">одном</span></div>
<div class="t" style="left:1553.43px;top:932.52px;font-size:12.5px;line-height:12.5px;"><span style="color:#808080">месте</span></div>
<div class="t" style="left:1607.7px;top:900.92px;font-size:12.5px;line-height:12.5px;"><span style="color:#808080">мест,</span></div>
<div class="t" style="left:1608.69px;top:916.72px;font-size:12.5px;line-height:12.5px;"><span style="color:#808080">штук</span></div>
<div class="t" style="left:1887.45px;top:900.92px;font-size:12.5px;line-height:12.5px;"><span style="color:#808080">став-</span></div>
<div class="t" style="left:1894.17px;top:916.72px;font-size:12.5px;line-height:12.5px;"><span style="color:#808080">ка,</span></div>
<div class="t" style="left:1896.69px;top:932.52px;font-size:12.5px;line-height:12.5px;"><span style="color:#808080">%</span></div>
<div class="t" style="left:1937.36px;top:900.92px;font-size:12.5px;line-height:12.5px;"><span style="color:#808080">сумма,</span></div>
<div class="t" style="left:1945.43px;top:916.72px;font-size:12.5px;line-height:12.5px;"><span style="color:#808080">руб.</span></div>
<div class="t" style="left:1945.95px;top:932.52px;font-size:12.5px;line-height:12.5px;"><span style="color:#808080">коп.</span></div>
<div class="t" style="left:996.52px;top:956.92px;font-size:12.5px;line-height:12.5px;"><span style="color:#808080">1</span></div>
<div class="t" style="left:1155.52px;top:956.92px;font-size:12.5px;line-height:12.5px;"><span style="color:#808080">2</span></div>
<div class="t" style="left:1343.97px;top:956.92px;font-size:12.5px;line-height:12.5px;"><span style="color:#808080">3</span></div>
<div class="t" style="left:1411.42px;top:956.92px;font-size:12.5px;line-height:12.5px;"><span style="color:#808080">4</span></div>
<div class="t" style="left:1463.87px;top:956.92px;font-size:12.5px;line-height:12.5px;"><span style="color:#808080">5</span></div>
<div class="t" style="left:1515.47px;top:956.92px;font-size:12.5px;line-height:12.5px;"><span style="color:#808080">6</span></div>
<div class="t" style="left:1567.12px;top:956.92px;font-size:12.5px;line-height:12.5px;"><span style="color:#808080">7</span></div>
<div class="t" style="left:1619.02px;top:956.92px;font-size:12.5px;line-height:12.5px;"><span style="color:#808080">8</span></div>
<div class="t" style="left:1670.92px;top:956.92px;font-size:12.5px;line-height:12.5px;"><span style="color:#808080">9</span></div>
<div class="t" style="left:1720.05px;top:956.92px;font-size:12.5px;line-height:12.5px;"><span style="color:#808080">10</span></div>
<div class="t" style="left:1775.91px;top:956.92px;font-size:12.5px;line-height:12.5px;"><span style="color:#808080">11</span></div>
<div class="t" style="left:1836.8px;top:956.92px;font-size:12.5px;line-height:12.5px;"><span style="color:#808080">12</span></div>
<div class="t" style="left:1895.3px;top:956.92px;font-size:12.5px;line-height:12.5px;"><span style="color:#808080">13</span></div>
<div class="t" style="left:1950.4px;top:956.92px;font-size:12.5px;line-height:12.5px;"><span style="color:#808080">14</span></div>
<div class="t" style="left:2012.4px;top:956.92px;font-size:12.5px;line-height:12.5px;"><span style="color:#808080">15</span></div>
<div class="t" style="left:996.52px;top:982.92px;font-size:12.5px;line-height:12.5px;"><span style="color:#000">1</span></div>
<div class="t" style="left:1015.8px;top:982.92px;font-size:12.5px;line-height:12.5px;"><span style="color:#000">Жесткий диск HDD 1Тб Western Digital Caviar</span></div>
<div class="t" style="left:1015.8px;top:998.52px;font-size:12.5px;line-height:12.5px;"><span style="color:#000">Blue WD10EZEX</span></div>
<div class="t" style="left:1318.95px;top:982.92px;font-size:12.5px;line-height:12.5px;"><span style="color:#000">X2707068</span></div>
<div class="t" style="left:1407.02px;top:982.92px;font-size:12.5px;line-height:12.5px;"><span style="color:#000">шт</span></div>
<div class="t" style="left:1456.92px;top:982.92px;font-size:12.5px;line-height:12.5px;"><span style="color:#000">796</span></div>
<div class="t" style="left:1516.87px;top:982.92px;font-size:12.5px;line-height:12.5px;"><span style="color:#000">-</span></div>
<div class="t" style="left:1588.04px;top:982.92px;font-size:12.5px;line-height:12.5px;"><span style="color:#000">-</span></div>
<div class="t" style="left:1639.64px;top:982.92px;font-size:12.5px;line-height:12.5px;"><span style="color:#000">-</span></div>
<div class="t" style="left:1691.84px;top:982.92px;font-size:12.5px;line-height:12.5px;"><span style="color:#000">-</span></div>
<div class="t" style="left:1742.05px;top:982.92px;font-size:12.5px;line-height:12.5px;"><span style="color:#000">3</span></div>
<div class="t" style="left:1758.14px;top:982.92px;font-size:12.5px;line-height:12.5px;"><span style="color:#000">3 047.73</span></div>
<div class="t" style="left:1823.04px;top:982.92px;font-size:12.5px;line-height:12.5px;"><span style="color:#000">9 143.20</span></div>
<div class="t" style="left:1889.74px;top:982.92px;font-size:12.5px;line-height:12.5px;"><span style="color:#000">20%</span></div>
<div class="t" style="left:1933.24px;top:982.92px;font-size:12.5px;line-height:12.5px;"><span style="color:#000">1 828.64</span></div>
<div class="t" style="left:1992.19px;top:982.92px;font-size:12.5px;line-height:12.5px;"><span style="color:#000">10 971.84</span></div>
<div class="t" style="left:996.52px;top:1022.72px;font-size:12.5px;line-height:12.5px;"><span style="color:#000">2</span></div>
<div class="t" style="left:1015.8px;top:1022.72px;font-size:12.5px;line-height:12.5px;"><span style="color:#000">Мышь &lt;USB&gt; A4Tech Bloody X`Glides V4M game</span></div>
<div class="t" style="left:1015.8px;top:1038.32px;font-size:12.5px;line-height:12.5px;"><span style="color:#000">mouse</span></div>
<div class="t" style="left:1318.95px;top:1022.72px;font-size:12.5px;line-height:12.5px;"><span style="color:#000">X3220417</span></div>
<div class="t" style="left:1407.02px;top:1022.72px;font-size:12.5px;line-height:12.5px;"><span style="color:#000">шт</span></div>
<div class="t" style="left:1456.92px;top:1022.72px;font-size:12.5px;line-height:12.5px;"><span style="color:#000">796</span></div>
<div class="t" style="left:1516.87px;top:1022.72px;font-size:12.5px;line-height:12.5px;"><span style="color:#000">-</span></div>
<div class="t" style="left:1588.04px;top:1022.72px;font-size:12.5px;line-height:12.5px;"><span style="color:#000">-</span></div>
<div class="t" style="left:1639.64px;top:1022.72px;font-size:12.5px;line-height:12.5px;"><span style="color:#000">-</span></div>
<div class="t" style="left:1691.84px;top:1022.72px;font-size:12.5px;line-height:12.5px;"><span style="color:#000">-</span></div>
<div class="t" style="left:1742.05px;top:1022.72px;font-size:12.5px;line-height:12.5px;"><span style="color:#000">4</span></div>
<div class="t" style="left:1768.57px;top:1022.72px;font-size:12.5px;line-height:12.5px;"><span style="color:#000">927.93</span></div>
<div class="t" style="left:1823.97px;top:1022.72px;font-size:12.5px;line-height:12.5px;"><span style="color:#000">3 711.72</span></div>
<div class="t" style="left:1889.74px;top:1022.72px;font-size:12.5px;line-height:12.5px;"><span style="color:#000">20%</span></div>
<div class="t" style="left:1943.67px;top:1022.72px;font-size:12.5px;line-height:12.5px;"><span style="color:#000">742.34</span></div>
<div class="t" style="left:1999.14px;top:1022.72px;font-size:12.5px;line-height:12.5px;"><span style="color:#000">4 454.06</span></div>
<div class="t" style="left:996.52px;top:1063.42px;font-size:12.5px;line-height:12.5px;"><span style="color:#000">3</span></div>
<div class="t" style="left:1015.8px;top:1063.42px;font-size:12.5px;line-height:12.5px;"><span style="color:#000">&quot;Senseye LED&quot; 21&#x27;</span></div>
<div class="t" style="left:1322.43px;top:1063.42px;font-size:12.5px;line-height:12.5px;"><span style="color:#000">X999592</span></div>
<div class="t" style="left:1407.02px;top:1063.42px;font-size:12.5px;line-height:12.5px;"><span style="color:#000">шт</span></div>
<div class="t" style="left:1456.92px;top:1063.42px;font-size:12.5px;line-height:12.5px;"><span style="color:#000">796</span></div>
<div class="t" style="left:1516.87px;top:1063.42px;font-size:12.5px;line-height:12.5px;"><span style="color:#000">-</span></div>
<div class="t" style="left:1588.04px;top:1063.42px;font-size:12.5px;line-height:12.5px;"><span style="color:#000">-</span></div>
<div class="t" style="left:1639.64px;top:1063.42px;font-size:12.5px;line-height:12.5px;"><span style="color:#000">-</span></div>
<div class="t" style="left:1691.84px;top:1063.42px;font-size:12.5px;line-height:12.5px;"><span style="color:#000">-</span></div>
<div class="t" style="left:1742.05px;top:1063.42px;font-size:12.5px;line-height:12.5px;"><span style="color:#000">2</span></div>
<div class="t" style="left:1758.14px;top:1063.42px;font-size:12.5px;line-height:12.5px;"><span style="color:#000">6 103.71</span></div>
<div class="t" style="left:1816.09px;top:1063.42px;font-size:12.5px;line-height:12.5px;"><span style="color:#000">12 207.42</span></div>
<div class="t" style="left:1889.74px;top:1063.42px;font-size:12.5px;line-height:12.5px;"><span style="color:#000">20%</span></div>
<div class="t" style="left:1933.24px;top:1063.42px;font-size:12.5px;line-height:12.5px;"><span style="color:#000">2 441.49</span></div>
<div class="t" style="left:1992.19px;top:1063.42px;font-size:12.5px;line-height:12.5px;"><span style="color:#000">14 648.91</span></div>
<div class="t" style="left:996.52px;top:1087.92px;font-size:12.5px;line-height:12.5px;"><span style="color:#000">4</span></div>
<div class="t" style="left:1015.8px;top:1087.92px;font-size:12.5px;line-height:12.5px;"><span style="color:#000">Лазерное МФУ HP LaserJet Ultra MFP M134a</span></div>
<div class="t" style="left:1318.95px;top:1087.92px;font-size:12.5px;line-height:12.5px;"><span style="color:#000">X9303649</span></div>
<div class="t" style="left:1407.02px;top:1087.92px;font-size:12.5px;line-height:12.5px;"><span style="color:#000">шт</span></div>
<div class="t" style="left:1456.92px;top:1087.92px;font-size:12.5px;line-height:12.5px;"><span style="color:#000">796</span></div>
<div class="t" style="left:1516.87px;top:1087.92px;font-size:12.5px;line-height:12.5px;"><span style="color:#000">-</span></div>
<div class="t" style="left:1588.04px;top:1087.92px;font-size:12.5px;line-height:12.5px;"><span style="color:#000">-</span></div>
<div class="t" style="left:1639.64px;top:1087.92px;font-size:12.5px;line-height:12.5px;"><span style="color:#000">-</span></div>
<div class="t" style="left:1691.84px;top:1087.92px;font-size:12.5px;line-height:12.5px;"><span style="color:#000">-</span></div>
<div class="t" style="left:1742.05px;top:1087.92px;font-size:12.5px;line-height:12.5px;"><span style="color:#000">3</span></div>
<div class="t" style="left:1758.14px;top:1087.92px;font-size:12.5px;line-height:12.5px;"><span style="color:#000">1 072.27</span></div>
<div class="t" style="left:1823.04px;top:1087.92px;font-size:12.5px;line-height:12.5px;"><span style="color:#000">3 216.82</span></div>
<div class="t" style="left:1889.74px;top:1087.92px;font-size:12.5px;line-height:12.5px;"><span style="color:#000">20%</span></div>
<div class="t" style="left:1943.67px;top:1087.92px;font-size:12.5px;line-height:12.5px;"><span style="color:#000">643.37</span></div>
<div class="t" style="left:1999.14px;top:1087.92px;font-size:12.5px;line-height:12.5px;"><span style="color:#000">3 860.19</span></div>
<div class="t" style="left:1476.72px;top:1112.22px;font-size:12.5px;line-height:12.5px;"><span style="color:#000">Всего по накладной</span></div>
<div class="t" style="left:1639.64px;top:1112.22px;font-size:12.5px;line-height:12.5px;"><span style="color:#000">-</span></div>
<div class="t" style="left:1691.84px;top:1112.22px;font-size:12.5px;line-height:12.5px;"><span style="color:#000">-</span></div>
<div class="t" style="left:1735.1px;top:1112.22px;font-size:12.5px;line-height:12.5px;"><span style="color:#000">12</span></div>
<div class="t" style="left:1779.28px;top:1112.22px;font-size:12.5px;line-height:12.5px;"><span style="color:#000">x</span></div>
<div class="t" style="left:1816.09px;top:1112.22px;font-size:12.5px;line-height:12.5px;"><span style="color:#000">28 279.16</span></div>
<div class="t" style="left:1899.12px;top:1112.22px;font-size:12.5px;line-height:12.5px;"><span style="color:#000">x</span></div>
<div class="t" style="left:1933.24px;top:1112.22px;font-size:12.5px;line-height:12.5px;"><span style="color:#000">5 655.84</span></div>
<div class="t" style="left:1992.19px;top:1112.22px;font-size:12.5px;line-height:12.5px;"><span style="color:#000">33 935.00</span></div>
<div class="t" style="left:992px;top:1143.5px;font-size:13px;line-height:13px;letter-spacing:-0.132px;"><span style="color:#808080">Товарная накладная имеет приложение на</span></div>
<div class="a" style="left:1251px;top:1168px;width:319px;height:1px;background:#d6d6d6"></div>
<div class="t" style="left:1574px;top:1143.5px;font-size:13px;line-height:13px;letter-spacing:-0.177px;"><span style="color:#808080">листах</span></div>
<div class="t" style="left:992px;top:1180.6px;font-size:13px;line-height:13px;letter-spacing:-0.158px;"><span style="color:#808080">и содержит</span></div>
<div class="t" style="left:1073.3px;top:1180.6px;font-size:13px;line-height:13px;letter-spacing:-0.244px;"><span style="color:#000">Четыре</span></div>
<div class="a" style="left:1071px;top:1204.5px;width:449px;height:1px;background:#d6d6d6"></div>
<div class="t" style="left:1523.6px;top:1180.6px;font-size:13px;line-height:13px;letter-spacing:-0.146px;"><span style="color:#808080">порядковых номеров записей</span></div>
<div class="t" style="left:1316.3px;top:1218px;font-size:13px;line-height:13px;letter-spacing:-0.061px;"><span style="color:#808080">Масса груза (нетто)</span></div>
<div class="a" style="left:1452px;top:1242px;width:454px;height:1px;background:#d6d6d6"></div>
<div class="a" style="left:1906px;top:1205.5px;width:147px;height:1px;background:#c3c3c3"></div>
<div class="a" style="left:1906px;top:1205.5px;width:1px;height:66.5px;background:#c3c3c3"></div>
<div class="a" style="left:2052px;top:1205.5px;width:1px;height:66.5px;background:#c3c3c3"></div>
<div class="a" style="left:1906px;top:1242px;width:147px;height:1px;background:#c3c3c3"></div>
<div class="t" style="left:992px;top:1254px;font-size:13px;line-height:13px;letter-spacing:0.075px;"><span style="color:#808080">Всего мест</span></div>
<div class="t" style="left:1316.3px;top:1254px;font-size:13px;line-height:13px;letter-spacing:-0.098px;"><span style="color:#808080">Масса груза (брутто)</span></div>
<div class="a" style="left:1759px;top:1226.7px;width:283.4px;height:31px;border:1.4px solid #6b66dc;border-radius:7px"></div>
<div class="a" style="left:1826px;top:1219px;width:210px;height:12px;background:#fff"></div>
<div class="t" style="left:1834.8px;top:1222.07px;font-size:11.5px;line-height:11.5px;transform:scaleX(0.8799);transform-origin:0 0;"><span style="color:#6b66dc">Оператор ЭДО ООО &quot;Компания &quot;Тензор&quot;</span></div>
<div class="t" style="left:1768px;top:1234.6px;font-size:15px;line-height:15px;transform:scaleX(0.8122);transform-origin:0 0;"><span style="color:#6b66dc">ОТПРАВЛЕНО</span></div>
<div class="t" style="left:1859px;top:1234.6px;font-size:15px;line-height:15px;transform:scaleX(0.7996);transform-origin:0 0;"><span style="font-weight:700;color:#6b66dc">ООО &quot;КАДР&quot;,</span></div>
<div class="t" style="left:1940px;top:1234.6px;font-size:15px;line-height:15px;transform:scaleX(0.7948);transform-origin:0 0;"><span style="color:#6b66dc">Евграфова Е.Е.</span></div>
<div class="a" style="left:958px;top:1263.5px;width:1125px;height:8.5px;background:linear-gradient(to bottom,rgba(0,0,0,0.03),rgba(0,0,0,0.08))"></div>
<div class="a" style="left:2083px;top:0px;width:69px;height:1272px;background:#f7f7f7"></div>
<div class="a" style="left:2083px;top:0px;width:1px;height:1272px;background:#e4e4e4"></div>
<div class="a" style="left:2150px;top:0px;width:2px;height:1272px;background:#dcdcdc"></div>
<div class="a" style="left:2097.5px;top:10px;width:40px;height:40px;background:#ececec;border-radius:50%"></div>
<svg class="a" style="left:2107px;top:20px;" width="21" height="21" viewBox="0 0 21 21"><path d="M3.6 2.6 L17.7 16.3 M17.7 2.6 L3.6 16.3" stroke="#3c4660" stroke-width="1.4"/></svg>
<svg class="a" style="left:2105px;top:64px;" width="26" height="26" viewBox="0 0 26 26"><rect x="8" y="2.3" width="12.7" height="13.1" fill="none" stroke="#56627f" stroke-width="1.3"/><rect x="4" y="9" width="13" height="12.7" fill="#fff" stroke="#56627f" stroke-width="1.3"/></svg>
<div class="t" style="left:2104.7px;top:114.19px;font-size:19.5px;line-height:19.5px;letter-spacing:-1.794px;"><span style="font-weight:700;color:#cfcfcf">ДК</span></div>
<svg class="a" style="left:2103px;top:157px;" width="29" height="28" viewBox="0 0 29 28"><path d="M8.7 3 H19.3 L20.7 4.5 V7.5 H8.7 Z" fill="#56627f"/><rect x="10.7" y="4.4" width="6.5" height="1.8" fill="#f7f7f7"/><path d="M5.5 11.3 L8.5 7.2 H21.5 L25.5 11.3 Z" fill="#56627f"/><rect x="2" y="13" width="25" height="7.5" rx="1.6" fill="#56627f"/><path d="M5 20 H24.7 V26.7 H5 Z" fill="#56627f"/><path d="M10 16 H19.3 L23.3 24 H6.7 Z" fill="#f7f7f7"/><path d="M10.6 17.2 H18.8 V18.6 H10.6 Z M9.8 19.7 H19.6 V21.1 H9.8 Z" fill="#56627f"/><circle cx="5.2" cy="15.2" r="0.9" fill="#f7f7f7"/></svg>
<svg class="a" style="left:2103px;top:205px;" width="29" height="28" viewBox="0 0 29 28"><path d="M16 9 L26.7 11.7 L22.7 26.3 L12 23.3 L12.6 20.6" fill="none" stroke="#56627f" stroke-width="1.6" stroke-linejoin="round"/><path d="M2 5 L14.7 2.3 L18.7 17.7 L6.3 21 Z" fill="#f7f7f7" stroke="#56627f" stroke-width="1.6" stroke-linejoin="round"/></svg>
<svg class="a" style="left:2104px;top:254.2px;" width="28" height="26" viewBox="0 0 28 26"><rect x="0" y="0" width="1" height="24.4" fill="#6f7b98"/><rect x="2.4" y="0" width="2.6" height="17" fill="#6f7b98"/><rect x="6.2" y="0" width="1" height="17" fill="#6f7b98"/><rect x="8.2" y="0" width="1" height="17" fill="#6f7b98"/><rect x="12" y="0" width="2.6" height="17" fill="#6f7b98"/><rect x="16.6" y="0" width="1" height="17" fill="#6f7b98"/><rect x="20" y="0" width="2.6" height="17" fill="#6f7b98"/><rect x="24.2" y="0" width="1" height="17" fill="#6f7b98"/><rect x="26.4" y="0" width="1" height="24.4" fill="#6f7b98"/><text x="13.7" y="24.2" font-size="7.6" text-anchor="middle" fill="#6f7b98" font-family="Liberation Sans" font-weight="700" transform="scale(1,1)">462 07</text></svg>
<svg class="a" style="left:2105px;top:302px;" width="25" height="24" viewBox="0 0 25 24"><path d="M1.05 4.98 L24.50 22.42 L24.70 22.18 L3.35 2.22 Z" fill="#c4161c"/><path d="M3.35 22.38 L24.70 2.52 L24.50 2.28 L1.05 19.62 Z" fill="#c4161c"/><circle cx="2.3" cy="3.6" r="1.8" fill="#c4161c"/><circle cx="2.3" cy="21" r="1.8" fill="#c4161c"/></svg>
<div class="a" style="left:2114.8px;top:348.8px;width:5.4px;height:5.4px;background:#5e6b8a;border-radius:50%"></div>
<div class="a" style="left:2114.8px;top:358.8px;width:5.4px;height:5.4px;background:#5e6b8a;border-radius:50%"></div>
<div class="a" style="left:2114.8px;top:368.8px;width:5.4px;height:5.4px;background:#5e6b8a;border-radius:50%"></div>
<div class="a" style="left:2097.5px;top:988px;width:40px;height:40px;background:#ececec;border-radius:50%"></div>
<div class="a" style="left:2097.5px;top:1047.2px;width:40px;height:40px;background:#ececec;border-radius:50%"></div>
<div class="a" style="left:2097.5px;top:1107px;width:40px;height:40px;background:#ececec;border-radius:50%"></div>
<div class="a" style="left:2097.5px;top:1166.7px;width:40px;height:40px;background:#ececec;border-radius:50%"></div>
<div class="a" style="left:2097.5px;top:1226.4px;width:40px;height:40px;background:#ecebfc;border:1px solid #d9d5f7;border-radius:50%"></div>
<svg class="a" style="left:2107px;top:998px;" width="22" height="22" viewBox="0 0 22 22"><path d="M3.3 3 H17.8 V11.8 H12.8 V17.6 H3.3 Z" fill="#fff" stroke="#333" stroke-width="1.3" stroke-linejoin="miter"/><path d="M13.6 17.6 L17.9 12.4 V14.6 L15.6 17.6 Z" fill="#4b5a8e"/></svg>
<div class="t" style="left:2108.55px;top:1055.49px;font-size:17.5px;line-height:17.5px;letter-spacing:-0.965px;"><span style="color:#000">18</span></div>
<div class="t" style="left:2110.35px;top:1069.77px;font-size:13.5px;line-height:13.5px;letter-spacing:-0.266px;"><span style="color:#000">пн</span></div>
<svg class="a" style="left:2106px;top:1115px;" width="24" height="24" viewBox="0 0 24 24"><path d="M6 2.5 L9.5 7.5 L7.5 10 C8.5 13 11 15.5 14 16.5 L16.5 14.5 L21.5 18 L19.5 21.5 C12 22 2.5 12.5 2.5 5 Z" fill="none" stroke="#333" stroke-width="1.5" stroke-linejoin="round"/></svg>
<svg class="a" style="left:2106px;top:1175px;" width="24" height="22" viewBox="0 0 24 22"><path d="M6.5 16 C2.5 14.5 1.5 10 3.5 7 C6 3.5 14 2.5 18.5 5.5 C22.5 8.5 21.5 14 16 15.8 C13.5 16.6 10.5 16.6 8.5 16.2 L5 20 Z" fill="none" stroke="#333" stroke-width="1.5" stroke-linejoin="round"/></svg>
<svg class="a" style="left:2107px;top:1233px;" width="22" height="26" viewBox="0 0 22 26"><path d="M6.6 8.6 C6.6 5.6 8.8 4.2 11.3 4.2 C14 4.2 16.1 5.8 16.1 8.3 C16.1 10.6 14.6 11.5 13.1 12.5 C11.8 13.3 11.3 14.2 11.3 15.8 V17" fill="none" stroke="#5a48ad" stroke-width="2.6" stroke-linecap="round"/><circle cx="11.3" cy="21.1" r="1.7" fill="#5a48ad"/></svg>
<div class="a" style="left:0px;top:0px;width:2152px;height:1px;background:#3c3c3c"></div></body></html>
